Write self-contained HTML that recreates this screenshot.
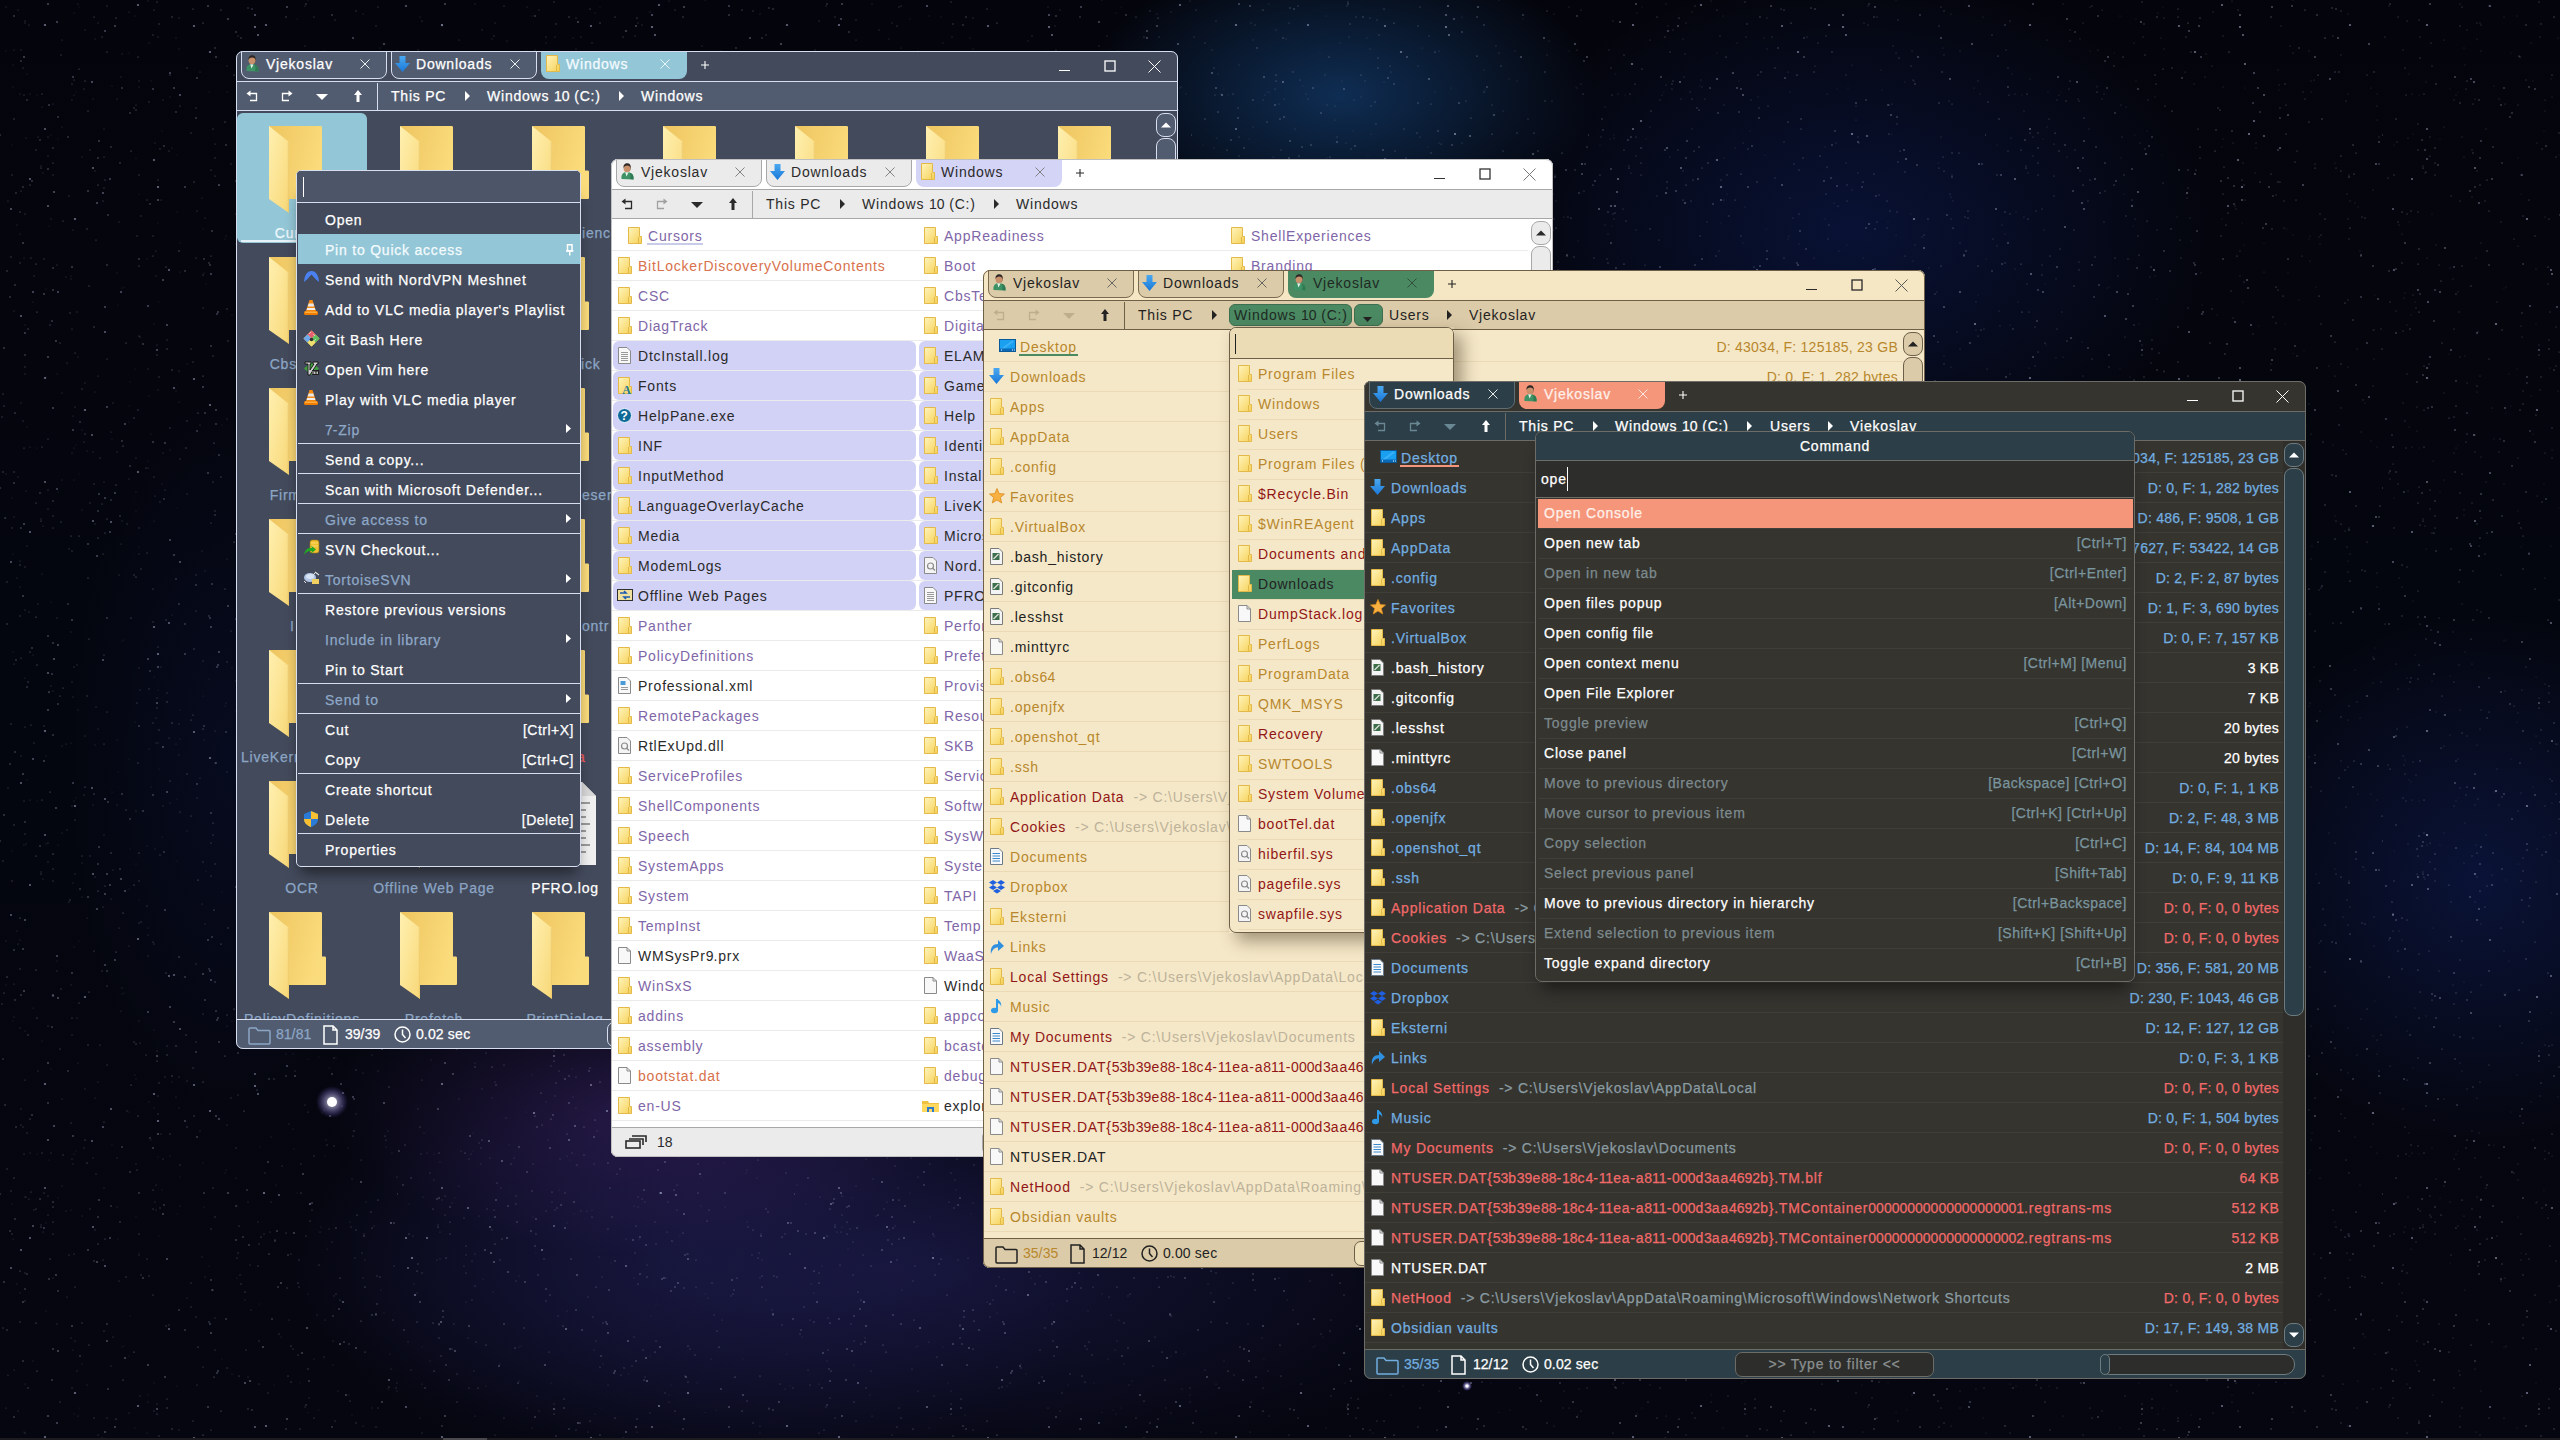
<!DOCTYPE html><html><head><meta charset="utf-8"><style>*{box-sizing:border-box}body{margin:0;width:2560px;height:1440px;overflow:hidden;position:relative;background:#05081a;font-family:"Liberation Sans",sans-serif;font-size:14px;letter-spacing:0.78px}.a{position:absolute}.t{position:absolute;white-space:nowrap;height:30px;line-height:30px}.dk .t{-webkit-text-stroke:0.25px currentColor}svg{position:absolute;overflow:visible}</style></head><body><svg width="0" height="0" style="position:absolute"><defs><linearGradient id="gfold" x1="0" y1="0" x2="1" y2="1"><stop offset="0" stop-color="#fff3b8"/><stop offset="1" stop-color="#f6d25a"/></linearGradient><linearGradient id="gblue" x1="0" y1="0" x2="0" y2="1"><stop offset="0" stop-color="#4aa8f0"/><stop offset="1" stop-color="#1a78d8"/></linearGradient><linearGradient id="gbigback" x1="0" y1="0" x2="1" y2="0.3"><stop offset="0" stop-color="#eec560"/><stop offset="1" stop-color="#fbdc7c"/></linearGradient><linearGradient id="gbigflap" x1="0" y1="0" x2="1" y2="1"><stop offset="0" stop-color="#fff0b0"/><stop offset="1" stop-color="#f8d878"/></linearGradient></defs></svg><div class="a" style="left:0;top:0;width:2560px;height:1440px;background:radial-gradient(ellipse 380px 170px at 650px 1110px, rgba(70,42,120,0.45), rgba(0,0,0,0) 85%),radial-gradient(ellipse 480px 260px at 700px 1260px, rgba(30,28,78,0.55), rgba(0,0,0,0) 85%),radial-gradient(ellipse 760px 260px at 900px 1270px, rgba(32,30,85,0.60), rgba(0,0,0,0) 80%),radial-gradient(ellipse 300px 170px at 1340px 95px, rgba(22,72,130,0.60), rgba(0,0,0,0) 85%),radial-gradient(ellipse 450px 320px at 1850px 230px, rgba(12,28,85,0.55), rgba(0,0,0,0) 80%),radial-gradient(ellipse 200px 450px at 230px 760px, rgba(12,20,60,0.35), rgba(0,0,0,0) 80%),radial-gradient(ellipse 330px 330px at 2480px 880px, rgba(16,32,95,0.50), rgba(0,0,0,0) 80%),linear-gradient(180deg, #04050c 0%, #04060f 50%, #05060f 100%)"></div><svg class="a" style="left:0;top:0" width="2560" height="1440"><defs><pattern id="sp0" width="397" height="353" patternUnits="userSpaceOnUse"><g fill="#c8d0f0"><circle cx="129" cy="53" r="0.5" fill-opacity="0.15"/><circle cx="213" cy="129" r="0.5" fill-opacity="0.51"/><circle cx="85" cy="30" r="0.8" fill-opacity="0.15"/><circle cx="36" cy="150" r="0.5" fill-opacity="0.53"/><circle cx="250" cy="206" r="0.5" fill-opacity="0.37"/><circle cx="157" cy="345" r="0.5" fill-opacity="0.36"/><circle cx="53" cy="148" r="1.1" fill-opacity="0.17"/><circle cx="122" cy="288" r="0.55" fill-opacity="0.16"/><circle cx="227" cy="66" r="0.5" fill-opacity="0.36"/><circle cx="25" cy="21" r="0.6" fill-opacity="0.33"/><circle cx="211" cy="274" r="0.9" fill-opacity="0.37"/><circle cx="180" cy="106" r="0.55" fill-opacity="0.42"/><circle cx="97" cy="203" r="1.1" fill-opacity="0.33"/><circle cx="136" cy="158" r="0.5" fill-opacity="0.17"/><circle cx="166" cy="267" r="0.55" fill-opacity="0.52"/><circle cx="167" cy="340" r="0.5" fill-opacity="0.45"/><circle cx="227" cy="309" r="0.7" fill-opacity="0.27"/><circle cx="139" cy="175" r="0.9" fill-opacity="0.15"/><circle cx="37" cy="95" r="0.5" fill-opacity="0.15"/><circle cx="278" cy="228" r="0.9" fill-opacity="0.24"/><circle cx="153" cy="236" r="0.5" fill-opacity="0.52"/><circle cx="141" cy="216" r="0.9" fill-opacity="0.15"/><circle cx="305" cy="46" r="0.6" fill-opacity="0.29"/><circle cx="364" cy="175" r="0.55" fill-opacity="0.31"/><circle cx="218" cy="312" r="0.8" fill-opacity="0.49"/><circle cx="111" cy="147" r="0.7" fill-opacity="0.41"/><circle cx="151" cy="81" r="0.5" fill-opacity="0.20"/><circle cx="92" cy="82" r="0.9" fill-opacity="0.48"/><circle cx="72" cy="100" r="0.55" fill-opacity="0.30"/><circle cx="147" cy="200" r="0.55" fill-opacity="0.42"/><circle cx="205" cy="218" r="0.5" fill-opacity="0.32"/><circle cx="346" cy="336" r="1.1" fill-opacity="0.29"/><circle cx="158" cy="37" r="0.8" fill-opacity="0.15"/><circle cx="27" cy="74" r="0.55" fill-opacity="0.17"/><circle cx="238" cy="36" r="0.55" fill-opacity="0.35"/><circle cx="377" cy="217" r="0.5" fill-opacity="0.50"/><circle cx="244" cy="52" r="0.6" fill-opacity="0.53"/><circle cx="239" cy="167" r="0.5" fill-opacity="0.49"/><circle cx="394" cy="164" r="0.9" fill-opacity="0.25"/><circle cx="57" cy="265" r="0.6" fill-opacity="0.33"/><circle cx="275" cy="182" r="0.6" fill-opacity="0.53"/><circle cx="210" cy="52" r="1.1" fill-opacity="0.51"/><circle cx="301" cy="105" r="0.5" fill-opacity="0.42"/><circle cx="104" cy="129" r="0.55" fill-opacity="0.27"/><circle cx="88" cy="191" r="1.1" fill-opacity="0.26"/><circle cx="89" cy="286" r="0.6" fill-opacity="0.47"/><circle cx="325" cy="261" r="0.6" fill-opacity="0.21"/><circle cx="196" cy="258" r="0.5" fill-opacity="0.46"/><circle cx="187" cy="68" r="0.7" fill-opacity="0.31"/><circle cx="372" cy="349" r="0.7" fill-opacity="0.15"/><circle cx="41" cy="166" r="0.7" fill-opacity="0.21"/><circle cx="248" cy="318" r="0.5" fill-opacity="0.33"/><circle cx="259" cy="282" r="0.5" fill-opacity="0.48"/><circle cx="48" cy="137" r="0.6" fill-opacity="0.33"/><circle cx="71" cy="279" r="0.7" fill-opacity="0.16"/><circle cx="376" cy="255" r="0.9" fill-opacity="0.29"/><circle cx="376" cy="256" r="0.55" fill-opacity="0.55"/><circle cx="11" cy="209" r="0.9" fill-opacity="0.47"/><circle cx="58" cy="292" r="0.9" fill-opacity="0.40"/><circle cx="139" cy="194" r="0.55" fill-opacity="0.13"/><circle cx="317" cy="256" r="0.5" fill-opacity="0.35"/><circle cx="371" cy="153" r="0.6" fill-opacity="0.48"/><circle cx="84" cy="89" r="0.6" fill-opacity="0.34"/><circle cx="303" cy="115" r="1.1" fill-opacity="0.30"/><circle cx="52" cy="321" r="0.7" fill-opacity="0.51"/><circle cx="263" cy="288" r="1.1" fill-opacity="0.30"/><circle cx="364" cy="177" r="1.1" fill-opacity="0.19"/><circle cx="203" cy="308" r="0.55" fill-opacity="0.38"/><circle cx="308" cy="53" r="0.55" fill-opacity="0.32"/><circle cx="288" cy="196" r="0.7" fill-opacity="0.41"/><circle cx="211" cy="170" r="0.5" fill-opacity="0.50"/><circle cx="23" cy="68" r="0.5" fill-opacity="0.45"/><circle cx="202" cy="198" r="0.5" fill-opacity="0.31"/><circle cx="243" cy="178" r="1.1" fill-opacity="0.21"/><circle cx="110" cy="179" r="0.9" fill-opacity="0.34"/><circle cx="98" cy="185" r="0.6" fill-opacity="0.52"/><circle cx="354" cy="72" r="0.9" fill-opacity="0.18"/><circle cx="48" cy="156" r="0.5" fill-opacity="0.41"/><circle cx="170" cy="75" r="0.6" fill-opacity="0.46"/><circle cx="356" cy="55" r="0.7" fill-opacity="0.18"/><circle cx="350" cy="342" r="0.6" fill-opacity="0.44"/><circle cx="37" cy="312" r="0.55" fill-opacity="0.55"/><circle cx="330" cy="57" r="0.8" fill-opacity="0.55"/><circle cx="160" cy="149" r="0.7" fill-opacity="0.26"/><circle cx="287" cy="7" r="1.1" fill-opacity="0.32"/><circle cx="279" cy="136" r="1.1" fill-opacity="0.39"/><circle cx="203" cy="23" r="0.6" fill-opacity="0.54"/><circle cx="42" cy="94" r="0.5" fill-opacity="0.51"/><circle cx="72" cy="267" r="0.8" fill-opacity="0.49"/><circle cx="268" cy="334" r="0.8" fill-opacity="0.18"/><circle cx="365" cy="201" r="0.7" fill-opacity="0.16"/><circle cx="23" cy="243" r="0.8" fill-opacity="0.50"/><circle cx="107" cy="6" r="0.5" fill-opacity="0.46"/><circle cx="33" cy="302" r="0.5" fill-opacity="0.23"/><circle cx="48" cy="4" r="1.1" fill-opacity="0.30"/><circle cx="363" cy="219" r="0.5" fill-opacity="0.35"/><circle cx="95" cy="39" r="0.55" fill-opacity="0.23"/><circle cx="72" cy="329" r="0.6" fill-opacity="0.35"/><circle cx="82" cy="157" r="0.55" fill-opacity="0.24"/><circle cx="319" cy="351" r="0.5" fill-opacity="0.13"/><circle cx="291" cy="195" r="0.6" fill-opacity="0.34"/><circle cx="98" cy="158" r="0.8" fill-opacity="0.40"/><circle cx="217" cy="314" r="1.1" fill-opacity="0.25"/><circle cx="85" cy="81" r="0.6" fill-opacity="0.48"/><circle cx="281" cy="224" r="0.8" fill-opacity="0.55"/><circle cx="390" cy="295" r="0.5" fill-opacity="0.15"/><circle cx="294" cy="90" r="0.55" fill-opacity="0.14"/><circle cx="264" cy="134" r="1.1" fill-opacity="0.41"/><circle cx="112" cy="86" r="0.6" fill-opacity="0.14"/><circle cx="74" cy="95" r="0.5" fill-opacity="0.23"/><circle cx="382" cy="343" r="1.1" fill-opacity="0.26"/><circle cx="14" cy="311" r="0.6" fill-opacity="0.27"/><circle cx="0" cy="135" r="0.9" fill-opacity="0.24"/><circle cx="260" cy="88" r="0.5" fill-opacity="0.16"/><circle cx="324" cy="51" r="0.5" fill-opacity="0.29"/><circle cx="119" cy="222" r="0.5" fill-opacity="0.37"/><circle cx="210" cy="265" r="0.8" fill-opacity="0.45"/><circle cx="286" cy="174" r="0.6" fill-opacity="0.43"/><circle cx="255" cy="15" r="1.1" fill-opacity="0.39"/><circle cx="291" cy="287" r="0.55" fill-opacity="0.51"/><circle cx="299" cy="201" r="0.5" fill-opacity="0.48"/><circle cx="232" cy="315" r="0.6" fill-opacity="0.16"/><circle cx="17" cy="225" r="0.5" fill-opacity="0.28"/><circle cx="179" cy="18" r="0.5" fill-opacity="0.39"/><circle cx="270" cy="173" r="0.5" fill-opacity="0.32"/><circle cx="28" cy="329" r="1.1" fill-opacity="0.16"/><circle cx="209" cy="263" r="0.9" fill-opacity="0.23"/><circle cx="30" cy="94" r="0.6" fill-opacity="0.22"/><circle cx="258" cy="163" r="0.8" fill-opacity="0.15"/><circle cx="361" cy="101" r="0.5" fill-opacity="0.39"/><circle cx="255" cy="27" r="0.55" fill-opacity="0.26"/><circle cx="259" cy="245" r="0.55" fill-opacity="0.13"/><circle cx="24" cy="95" r="0.5" fill-opacity="0.42"/><circle cx="268" cy="103" r="1.1" fill-opacity="0.24"/><circle cx="185" cy="271" r="1.1" fill-opacity="0.21"/><circle cx="388" cy="330" r="0.5" fill-opacity="0.24"/><circle cx="30" cy="179" r="0.9" fill-opacity="0.55"/><circle cx="154" cy="324" r="0.6" fill-opacity="0.15"/><circle cx="36" cy="264" r="0.6" fill-opacity="0.53"/><circle cx="53" cy="290" r="1.1" fill-opacity="0.24"/><circle cx="45" cy="129" r="0.9" fill-opacity="0.51"/><circle cx="193" cy="9" r="0.5" fill-opacity="0.53"/><circle cx="271" cy="143" r="0.55" fill-opacity="0.30"/><circle cx="149" cy="43" r="0.7" fill-opacity="0.12"/><circle cx="298" cy="296" r="0.5" fill-opacity="0.52"/><circle cx="78" cy="4" r="0.6" fill-opacity="0.23"/><circle cx="26" cy="138" r="0.5" fill-opacity="0.28"/><circle cx="170" cy="97" r="0.5" fill-opacity="0.24"/><circle cx="20" cy="234" r="0.55" fill-opacity="0.23"/><circle cx="105" cy="180" r="0.6" fill-opacity="0.45"/><circle cx="312" cy="151" r="0.5" fill-opacity="0.47"/><circle cx="250" cy="322" r="1.1" fill-opacity="0.36"/><circle cx="286" cy="17" r="0.8" fill-opacity="0.31"/><circle cx="299" cy="228" r="0.6" fill-opacity="0.33"/><circle cx="362" cy="194" r="0.55" fill-opacity="0.32"/><circle cx="136" cy="105" r="0.6" fill-opacity="0.29"/><circle cx="95" cy="171" r="0.8" fill-opacity="0.17"/><circle cx="255" cy="27" r="1.1" fill-opacity="0.51"/><circle cx="197" cy="78" r="0.7" fill-opacity="0.55"/><circle cx="179" cy="49" r="0.6" fill-opacity="0.22"/><circle cx="69" cy="196" r="0.7" fill-opacity="0.22"/><circle cx="103" cy="201" r="0.5" fill-opacity="0.44"/><circle cx="164" cy="146" r="1.1" fill-opacity="0.21"/><circle cx="107" cy="265" r="0.9" fill-opacity="0.24"/><circle cx="384" cy="44" r="1.1" fill-opacity="0.35"/><circle cx="314" cy="300" r="0.5" fill-opacity="0.24"/><circle cx="99" cy="141" r="0.9" fill-opacity="0.31"/><circle cx="124" cy="287" r="0.5" fill-opacity="0.17"/><circle cx="169" cy="270" r="0.9" fill-opacity="0.54"/><circle cx="194" cy="26" r="1.1" fill-opacity="0.49"/><circle cx="386" cy="88" r="0.5" fill-opacity="0.22"/><circle cx="60" cy="343" r="0.5" fill-opacity="0.52"/><circle cx="287" cy="229" r="0.9" fill-opacity="0.16"/><circle cx="308" cy="0" r="0.55" fill-opacity="0.22"/><circle cx="365" cy="228" r="0.6" fill-opacity="0.53"/><circle cx="249" cy="186" r="0.8" fill-opacity="0.42"/><circle cx="45" cy="25" r="1.1" fill-opacity="0.53"/><circle cx="76" cy="92" r="0.5" fill-opacity="0.12"/><circle cx="120" cy="163" r="0.7" fill-opacity="0.40"/><circle cx="351" cy="168" r="0.6" fill-opacity="0.36"/><circle cx="12" cy="145" r="0.6" fill-opacity="0.14"/><circle cx="77" cy="312" r="0.8" fill-opacity="0.15"/><circle cx="90" cy="150" r="0.7" fill-opacity="0.22"/><circle cx="14" cy="119" r="0.8" fill-opacity="0.28"/><circle cx="157" cy="2" r="0.6" fill-opacity="0.44"/><circle cx="200" cy="72" r="0.6" fill-opacity="0.25"/><circle cx="326" cy="81" r="0.6" fill-opacity="0.23"/><circle cx="353" cy="38" r="0.9" fill-opacity="0.38"/><circle cx="356" cy="171" r="0.5" fill-opacity="0.53"/><circle cx="58" cy="139" r="0.6" fill-opacity="0.13"/><circle cx="237" cy="147" r="0.5" fill-opacity="0.20"/><circle cx="179" cy="251" r="0.7" fill-opacity="0.44"/><circle cx="396" cy="329" r="0.7" fill-opacity="0.20"/><circle cx="259" cy="185" r="0.9" fill-opacity="0.13"/><circle cx="264" cy="134" r="0.7" fill-opacity="0.54"/><circle cx="176" cy="38" r="0.5" fill-opacity="0.24"/><circle cx="140" cy="337" r="0.5" fill-opacity="0.36"/><circle cx="301" cy="134" r="0.6" fill-opacity="0.47"/><circle cx="172" cy="17" r="0.9" fill-opacity="0.20"/><circle cx="215" cy="158" r="0.7" fill-opacity="0.28"/><circle cx="356" cy="11" r="0.8" fill-opacity="0.23"/><circle cx="248" cy="143" r="0.8" fill-opacity="0.13"/><circle cx="25" cy="325" r="0.6" fill-opacity="0.20"/><circle cx="25" cy="214" r="0.7" fill-opacity="0.24"/><circle cx="380" cy="218" r="0.6" fill-opacity="0.44"/><circle cx="274" cy="326" r="0.6" fill-opacity="0.12"/><circle cx="300" cy="324" r="0.5" fill-opacity="0.13"/><circle cx="93" cy="168" r="0.9" fill-opacity="0.53"/><circle cx="153" cy="89" r="0.8" fill-opacity="0.47"/><circle cx="53" cy="175" r="0.5" fill-opacity="0.47"/><circle cx="293" cy="290" r="0.55" fill-opacity="0.38"/><circle cx="130" cy="113" r="0.7" fill-opacity="0.46"/><circle cx="236" cy="181" r="0.8" fill-opacity="0.44"/><circle cx="98" cy="23" r="0.5" fill-opacity="0.33"/><circle cx="216" cy="57" r="0.8" fill-opacity="0.50"/><circle cx="392" cy="94" r="0.5" fill-opacity="0.21"/><circle cx="167" cy="349" r="0.9" fill-opacity="0.19"/><circle cx="53" cy="163" r="0.6" fill-opacity="0.44"/><circle cx="336" cy="235" r="0.5" fill-opacity="0.46"/><circle cx="117" cy="99" r="0.6" fill-opacity="0.28"/><circle cx="293" cy="70" r="0.6" fill-opacity="0.20"/><circle cx="93" cy="99" r="0.6" fill-opacity="0.26"/><circle cx="157" cy="350" r="1.1" fill-opacity="0.35"/><circle cx="258" cy="35" r="0.9" fill-opacity="0.55"/><circle cx="41" cy="168" r="0.6" fill-opacity="0.48"/><circle cx="363" cy="14" r="0.6" fill-opacity="0.22"/><circle cx="20" cy="212" r="0.6" fill-opacity="0.52"/><circle cx="148" cy="306" r="0.9" fill-opacity="0.38"/><circle cx="308" cy="235" r="0.5" fill-opacity="0.17"/><circle cx="237" cy="219" r="0.6" fill-opacity="0.14"/><circle cx="135" cy="16" r="0.6" fill-opacity="0.14"/><circle cx="291" cy="323" r="0.5" fill-opacity="0.47"/><circle cx="162" cy="131" r="0.6" fill-opacity="0.15"/><circle cx="12" cy="175" r="0.9" fill-opacity="0.15"/><circle cx="40" cy="140" r="1.1" fill-opacity="0.19"/><circle cx="212" cy="231" r="0.8" fill-opacity="0.42"/><circle cx="163" cy="100" r="0.6" fill-opacity="0.30"/><circle cx="20" cy="263" r="0.7" fill-opacity="0.30"/><circle cx="7" cy="271" r="0.7" fill-opacity="0.40"/><circle cx="155" cy="143" r="0.5" fill-opacity="0.31"/><circle cx="62" cy="40" r="0.5" fill-opacity="0.29"/><circle cx="350" cy="163" r="0.55" fill-opacity="0.18"/><circle cx="21" cy="50" r="0.8" fill-opacity="0.16"/><circle cx="247" cy="131" r="1.1" fill-opacity="0.19"/><circle cx="138" cy="57" r="0.55" fill-opacity="0.52"/><circle cx="43" cy="173" r="0.6" fill-opacity="0.25"/><circle cx="332" cy="15" r="0.9" fill-opacity="0.26"/><circle cx="241" cy="225" r="0.5" fill-opacity="0.51"/><circle cx="246" cy="291" r="0.55" fill-opacity="0.40"/><circle cx="340" cy="219" r="0.6" fill-opacity="0.48"/><circle cx="73" cy="77" r="0.8" fill-opacity="0.52"/><circle cx="62" cy="127" r="0.55" fill-opacity="0.23"/><circle cx="288" cy="317" r="0.5" fill-opacity="0.50"/><circle cx="334" cy="237" r="0.7" fill-opacity="0.17"/><circle cx="238" cy="194" r="0.6" fill-opacity="0.40"/><circle cx="122" cy="88" r="0.8" fill-opacity="0.40"/><circle cx="177" cy="155" r="0.5" fill-opacity="0.12"/><circle cx="391" cy="164" r="0.9" fill-opacity="0.45"/><circle cx="310" cy="162" r="0.55" fill-opacity="0.47"/><circle cx="159" cy="24" r="0.7" fill-opacity="0.31"/></g></pattern><pattern id="sp1" width="521" height="467" patternUnits="userSpaceOnUse"><g fill="#c8d0f0"><circle cx="48" cy="206" r="1.1" fill-opacity="0.40"/><circle cx="21" cy="61" r="0.7" fill-opacity="0.45"/><circle cx="266" cy="25" r="1.1" fill-opacity="0.50"/><circle cx="340" cy="366" r="0.5" fill-opacity="0.49"/><circle cx="519" cy="342" r="0.5" fill-opacity="0.20"/><circle cx="511" cy="230" r="0.55" fill-opacity="0.42"/><circle cx="376" cy="103" r="0.7" fill-opacity="0.38"/><circle cx="131" cy="151" r="0.6" fill-opacity="0.51"/><circle cx="238" cy="119" r="0.9" fill-opacity="0.21"/><circle cx="137" cy="236" r="0.7" fill-opacity="0.28"/><circle cx="104" cy="188" r="0.6" fill-opacity="0.41"/><circle cx="467" cy="79" r="0.6" fill-opacity="0.17"/><circle cx="277" cy="297" r="0.7" fill-opacity="0.54"/><circle cx="236" cy="244" r="0.5" fill-opacity="0.23"/><circle cx="279" cy="400" r="0.7" fill-opacity="0.23"/><circle cx="516" cy="270" r="0.7" fill-opacity="0.26"/><circle cx="42" cy="107" r="0.5" fill-opacity="0.25"/><circle cx="269" cy="145" r="0.7" fill-opacity="0.44"/><circle cx="389" cy="104" r="0.6" fill-opacity="0.38"/><circle cx="225" cy="239" r="0.5" fill-opacity="0.18"/><circle cx="118" cy="305" r="0.5" fill-opacity="0.14"/><circle cx="295" cy="142" r="1.1" fill-opacity="0.27"/><circle cx="117" cy="273" r="0.55" fill-opacity="0.21"/><circle cx="325" cy="222" r="0.55" fill-opacity="0.13"/><circle cx="418" cy="330" r="0.9" fill-opacity="0.16"/><circle cx="333" cy="407" r="0.6" fill-opacity="0.29"/><circle cx="138" cy="5" r="1.1" fill-opacity="0.50"/><circle cx="310" cy="270" r="1.1" fill-opacity="0.44"/><circle cx="129" cy="422" r="0.5" fill-opacity="0.15"/><circle cx="13" cy="87" r="0.55" fill-opacity="0.15"/><circle cx="406" cy="6" r="1.1" fill-opacity="0.40"/><circle cx="103" cy="193" r="1.1" fill-opacity="0.38"/><circle cx="264" cy="300" r="0.55" fill-opacity="0.34"/><circle cx="33" cy="292" r="0.9" fill-opacity="0.43"/><circle cx="3" cy="394" r="0.9" fill-opacity="0.15"/><circle cx="342" cy="82" r="0.5" fill-opacity="0.23"/><circle cx="336" cy="58" r="0.6" fill-opacity="0.43"/><circle cx="139" cy="259" r="0.8" fill-opacity="0.41"/><circle cx="478" cy="454" r="0.6" fill-opacity="0.40"/><circle cx="503" cy="101" r="1.1" fill-opacity="0.13"/><circle cx="136" cy="110" r="0.6" fill-opacity="0.53"/><circle cx="389" cy="153" r="0.8" fill-opacity="0.26"/><circle cx="125" cy="424" r="1.1" fill-opacity="0.32"/><circle cx="437" cy="326" r="0.5" fill-opacity="0.31"/><circle cx="378" cy="266" r="0.6" fill-opacity="0.46"/><circle cx="204" cy="273" r="0.55" fill-opacity="0.18"/><circle cx="14" cy="50" r="0.55" fill-opacity="0.27"/><circle cx="74" cy="13" r="0.5" fill-opacity="0.18"/><circle cx="335" cy="20" r="0.5" fill-opacity="0.44"/><circle cx="34" cy="276" r="0.7" fill-opacity="0.21"/><circle cx="497" cy="249" r="0.5" fill-opacity="0.50"/><circle cx="394" cy="332" r="0.8" fill-opacity="0.17"/><circle cx="107" cy="52" r="0.5" fill-opacity="0.53"/><circle cx="475" cy="352" r="0.5" fill-opacity="0.47"/><circle cx="329" cy="134" r="0.5" fill-opacity="0.18"/><circle cx="413" cy="302" r="0.6" fill-opacity="0.26"/><circle cx="221" cy="10" r="0.6" fill-opacity="0.52"/><circle cx="25" cy="355" r="0.7" fill-opacity="0.45"/><circle cx="314" cy="222" r="0.6" fill-opacity="0.39"/><circle cx="16" cy="193" r="0.8" fill-opacity="0.34"/><circle cx="51" cy="219" r="0.5" fill-opacity="0.35"/><circle cx="113" cy="403" r="0.5" fill-opacity="0.37"/><circle cx="150" cy="204" r="1.1" fill-opacity="0.21"/><circle cx="397" cy="457" r="0.5" fill-opacity="0.27"/><circle cx="50" cy="325" r="0.55" fill-opacity="0.54"/><circle cx="309" cy="447" r="1.1" fill-opacity="0.23"/><circle cx="492" cy="133" r="0.6" fill-opacity="0.52"/><circle cx="121" cy="77" r="0.5" fill-opacity="0.33"/><circle cx="516" cy="262" r="0.5" fill-opacity="0.39"/><circle cx="185" cy="187" r="0.8" fill-opacity="0.50"/><circle cx="388" cy="197" r="0.5" fill-opacity="0.28"/><circle cx="158" cy="200" r="1.1" fill-opacity="0.34"/><circle cx="198" cy="413" r="0.6" fill-opacity="0.53"/><circle cx="66" cy="277" r="0.5" fill-opacity="0.27"/><circle cx="170" cy="73" r="0.9" fill-opacity="0.40"/><circle cx="387" cy="79" r="0.9" fill-opacity="0.42"/><circle cx="134" cy="108" r="0.7" fill-opacity="0.32"/><circle cx="461" cy="111" r="0.6" fill-opacity="0.24"/><circle cx="393" cy="386" r="0.55" fill-opacity="0.43"/><circle cx="508" cy="338" r="1.1" fill-opacity="0.27"/><circle cx="123" cy="446" r="0.6" fill-opacity="0.54"/><circle cx="380" cy="48" r="0.5" fill-opacity="0.20"/><circle cx="79" cy="69" r="0.6" fill-opacity="0.44"/><circle cx="227" cy="92" r="0.5" fill-opacity="0.24"/><circle cx="461" cy="217" r="0.5" fill-opacity="0.29"/><circle cx="412" cy="324" r="1.1" fill-opacity="0.54"/><circle cx="154" cy="10" r="0.6" fill-opacity="0.38"/><circle cx="211" cy="346" r="0.8" fill-opacity="0.42"/><circle cx="306" cy="302" r="0.6" fill-opacity="0.41"/><circle cx="340" cy="410" r="0.6" fill-opacity="0.41"/><circle cx="334" cy="212" r="0.7" fill-opacity="0.23"/><circle cx="365" cy="418" r="0.6" fill-opacity="0.46"/><circle cx="372" cy="294" r="0.6" fill-opacity="0.49"/><circle cx="252" cy="9" r="0.8" fill-opacity="0.34"/><circle cx="344" cy="408" r="0.7" fill-opacity="0.45"/><circle cx="203" cy="229" r="0.5" fill-opacity="0.14"/><circle cx="283" cy="75" r="0.6" fill-opacity="0.34"/><circle cx="53" cy="268" r="1.1" fill-opacity="0.21"/><circle cx="248" cy="8" r="0.7" fill-opacity="0.34"/><circle cx="214" cy="443" r="0.6" fill-opacity="0.55"/><circle cx="96" cy="240" r="0.5" fill-opacity="0.43"/><circle cx="320" cy="298" r="0.6" fill-opacity="0.24"/><circle cx="208" cy="6" r="0.8" fill-opacity="0.51"/><circle cx="327" cy="315" r="0.6" fill-opacity="0.17"/><circle cx="158" cy="187" r="1.1" fill-opacity="0.54"/><circle cx="518" cy="449" r="0.9" fill-opacity="0.21"/><circle cx="67" cy="363" r="0.6" fill-opacity="0.32"/><circle cx="293" cy="106" r="0.55" fill-opacity="0.27"/><circle cx="333" cy="382" r="0.8" fill-opacity="0.32"/><circle cx="153" cy="256" r="0.55" fill-opacity="0.46"/><circle cx="245" cy="366" r="0.6" fill-opacity="0.23"/><circle cx="196" cy="118" r="0.8" fill-opacity="0.41"/><circle cx="251" cy="376" r="0.6" fill-opacity="0.27"/><circle cx="341" cy="150" r="0.9" fill-opacity="0.30"/><circle cx="332" cy="308" r="0.7" fill-opacity="0.19"/><circle cx="158" cy="180" r="0.5" fill-opacity="0.48"/><circle cx="472" cy="366" r="0.55" fill-opacity="0.35"/><circle cx="180" cy="272" r="0.5" fill-opacity="0.21"/><circle cx="38" cy="137" r="0.5" fill-opacity="0.37"/><circle cx="445" cy="87" r="0.9" fill-opacity="0.27"/><circle cx="80" cy="422" r="1.1" fill-opacity="0.19"/><circle cx="464" cy="284" r="0.5" fill-opacity="0.41"/><circle cx="466" cy="368" r="0.6" fill-opacity="0.20"/><circle cx="361" cy="248" r="0.9" fill-opacity="0.41"/><circle cx="61" cy="55" r="0.8" fill-opacity="0.22"/><circle cx="73" cy="230" r="0.5" fill-opacity="0.33"/><circle cx="472" cy="327" r="0.6" fill-opacity="0.33"/><circle cx="281" cy="403" r="0.5" fill-opacity="0.19"/><circle cx="167" cy="325" r="0.9" fill-opacity="0.41"/><circle cx="438" cy="175" r="0.8" fill-opacity="0.55"/><circle cx="352" cy="84" r="0.7" fill-opacity="0.39"/><circle cx="15" cy="285" r="0.7" fill-opacity="0.47"/><circle cx="49" cy="226" r="0.55" fill-opacity="0.13"/><circle cx="374" cy="292" r="0.7" fill-opacity="0.16"/><circle cx="343" cy="159" r="1.1" fill-opacity="0.36"/><circle cx="475" cy="133" r="0.7" fill-opacity="0.30"/><circle cx="289" cy="386" r="0.6" fill-opacity="0.27"/><circle cx="257" cy="156" r="0.6" fill-opacity="0.50"/><circle cx="180" cy="95" r="0.9" fill-opacity="0.46"/><circle cx="172" cy="148" r="0.6" fill-opacity="0.17"/><circle cx="507" cy="41" r="0.5" fill-opacity="0.29"/><circle cx="289" cy="190" r="0.5" fill-opacity="0.29"/><circle cx="57" cy="22" r="0.9" fill-opacity="0.38"/><circle cx="343" cy="368" r="1.1" fill-opacity="0.38"/><circle cx="321" cy="293" r="0.5" fill-opacity="0.21"/><circle cx="348" cy="214" r="0.55" fill-opacity="0.16"/><circle cx="94" cy="17" r="0.5" fill-opacity="0.51"/><circle cx="342" cy="172" r="0.55" fill-opacity="0.46"/><circle cx="293" cy="120" r="0.6" fill-opacity="0.20"/><circle cx="18" cy="10" r="0.5" fill-opacity="0.33"/><circle cx="272" cy="385" r="0.8" fill-opacity="0.37"/><circle cx="479" cy="209" r="0.5" fill-opacity="0.41"/><circle cx="309" cy="464" r="0.55" fill-opacity="0.32"/><circle cx="215" cy="48" r="0.9" fill-opacity="0.21"/><circle cx="79" cy="7" r="0.5" fill-opacity="0.12"/><circle cx="349" cy="461" r="0.5" fill-opacity="0.21"/><circle cx="63" cy="221" r="0.6" fill-opacity="0.43"/><circle cx="126" cy="343" r="0.55" fill-opacity="0.52"/><circle cx="191" cy="349" r="0.55" fill-opacity="0.43"/><circle cx="44" cy="294" r="0.9" fill-opacity="0.32"/><circle cx="486" cy="119" r="0.5" fill-opacity="0.43"/><circle cx="6" cy="7" r="0.5" fill-opacity="0.29"/><circle cx="163" cy="280" r="0.9" fill-opacity="0.38"/><circle cx="165" cy="443" r="0.9" fill-opacity="0.32"/><circle cx="87" cy="451" r="0.5" fill-opacity="0.28"/><circle cx="336" cy="294" r="0.8" fill-opacity="0.33"/><circle cx="405" cy="211" r="0.6" fill-opacity="0.46"/><circle cx="295" cy="137" r="0.5" fill-opacity="0.39"/><circle cx="339" cy="375" r="0.7" fill-opacity="0.49"/><circle cx="378" cy="7" r="0.55" fill-opacity="0.38"/><circle cx="161" cy="200" r="0.6" fill-opacity="0.28"/><circle cx="357" cy="281" r="0.6" fill-opacity="0.47"/><circle cx="148" cy="1" r="0.6" fill-opacity="0.24"/><circle cx="82" cy="430" r="0.5" fill-opacity="0.24"/><circle cx="73" cy="416" r="0.55" fill-opacity="0.24"/><circle cx="443" cy="377" r="0.9" fill-opacity="0.27"/><circle cx="44" cy="259" r="0.8" fill-opacity="0.21"/><circle cx="391" cy="435" r="0.6" fill-opacity="0.25"/><circle cx="30" cy="185" r="0.6" fill-opacity="0.52"/><circle cx="306" cy="4" r="0.8" fill-opacity="0.32"/><circle cx="46" cy="377" r="0.5" fill-opacity="0.22"/><circle cx="302" cy="419" r="1.1" fill-opacity="0.26"/><circle cx="264" cy="94" r="0.6" fill-opacity="0.20"/><circle cx="94" cy="327" r="0.7" fill-opacity="0.37"/><circle cx="187" cy="364" r="0.55" fill-opacity="0.23"/><circle cx="481" cy="230" r="0.5" fill-opacity="0.28"/><circle cx="241" cy="38" r="0.7" fill-opacity="0.38"/><circle cx="180" cy="243" r="0.5" fill-opacity="0.16"/><circle cx="107" cy="407" r="0.9" fill-opacity="0.37"/><circle cx="111" cy="432" r="0.6" fill-opacity="0.30"/><circle cx="493" cy="358" r="0.55" fill-opacity="0.23"/><circle cx="20" cy="94" r="0.55" fill-opacity="0.28"/><circle cx="14" cy="16" r="0.7" fill-opacity="0.49"/><circle cx="239" cy="442" r="0.5" fill-opacity="0.49"/><circle cx="333" cy="431" r="0.5" fill-opacity="0.23"/><circle cx="294" cy="299" r="1.1" fill-opacity="0.29"/><circle cx="234" cy="75" r="0.6" fill-opacity="0.55"/><circle cx="116" cy="18" r="0.6" fill-opacity="0.52"/><circle cx="31" cy="258" r="0.5" fill-opacity="0.48"/><circle cx="25" cy="367" r="0.9" fill-opacity="0.14"/><circle cx="75" cy="353" r="0.6" fill-opacity="0.41"/><circle cx="156" cy="276" r="0.5" fill-opacity="0.32"/><circle cx="194" cy="182" r="0.7" fill-opacity="0.33"/><circle cx="88" cy="111" r="0.55" fill-opacity="0.51"/><circle cx="465" cy="219" r="0.6" fill-opacity="0.46"/><circle cx="82" cy="389" r="0.5" fill-opacity="0.52"/><circle cx="452" cy="415" r="0.55" fill-opacity="0.45"/><circle cx="499" cy="432" r="0.8" fill-opacity="0.48"/><circle cx="327" cy="211" r="0.7" fill-opacity="0.26"/><circle cx="122" cy="54" r="0.7" fill-opacity="0.18"/><circle cx="115" cy="26" r="0.9" fill-opacity="0.36"/><circle cx="75" cy="407" r="0.6" fill-opacity="0.30"/><circle cx="129" cy="12" r="0.6" fill-opacity="0.26"/><circle cx="87" cy="229" r="0.7" fill-opacity="0.32"/><circle cx="251" cy="72" r="1.1" fill-opacity="0.14"/><circle cx="466" cy="312" r="0.6" fill-opacity="0.36"/><circle cx="435" cy="56" r="0.6" fill-opacity="0.54"/><circle cx="225" cy="122" r="0.6" fill-opacity="0.52"/><circle cx="51" cy="135" r="0.55" fill-opacity="0.14"/><circle cx="378" cy="137" r="0.5" fill-opacity="0.31"/><circle cx="265" cy="239" r="0.9" fill-opacity="0.12"/><circle cx="434" cy="246" r="0.55" fill-opacity="0.27"/><circle cx="21" cy="191" r="0.6" fill-opacity="0.37"/><circle cx="72" cy="84" r="0.6" fill-opacity="0.43"/><circle cx="102" cy="37" r="0.5" fill-opacity="0.50"/><circle cx="381" cy="356" r="0.55" fill-opacity="0.21"/><circle cx="319" cy="331" r="0.6" fill-opacity="0.37"/><circle cx="105" cy="31" r="1.1" fill-opacity="0.30"/><circle cx="376" cy="26" r="0.7" fill-opacity="0.26"/><circle cx="439" cy="404" r="0.9" fill-opacity="0.16"/><circle cx="213" cy="356" r="0.55" fill-opacity="0.49"/><circle cx="139" cy="87" r="0.7" fill-opacity="0.14"/><circle cx="366" cy="268" r="0.5" fill-opacity="0.27"/><circle cx="486" cy="452" r="0.5" fill-opacity="0.17"/><circle cx="372" cy="381" r="0.7" fill-opacity="0.46"/><circle cx="452" cy="269" r="0.5" fill-opacity="0.25"/><circle cx="56" cy="341" r="0.9" fill-opacity="0.34"/><circle cx="276" cy="251" r="0.5" fill-opacity="0.22"/><circle cx="46" cy="289" r="0.55" fill-opacity="0.16"/><circle cx="130" cy="382" r="0.5" fill-opacity="0.13"/><circle cx="483" cy="345" r="0.6" fill-opacity="0.13"/><circle cx="312" cy="269" r="1.1" fill-opacity="0.22"/><circle cx="231" cy="164" r="0.5" fill-opacity="0.43"/><circle cx="24" cy="57" r="0.9" fill-opacity="0.37"/><circle cx="397" cy="51" r="0.5" fill-opacity="0.29"/><circle cx="71" cy="276" r="0.6" fill-opacity="0.18"/><circle cx="298" cy="349" r="0.55" fill-opacity="0.53"/><circle cx="10" cy="297" r="0.8" fill-opacity="0.38"/><circle cx="314" cy="17" r="0.5" fill-opacity="0.45"/><circle cx="176" cy="112" r="0.7" fill-opacity="0.43"/><circle cx="439" cy="264" r="0.7" fill-opacity="0.47"/><circle cx="442" cy="25" r="1.1" fill-opacity="0.18"/><circle cx="354" cy="165" r="0.8" fill-opacity="0.41"/><circle cx="6" cy="51" r="0.55" fill-opacity="0.15"/><circle cx="226" cy="236" r="0.5" fill-opacity="0.22"/><circle cx="219" cy="185" r="0.9" fill-opacity="0.39"/><circle cx="422" cy="413" r="0.5" fill-opacity="0.13"/><circle cx="334" cy="124" r="0.6" fill-opacity="0.39"/><circle cx="420" cy="17" r="0.5" fill-opacity="0.23"/><circle cx="271" cy="203" r="0.5" fill-opacity="0.24"/><circle cx="159" cy="302" r="0.5" fill-opacity="0.15"/><circle cx="500" cy="430" r="0.6" fill-opacity="0.16"/><circle cx="308" cy="435" r="0.9" fill-opacity="0.17"/><circle cx="68" cy="137" r="0.8" fill-opacity="0.37"/><circle cx="143" cy="344" r="1.1" fill-opacity="0.24"/><circle cx="237" cy="324" r="0.6" fill-opacity="0.40"/><circle cx="105" cy="332" r="0.9" fill-opacity="0.50"/><circle cx="158" cy="223" r="0.6" fill-opacity="0.13"/><circle cx="174" cy="88" r="1.1" fill-opacity="0.28"/><circle cx="305" cy="6" r="0.7" fill-opacity="0.19"/><circle cx="496" cy="151" r="0.7" fill-opacity="0.33"/><circle cx="148" cy="461" r="0.6" fill-opacity="0.14"/><circle cx="11" cy="257" r="0.7" fill-opacity="0.31"/><circle cx="32" cy="181" r="0.9" fill-opacity="0.27"/><circle cx="397" cy="243" r="0.55" fill-opacity="0.30"/><circle cx="348" cy="66" r="0.6" fill-opacity="0.39"/><circle cx="443" cy="383" r="1.1" fill-opacity="0.16"/><circle cx="446" cy="431" r="0.9" fill-opacity="0.24"/><circle cx="329" cy="295" r="0.55" fill-opacity="0.30"/><circle cx="54" cy="192" r="1.1" fill-opacity="0.37"/><circle cx="259" cy="450" r="0.55" fill-opacity="0.30"/><circle cx="408" cy="408" r="0.5" fill-opacity="0.28"/><circle cx="236" cy="214" r="0.7" fill-opacity="0.25"/><circle cx="204" cy="259" r="0.8" fill-opacity="0.40"/><circle cx="4" cy="348" r="0.9" fill-opacity="0.28"/><circle cx="156" cy="251" r="0.55" fill-opacity="0.31"/><circle cx="196" cy="108" r="0.7" fill-opacity="0.26"/><circle cx="439" cy="391" r="0.7" fill-opacity="0.21"/><circle cx="222" cy="425" r="0.5" fill-opacity="0.13"/><circle cx="134" cy="418" r="0.6" fill-opacity="0.52"/><circle cx="403" cy="251" r="0.8" fill-opacity="0.34"/><circle cx="269" cy="320" r="0.8" fill-opacity="0.32"/><circle cx="21" cy="316" r="0.9" fill-opacity="0.53"/><circle cx="352" cy="245" r="0.5" fill-opacity="0.30"/><circle cx="261" cy="303" r="0.55" fill-opacity="0.50"/><circle cx="502" cy="227" r="0.9" fill-opacity="0.45"/><circle cx="468" cy="274" r="1.1" fill-opacity="0.44"/><circle cx="48" cy="169" r="0.7" fill-opacity="0.54"/><circle cx="430" cy="239" r="0.5" fill-opacity="0.40"/><circle cx="154" cy="160" r="1.1" fill-opacity="0.50"/></g></pattern><pattern id="sp2" width="613" height="587" patternUnits="userSpaceOnUse"><g fill="#c8d0f0"><circle cx="258" cy="92" r="0.6" fill-opacity="0.47"/><circle cx="127" cy="524" r="0.8" fill-opacity="0.20"/><circle cx="386" cy="354" r="0.7" fill-opacity="0.37"/><circle cx="387" cy="424" r="0.8" fill-opacity="0.12"/><circle cx="2" cy="417" r="1.1" fill-opacity="0.12"/><circle cx="187" cy="494" r="0.5" fill-opacity="0.41"/><circle cx="121" cy="292" r="1.1" fill-opacity="0.36"/><circle cx="534" cy="526" r="1.1" fill-opacity="0.55"/><circle cx="352" cy="241" r="0.5" fill-opacity="0.18"/><circle cx="318" cy="299" r="0.5" fill-opacity="0.16"/><circle cx="105" cy="307" r="0.9" fill-opacity="0.38"/><circle cx="494" cy="36" r="0.5" fill-opacity="0.41"/><circle cx="355" cy="84" r="0.6" fill-opacity="0.27"/><circle cx="104" cy="157" r="0.5" fill-opacity="0.49"/><circle cx="581" cy="37" r="0.6" fill-opacity="0.31"/><circle cx="236" cy="32" r="0.8" fill-opacity="0.37"/><circle cx="588" cy="258" r="0.6" fill-opacity="0.23"/><circle cx="27" cy="546" r="0.55" fill-opacity="0.26"/><circle cx="551" cy="479" r="0.6" fill-opacity="0.30"/><circle cx="154" cy="521" r="0.5" fill-opacity="0.22"/><circle cx="239" cy="422" r="0.6" fill-opacity="0.30"/><circle cx="244" cy="418" r="0.5" fill-opacity="0.46"/><circle cx="149" cy="102" r="0.7" fill-opacity="0.28"/><circle cx="5" cy="518" r="0.8" fill-opacity="0.36"/><circle cx="70" cy="313" r="0.8" fill-opacity="0.26"/><circle cx="399" cy="564" r="0.8" fill-opacity="0.48"/><circle cx="215" cy="144" r="0.6" fill-opacity="0.32"/><circle cx="211" cy="256" r="0.6" fill-opacity="0.41"/><circle cx="209" cy="92" r="0.55" fill-opacity="0.16"/><circle cx="165" cy="490" r="0.55" fill-opacity="0.36"/><circle cx="286" cy="467" r="0.6" fill-opacity="0.19"/><circle cx="216" cy="424" r="0.8" fill-opacity="0.39"/><circle cx="356" cy="174" r="0.9" fill-opacity="0.34"/><circle cx="139" cy="266" r="0.55" fill-opacity="0.53"/><circle cx="612" cy="350" r="0.9" fill-opacity="0.37"/><circle cx="226" cy="145" r="1.1" fill-opacity="0.21"/><circle cx="535" cy="72" r="1.1" fill-opacity="0.16"/><circle cx="522" cy="432" r="0.8" fill-opacity="0.13"/><circle cx="440" cy="85" r="0.5" fill-opacity="0.29"/><circle cx="53" cy="104" r="0.6" fill-opacity="0.26"/><circle cx="406" cy="64" r="1.1" fill-opacity="0.51"/><circle cx="494" cy="445" r="0.6" fill-opacity="0.15"/><circle cx="191" cy="133" r="0.55" fill-opacity="0.47"/><circle cx="245" cy="209" r="0.9" fill-opacity="0.45"/><circle cx="541" cy="506" r="0.55" fill-opacity="0.52"/><circle cx="108" cy="215" r="0.7" fill-opacity="0.51"/><circle cx="15" cy="413" r="0.9" fill-opacity="0.23"/><circle cx="519" cy="207" r="0.5" fill-opacity="0.20"/><circle cx="71" cy="536" r="0.6" fill-opacity="0.43"/><circle cx="25" cy="23" r="0.55" fill-opacity="0.31"/><circle cx="464" cy="92" r="0.5" fill-opacity="0.36"/><circle cx="386" cy="553" r="0.6" fill-opacity="0.37"/><circle cx="439" cy="150" r="0.8" fill-opacity="0.41"/><circle cx="353" cy="549" r="0.5" fill-opacity="0.48"/><circle cx="476" cy="168" r="0.5" fill-opacity="0.50"/><circle cx="359" cy="409" r="0.6" fill-opacity="0.41"/><circle cx="23" cy="187" r="0.7" fill-opacity="0.44"/><circle cx="53" cy="408" r="0.8" fill-opacity="0.55"/><circle cx="377" cy="130" r="1.1" fill-opacity="0.16"/><circle cx="580" cy="249" r="0.7" fill-opacity="0.42"/><circle cx="453" cy="487" r="0.9" fill-opacity="0.34"/><circle cx="415" cy="121" r="1.1" fill-opacity="0.48"/><circle cx="477" cy="287" r="0.6" fill-opacity="0.14"/><circle cx="431" cy="473" r="0.6" fill-opacity="0.20"/><circle cx="100" cy="458" r="0.6" fill-opacity="0.35"/><circle cx="153" cy="35" r="0.7" fill-opacity="0.27"/><circle cx="57" cy="374" r="0.55" fill-opacity="0.18"/><circle cx="433" cy="393" r="0.6" fill-opacity="0.42"/><circle cx="4" cy="406" r="0.55" fill-opacity="0.52"/><circle cx="215" cy="176" r="0.55" fill-opacity="0.37"/><circle cx="148" cy="369" r="0.5" fill-opacity="0.36"/><circle cx="466" cy="99" r="0.55" fill-opacity="0.38"/><circle cx="283" cy="450" r="0.6" fill-opacity="0.17"/><circle cx="177" cy="212" r="0.6" fill-opacity="0.14"/><circle cx="549" cy="178" r="0.5" fill-opacity="0.42"/><circle cx="275" cy="66" r="0.7" fill-opacity="0.31"/><circle cx="349" cy="170" r="1.1" fill-opacity="0.15"/><circle cx="7" cy="582" r="0.9" fill-opacity="0.16"/><circle cx="440" cy="575" r="0.6" fill-opacity="0.17"/><circle cx="300" cy="255" r="0.6" fill-opacity="0.46"/><circle cx="197" cy="211" r="0.5" fill-opacity="0.40"/><circle cx="385" cy="549" r="0.6" fill-opacity="0.40"/><circle cx="48" cy="439" r="0.5" fill-opacity="0.45"/><circle cx="515" cy="174" r="0.55" fill-opacity="0.53"/><circle cx="322" cy="526" r="0.55" fill-opacity="0.16"/><circle cx="441" cy="182" r="0.7" fill-opacity="0.28"/><circle cx="397" cy="209" r="0.6" fill-opacity="0.28"/><circle cx="338" cy="217" r="0.6" fill-opacity="0.22"/><circle cx="25" cy="333" r="0.8" fill-opacity="0.51"/><circle cx="579" cy="290" r="0.9" fill-opacity="0.43"/><circle cx="610" cy="354" r="0.5" fill-opacity="0.18"/><circle cx="139" cy="81" r="0.8" fill-opacity="0.16"/><circle cx="24" cy="258" r="0.6" fill-opacity="0.21"/><circle cx="228" cy="19" r="1.1" fill-opacity="0.30"/><circle cx="174" cy="388" r="1.1" fill-opacity="0.43"/><circle cx="546" cy="37" r="0.5" fill-opacity="0.41"/><circle cx="506" cy="531" r="0.55" fill-opacity="0.28"/><circle cx="3" cy="472" r="0.7" fill-opacity="0.36"/><circle cx="287" cy="319" r="1.1" fill-opacity="0.32"/><circle cx="595" cy="533" r="0.55" fill-opacity="0.54"/><circle cx="590" cy="364" r="0.5" fill-opacity="0.43"/><circle cx="203" cy="387" r="0.8" fill-opacity="0.53"/><circle cx="295" cy="380" r="0.6" fill-opacity="0.49"/><circle cx="325" cy="372" r="0.6" fill-opacity="0.22"/><circle cx="453" cy="406" r="0.55" fill-opacity="0.40"/><circle cx="228" cy="341" r="0.8" fill-opacity="0.27"/><circle cx="147" cy="259" r="0.6" fill-opacity="0.17"/><circle cx="111" cy="522" r="1.1" fill-opacity="0.44"/><circle cx="136" cy="492" r="0.5" fill-opacity="0.20"/><circle cx="411" cy="416" r="0.6" fill-opacity="0.36"/><circle cx="139" cy="336" r="0.5" fill-opacity="0.44"/><circle cx="557" cy="333" r="0.8" fill-opacity="0.41"/><circle cx="491" cy="79" r="1.1" fill-opacity="0.36"/><circle cx="438" cy="444" r="0.5" fill-opacity="0.39"/><circle cx="589" cy="302" r="0.9" fill-opacity="0.48"/><circle cx="240" cy="101" r="0.6" fill-opacity="0.36"/><circle cx="475" cy="80" r="0.5" fill-opacity="0.29"/><circle cx="29" cy="25" r="0.6" fill-opacity="0.32"/><circle cx="74" cy="80" r="0.5" fill-opacity="0.39"/><circle cx="535" cy="330" r="0.7" fill-opacity="0.19"/><circle cx="457" cy="200" r="0.5" fill-opacity="0.48"/><circle cx="75" cy="219" r="1.1" fill-opacity="0.53"/><circle cx="442" cy="26" r="0.7" fill-opacity="0.16"/><circle cx="336" cy="471" r="0.5" fill-opacity="0.13"/><circle cx="558" cy="142" r="0.7" fill-opacity="0.20"/><circle cx="274" cy="492" r="0.9" fill-opacity="0.17"/><circle cx="13" cy="65" r="0.6" fill-opacity="0.20"/><circle cx="340" cy="170" r="0.8" fill-opacity="0.48"/><circle cx="361" cy="147" r="0.6" fill-opacity="0.53"/><circle cx="8" cy="201" r="0.55" fill-opacity="0.33"/><circle cx="297" cy="19" r="0.5" fill-opacity="0.15"/><circle cx="380" cy="378" r="0.8" fill-opacity="0.48"/><circle cx="593" cy="407" r="0.9" fill-opacity="0.29"/><circle cx="535" cy="359" r="0.5" fill-opacity="0.28"/><circle cx="324" cy="183" r="0.55" fill-opacity="0.37"/><circle cx="27" cy="100" r="0.7" fill-opacity="0.43"/><circle cx="203" cy="275" r="0.7" fill-opacity="0.26"/><circle cx="206" cy="284" r="0.6" fill-opacity="0.13"/><circle cx="282" cy="579" r="0.5" fill-opacity="0.39"/><circle cx="446" cy="84" r="0.8" fill-opacity="0.24"/><circle cx="307" cy="154" r="1.1" fill-opacity="0.37"/><circle cx="85" cy="410" r="1.1" fill-opacity="0.51"/><circle cx="58" cy="117" r="0.8" fill-opacity="0.39"/><circle cx="389" cy="213" r="0.6" fill-opacity="0.46"/><circle cx="146" cy="468" r="0.55" fill-opacity="0.41"/><circle cx="186" cy="448" r="0.7" fill-opacity="0.34"/><circle cx="389" cy="206" r="1.1" fill-opacity="0.43"/><circle cx="205" cy="413" r="0.7" fill-opacity="0.50"/><circle cx="480" cy="296" r="0.6" fill-opacity="0.47"/><circle cx="611" cy="89" r="0.6" fill-opacity="0.12"/><circle cx="534" cy="266" r="0.9" fill-opacity="0.29"/><circle cx="473" cy="546" r="0.5" fill-opacity="0.18"/><circle cx="441" cy="148" r="1.1" fill-opacity="0.40"/><circle cx="592" cy="43" r="0.6" fill-opacity="0.37"/><circle cx="49" cy="105" r="0.7" fill-opacity="0.54"/><circle cx="219" cy="455" r="0.8" fill-opacity="0.43"/><circle cx="565" cy="492" r="0.7" fill-opacity="0.51"/><circle cx="169" cy="151" r="0.5" fill-opacity="0.45"/><circle cx="384" cy="139" r="0.5" fill-opacity="0.21"/><circle cx="245" cy="118" r="0.6" fill-opacity="0.49"/></g></pattern></defs><rect width="2560" height="1440" fill="url(#sp0)"/><rect width="2560" height="1440" fill="url(#sp1)"/><rect width="2560" height="1440" fill="url(#sp2)"/><defs><radialGradient id="gstar"><stop offset="0" stop-color="#ffffff"/><stop offset="0.3" stop-color="#d8d8ff" stop-opacity="0.8"/><stop offset="1" stop-color="#8060ff" stop-opacity="0"/></radialGradient></defs><circle cx="332" cy="1102" r="16" fill="url(#gstar)" opacity="0.7"/><circle cx="332" cy="1102" r="5" fill="#ffffff"/><circle cx="1467" cy="1386" r="5" fill="url(#gstar)"/><circle cx="1467" cy="1386" r="1.5" fill="#fff"/></svg><div class="a" style="left:0;top:1438px;width:2560px;height:2px;background:#1c1c20"></div><div class="a" style="left:443px;top:1438px;width:44px;height:2px;background:#4a4a4e"></div><div class="a dk" style="left:236px;top:51px;width:942px;height:998px;border-radius:7px;overflow:hidden;background:#434a5b"><div class="a" style="left:0px;top:0px;width:942px;height:30px;background:#434a5b;"></div><div class="a" style="left:5px;top:-2px;width:146px;height:30px;background:#525c70;border:1px solid #d6def0;border-radius:0 0 8px 8px"></div><svg style="position:absolute;left:9px;top:4px;" width="16" height="16" viewBox="0 0 16 16"><path d="M1.5,16 C1,12.5 2,10 5,9.2 L9.5,9.4 C12.5,10.2 14,12.5 13.5,16.5 Z" fill="#3d9266"/><path d="M9.5,9.4 C12.5,10.2 14,12.5 13.5,16.5 L10,16 C11,13 10.5,11 9.5,9.4 Z" fill="#2f7a52"/><path d="M5.2,9.3 L6.5,13.5 L8.5,9.4 Z" fill="#e6f4ea"/><ellipse cx="7" cy="5.2" rx="3.4" ry="3.9" fill="#c8916c"/><path d="M9.5,3 C10.5,4.5 10.3,7 9.2,8.5 C10.8,7.5 11.2,4 10,2.2 Z" fill="#8a5a40"/><path d="M3.6,5 C3.2,1.8 5,0.3 7.2,0.3 C9.8,0.3 11,2.2 10.6,5.2 C10,3.2 8.8,2.6 7.2,2.6 C5.6,2.6 4.4,3.3 3.6,5 Z" fill="#2e2826"/></svg><div class="t" style="left:30px;top:-1px;height:28px;line-height:28px;color:#ffffff;">Vjekoslav</div><svg style="position:absolute;left:124px;top:8px;" width="10" height="10" viewBox="0 0 10 10"><path d="M0.5,0.5 L9.5,9.5 M9.5,0.5 L0.5,9.5" stroke="#ffffff" stroke-width="0.9"/></svg><div class="a" style="left:155px;top:-2px;width:146px;height:30px;background:#525c70;border:1px solid #d6def0;border-radius:0 0 8px 8px"></div><svg style="position:absolute;left:159px;top:5px;" width="15" height="16" viewBox="0 0 15 16"><path d="M4.5,0 H10.5 V7 H15 L7.5,16 L0,7 H4.5 Z" fill="url(#gblue)"/></svg><div class="t" style="left:180px;top:-1px;height:28px;line-height:28px;color:#ffffff;">Downloads</div><svg style="position:absolute;left:274px;top:8px;" width="10" height="10" viewBox="0 0 10 10"><path d="M0.5,0.5 L9.5,9.5 M9.5,0.5 L0.5,9.5" stroke="#ffffff" stroke-width="0.9"/></svg><div class="a" style="left:305px;top:-2px;width:146px;height:30px;background:#93c6d6;border-radius:0 0 8px 8px"></div><svg style="position:absolute;left:310px;top:4px;" width="14" height="17" viewBox="0 0 14 17"><path d="M0.5,0.5 H11.5 V9.5 H13.5 V16.5 H0.5 Z" fill="#fbe38e" stroke="#e3b94a" stroke-width="1"/><path d="M1,1 H11 V10 H13 V16 H1 Z" fill="url(#gfold)"/><path d="M10.5,10 V16" stroke="#e3b94a" stroke-width="1"/></svg><div class="t" style="left:330px;top:-1px;height:28px;line-height:28px;color:#f4fbff;">Windows</div><svg style="position:absolute;left:424px;top:8px;" width="10" height="10" viewBox="0 0 10 10"><path d="M0.5,0.5 L9.5,9.5 M9.5,0.5 L0.5,9.5" stroke="#f4fbff" stroke-width="0.9"/></svg><svg class="a" style="left:464px;top:9px" width="10" height="10"><path d="M5,1 V9 M1,5 H9" stroke="#ffffff" stroke-width="1.1"/></svg><div class="a" style="left:823px;top:19px;width:11px;height:1.2px;background:#ffffff;"></div><svg class="a" style="left:868px;top:9px" width="12" height="12"><rect x="1" y="1" width="10" height="10" fill="none" stroke="#ffffff" stroke-width="1.3"/></svg><svg style="position:absolute;left:912px;top:9px;" width="13" height="13" viewBox="0 0 13 13"><path d="M0.5,0.5 L12.5,12.5 M12.5,0.5 L0.5,12.5" stroke="#ffffff" stroke-width="1.0"/></svg><div class="a" style="left:0px;top:30px;width:942px;height:1px;background:#d6def0;"></div><div class="a" style="left:0px;top:31px;width:942px;height:28px;background:#525c70;"></div><svg style="position:absolute;left:10px;top:39px;" width="12" height="12" viewBox="0 0 12 12"><path d="M0.5,3.5 L4.5,0.5 V6.5 Z" fill="#ffffff"/><path d="M4,3.5 H10.5 V10.5 H4" fill="none" stroke="#ffffff" stroke-width="1.3"/></svg><svg style="position:absolute;left:45px;top:39px;" width="12" height="12" viewBox="0 0 12 12"><path d="M11.5,3.5 L7.5,0.5 V6.5 Z" fill="#ffffff"/><path d="M8,3.5 H1.5 V10.5 H8" fill="none" stroke="#ffffff" stroke-width="1.3"/></svg><svg style="position:absolute;left:80px;top:43px;" width="12" height="6" viewBox="0 0 12 6"><path d="M0,0 H12 L6.0,6 Z" fill="#ffffff"/></svg><svg style="position:absolute;left:118px;top:39px;" width="8" height="12" viewBox="0 0 8 12"><path d="M4,0 L8,5 H5.5 V12 H2.5 V5 H0 Z" fill="#ffffff"/></svg><div class="a" style="left:141px;top:32px;width:1px;height:27px;background:#d6def0;"></div><div class="t" style="left:155px;top:31px;height:28px;line-height:28px;color:#ffffff;">This PC</div><svg style="position:absolute;left:229px;top:40px;" width="5" height="10" viewBox="0 0 5 10"><path d="M0,0 L5,5 L0,10 Z" fill="#ffffff"/></svg><div class="t" style="left:251px;top:31px;height:28px;line-height:28px;color:#ffffff;">Windows <span style="letter-spacing:0">10</span> (C:)</div><svg style="position:absolute;left:383px;top:40px;" width="5" height="10" viewBox="0 0 5 10"><path d="M0,0 L5,5 L0,10 Z" fill="#ffffff"/></svg><div class="t" style="left:405px;top:31px;height:28px;line-height:28px;color:#ffffff;">Windows</div><div class="a" style="left:0px;top:59px;width:942px;height:1px;background:#d6def0;"></div><div class="a" style="left:1px;top:62px;width:130px;height:130px;background:#93c6d6;border-radius:6px"></div><div class="a" style="left:5px;top:189px;width:122px;height:1.5px;background:#e6f2f8;"></div><svg style="position:absolute;left:33px;top:75px;" width="57" height="86" viewBox="0 0 57 86"><path d="M0,0 H51.5 C52.5,0 53,0.5 53,1.5 V44.5 H55.5 C56.5,44.5 57,45 57,46 V71.5 C57,72.5 56.5,73 55.5,73 H20 Z" fill="url(#gbigback)"/><path d="M0,0 L20,16 V87 L0,73 Z" fill="url(#gbigflap)"/><path d="M19.3,16 V86.5" stroke="#e8c060" stroke-width="1" opacity="0.6"/></svg><svg style="position:absolute;left:164px;top:75px;" width="57" height="86" viewBox="0 0 57 86"><path d="M0,0 H51.5 C52.5,0 53,0.5 53,1.5 V44.5 H55.5 C56.5,44.5 57,45 57,46 V71.5 C57,72.5 56.5,73 55.5,73 H20 Z" fill="url(#gbigback)"/><path d="M0,0 L20,16 V87 L0,73 Z" fill="url(#gbigflap)"/><path d="M19.3,16 V86.5" stroke="#e8c060" stroke-width="1" opacity="0.6"/></svg><svg style="position:absolute;left:296px;top:75px;" width="57" height="86" viewBox="0 0 57 86"><path d="M0,0 H51.5 C52.5,0 53,0.5 53,1.5 V44.5 H55.5 C56.5,44.5 57,45 57,46 V71.5 C57,72.5 56.5,73 55.5,73 H20 Z" fill="url(#gbigback)"/><path d="M0,0 L20,16 V87 L0,73 Z" fill="url(#gbigflap)"/><path d="M19.3,16 V86.5" stroke="#e8c060" stroke-width="1" opacity="0.6"/></svg><svg style="position:absolute;left:427px;top:75px;" width="57" height="86" viewBox="0 0 57 86"><path d="M0,0 H51.5 C52.5,0 53,0.5 53,1.5 V44.5 H55.5 C56.5,44.5 57,45 57,46 V71.5 C57,72.5 56.5,73 55.5,73 H20 Z" fill="url(#gbigback)"/><path d="M0,0 L20,16 V87 L0,73 Z" fill="url(#gbigflap)"/><path d="M19.3,16 V86.5" stroke="#e8c060" stroke-width="1" opacity="0.6"/></svg><svg style="position:absolute;left:559px;top:75px;" width="57" height="86" viewBox="0 0 57 86"><path d="M0,0 H51.5 C52.5,0 53,0.5 53,1.5 V44.5 H55.5 C56.5,44.5 57,45 57,46 V71.5 C57,72.5 56.5,73 55.5,73 H20 Z" fill="url(#gbigback)"/><path d="M0,0 L20,16 V87 L0,73 Z" fill="url(#gbigflap)"/><path d="M19.3,16 V86.5" stroke="#e8c060" stroke-width="1" opacity="0.6"/></svg><svg style="position:absolute;left:690px;top:75px;" width="57" height="86" viewBox="0 0 57 86"><path d="M0,0 H51.5 C52.5,0 53,0.5 53,1.5 V44.5 H55.5 C56.5,44.5 57,45 57,46 V71.5 C57,72.5 56.5,73 55.5,73 H20 Z" fill="url(#gbigback)"/><path d="M0,0 L20,16 V87 L0,73 Z" fill="url(#gbigflap)"/><path d="M19.3,16 V86.5" stroke="#e8c060" stroke-width="1" opacity="0.6"/></svg><svg style="position:absolute;left:822px;top:75px;" width="57" height="86" viewBox="0 0 57 86"><path d="M0,0 H51.5 C52.5,0 53,0.5 53,1.5 V44.5 H55.5 C56.5,44.5 57,45 57,46 V71.5 C57,72.5 56.5,73 55.5,73 H20 Z" fill="url(#gbigback)"/><path d="M0,0 L20,16 V87 L0,73 Z" fill="url(#gbigflap)"/><path d="M19.3,16 V86.5" stroke="#e8c060" stroke-width="1" opacity="0.6"/></svg><svg style="position:absolute;left:33px;top:206px;" width="57" height="86" viewBox="0 0 57 86"><path d="M0,0 H51.5 C52.5,0 53,0.5 53,1.5 V44.5 H55.5 C56.5,44.5 57,45 57,46 V71.5 C57,72.5 56.5,73 55.5,73 H20 Z" fill="url(#gbigback)"/><path d="M0,0 L20,16 V87 L0,73 Z" fill="url(#gbigflap)"/><path d="M19.3,16 V86.5" stroke="#e8c060" stroke-width="1" opacity="0.6"/></svg><svg style="position:absolute;left:164px;top:206px;" width="57" height="86" viewBox="0 0 57 86"><path d="M0,0 H51.5 C52.5,0 53,0.5 53,1.5 V44.5 H55.5 C56.5,44.5 57,45 57,46 V71.5 C57,72.5 56.5,73 55.5,73 H20 Z" fill="url(#gbigback)"/><path d="M0,0 L20,16 V87 L0,73 Z" fill="url(#gbigflap)"/><path d="M19.3,16 V86.5" stroke="#e8c060" stroke-width="1" opacity="0.6"/></svg><svg style="position:absolute;left:296px;top:206px;" width="57" height="86" viewBox="0 0 57 86"><path d="M0,0 H51.5 C52.5,0 53,0.5 53,1.5 V44.5 H55.5 C56.5,44.5 57,45 57,46 V71.5 C57,72.5 56.5,73 55.5,73 H20 Z" fill="url(#gbigback)"/><path d="M0,0 L20,16 V87 L0,73 Z" fill="url(#gbigflap)"/><path d="M19.3,16 V86.5" stroke="#e8c060" stroke-width="1" opacity="0.6"/></svg><svg style="position:absolute;left:33px;top:337px;" width="57" height="86" viewBox="0 0 57 86"><path d="M0,0 H51.5 C52.5,0 53,0.5 53,1.5 V44.5 H55.5 C56.5,44.5 57,45 57,46 V71.5 C57,72.5 56.5,73 55.5,73 H20 Z" fill="url(#gbigback)"/><path d="M0,0 L20,16 V87 L0,73 Z" fill="url(#gbigflap)"/><path d="M19.3,16 V86.5" stroke="#e8c060" stroke-width="1" opacity="0.6"/></svg><svg style="position:absolute;left:164px;top:337px;" width="57" height="86" viewBox="0 0 57 86"><path d="M0,0 H51.5 C52.5,0 53,0.5 53,1.5 V44.5 H55.5 C56.5,44.5 57,45 57,46 V71.5 C57,72.5 56.5,73 55.5,73 H20 Z" fill="url(#gbigback)"/><path d="M0,0 L20,16 V87 L0,73 Z" fill="url(#gbigflap)"/><path d="M19.3,16 V86.5" stroke="#e8c060" stroke-width="1" opacity="0.6"/></svg><svg style="position:absolute;left:296px;top:337px;" width="57" height="86" viewBox="0 0 57 86"><path d="M0,0 H51.5 C52.5,0 53,0.5 53,1.5 V44.5 H55.5 C56.5,44.5 57,45 57,46 V71.5 C57,72.5 56.5,73 55.5,73 H20 Z" fill="url(#gbigback)"/><path d="M0,0 L20,16 V87 L0,73 Z" fill="url(#gbigflap)"/><path d="M19.3,16 V86.5" stroke="#e8c060" stroke-width="1" opacity="0.6"/></svg><svg style="position:absolute;left:33px;top:468px;" width="57" height="86" viewBox="0 0 57 86"><path d="M0,0 H51.5 C52.5,0 53,0.5 53,1.5 V44.5 H55.5 C56.5,44.5 57,45 57,46 V71.5 C57,72.5 56.5,73 55.5,73 H20 Z" fill="url(#gbigback)"/><path d="M0,0 L20,16 V87 L0,73 Z" fill="url(#gbigflap)"/><path d="M19.3,16 V86.5" stroke="#e8c060" stroke-width="1" opacity="0.6"/></svg><svg style="position:absolute;left:164px;top:468px;" width="57" height="86" viewBox="0 0 57 86"><path d="M0,0 H51.5 C52.5,0 53,0.5 53,1.5 V44.5 H55.5 C56.5,44.5 57,45 57,46 V71.5 C57,72.5 56.5,73 55.5,73 H20 Z" fill="url(#gbigback)"/><path d="M0,0 L20,16 V87 L0,73 Z" fill="url(#gbigflap)"/><path d="M19.3,16 V86.5" stroke="#e8c060" stroke-width="1" opacity="0.6"/></svg><svg style="position:absolute;left:296px;top:468px;" width="57" height="86" viewBox="0 0 57 86"><path d="M0,0 H51.5 C52.5,0 53,0.5 53,1.5 V44.5 H55.5 C56.5,44.5 57,45 57,46 V71.5 C57,72.5 56.5,73 55.5,73 H20 Z" fill="url(#gbigback)"/><path d="M0,0 L20,16 V87 L0,73 Z" fill="url(#gbigflap)"/><path d="M19.3,16 V86.5" stroke="#e8c060" stroke-width="1" opacity="0.6"/></svg><svg style="position:absolute;left:33px;top:599px;" width="57" height="86" viewBox="0 0 57 86"><path d="M0,0 H51.5 C52.5,0 53,0.5 53,1.5 V44.5 H55.5 C56.5,44.5 57,45 57,46 V71.5 C57,72.5 56.5,73 55.5,73 H20 Z" fill="url(#gbigback)"/><path d="M0,0 L20,16 V87 L0,73 Z" fill="url(#gbigflap)"/><path d="M19.3,16 V86.5" stroke="#e8c060" stroke-width="1" opacity="0.6"/></svg><svg style="position:absolute;left:164px;top:599px;" width="57" height="86" viewBox="0 0 57 86"><path d="M0,0 H51.5 C52.5,0 53,0.5 53,1.5 V44.5 H55.5 C56.5,44.5 57,45 57,46 V71.5 C57,72.5 56.5,73 55.5,73 H20 Z" fill="url(#gbigback)"/><path d="M0,0 L20,16 V87 L0,73 Z" fill="url(#gbigflap)"/><path d="M19.3,16 V86.5" stroke="#e8c060" stroke-width="1" opacity="0.6"/></svg><svg style="position:absolute;left:296px;top:599px;" width="57" height="86" viewBox="0 0 57 86"><path d="M0,0 H51.5 C52.5,0 53,0.5 53,1.5 V44.5 H55.5 C56.5,44.5 57,45 57,46 V71.5 C57,72.5 56.5,73 55.5,73 H20 Z" fill="url(#gbigback)"/><path d="M0,0 L20,16 V87 L0,73 Z" fill="url(#gbigflap)"/><path d="M19.3,16 V86.5" stroke="#e8c060" stroke-width="1" opacity="0.6"/></svg><svg style="position:absolute;left:33px;top:730px;" width="57" height="86" viewBox="0 0 57 86"><path d="M0,0 H51.5 C52.5,0 53,0.5 53,1.5 V44.5 H55.5 C56.5,44.5 57,45 57,46 V71.5 C57,72.5 56.5,73 55.5,73 H20 Z" fill="url(#gbigback)"/><path d="M0,0 L20,16 V87 L0,73 Z" fill="url(#gbigflap)"/><path d="M19.3,16 V86.5" stroke="#e8c060" stroke-width="1" opacity="0.6"/></svg><svg style="position:absolute;left:164px;top:730px;" width="57" height="86" viewBox="0 0 57 86"><path d="M0,0 H51.5 C52.5,0 53,0.5 53,1.5 V44.5 H55.5 C56.5,44.5 57,45 57,46 V71.5 C57,72.5 56.5,73 55.5,73 H20 Z" fill="url(#gbigback)"/><path d="M0,0 L20,16 V87 L0,73 Z" fill="url(#gbigflap)"/><path d="M19.3,16 V86.5" stroke="#e8c060" stroke-width="1" opacity="0.6"/></svg><svg style="position:absolute;left:302px;top:731px;" width="58" height="83" viewBox="0 0 58 83"><path d="M0,0 H44 L58,14 V83 H0 Z" fill="#f0f0f0"/><path d="M44,0 V14 H58 Z" fill="#d8d8d8"/><rect x="8" y="20" width="44" height="2" fill="#9a9a9a"/><rect x="8" y="27" width="40" height="2" fill="#9a9a9a"/><rect x="8" y="34" width="40" height="2" fill="#9a9a9a"/><rect x="8" y="41" width="44" height="2" fill="#9a9a9a"/><rect x="8" y="48" width="40" height="2" fill="#9a9a9a"/><rect x="8" y="55" width="40" height="2" fill="#9a9a9a"/><rect x="8" y="62" width="44" height="2" fill="#9a9a9a"/><rect x="8" y="69" width="40" height="2" fill="#9a9a9a"/></svg><svg style="position:absolute;left:33px;top:861px;" width="57" height="86" viewBox="0 0 57 86"><path d="M0,0 H51.5 C52.5,0 53,0.5 53,1.5 V44.5 H55.5 C56.5,44.5 57,45 57,46 V71.5 C57,72.5 56.5,73 55.5,73 H20 Z" fill="url(#gbigback)"/><path d="M0,0 L20,16 V87 L0,73 Z" fill="url(#gbigflap)"/><path d="M19.3,16 V86.5" stroke="#e8c060" stroke-width="1" opacity="0.6"/></svg><svg style="position:absolute;left:164px;top:861px;" width="57" height="86" viewBox="0 0 57 86"><path d="M0,0 H51.5 C52.5,0 53,0.5 53,1.5 V44.5 H55.5 C56.5,44.5 57,45 57,46 V71.5 C57,72.5 56.5,73 55.5,73 H20 Z" fill="url(#gbigback)"/><path d="M0,0 L20,16 V87 L0,73 Z" fill="url(#gbigflap)"/><path d="M19.3,16 V86.5" stroke="#e8c060" stroke-width="1" opacity="0.6"/></svg><svg style="position:absolute;left:296px;top:861px;" width="57" height="86" viewBox="0 0 57 86"><path d="M0,0 H51.5 C52.5,0 53,0.5 53,1.5 V44.5 H55.5 C56.5,44.5 57,45 57,46 V71.5 C57,72.5 56.5,73 55.5,73 H20 Z" fill="url(#gbigback)"/><path d="M0,0 L20,16 V87 L0,73 Z" fill="url(#gbigflap)"/><path d="M19.3,16 V86.5" stroke="#e8c060" stroke-width="1" opacity="0.6"/></svg><div class="t" style="left:-34px;width:200px;text-align:center;top:167px;color:#eef8fc">Cursors</div><div class="t" style="left:-34px;width:200px;text-align:center;top:298px;color:#8ca6c6">CbsTemp</div><div class="t" style="left:-34px;width:200px;text-align:center;top:429px;color:#8ca6c6">Firmware</div><div class="t" style="left:54px;top:560px;color:#8ca6c6">I</div><div class="t" style="left:5px;top:691px;color:#8ca6c6">LiveKernelReports</div><div class="t" style="left:-34px;width:200px;text-align:center;top:822px;color:#8ca6c6">OCR</div><div class="t" style="left:98px;width:200px;text-align:center;top:822px;color:#8ca6c6">Offline Web Page</div><div class="t" style="left:229px;width:200px;text-align:center;top:822px;color:#ffffff">PFRO.log</div><div class="t" style="left:-34px;width:200px;text-align:center;top:953px;color:#8ca6c6">PolicyDefinitions</div><div class="t" style="left:98px;width:200px;text-align:center;top:953px;color:#8ca6c6">Prefetch</div><div class="t" style="left:229px;width:200px;text-align:center;top:953px;color:#8ca6c6">PrintDialog</div><div class="t" style="left:346px;top:167px;color:#8ca6c6">iences</div><div class="t" style="left:345px;top:298px;color:#8ca6c6">ick</div><div class="t" style="left:346px;top:429px;color:#8ca6c6">eser</div><div class="t" style="left:335px;top:560px;color:#8ca6c6">Contr</div><div class="t" style="left:341px;top:691px;color:#f06060">a</div><div class="a" style="left:920px;top:62px;width:20px;height:24px;border:1px solid #d6def0;border-radius:8px;background:#525c70"></div><svg class="a" style="left:925px;top:71px" width="10" height="6"><path d="M0,5.5 H10 L5,0.5 Z" fill="#ffffff"/></svg><div class="a" style="left:920px;top:87px;width:20px;height:913px;border:1px solid #d6def0;border-radius:8px;background:#525c70"></div><div class="a" style="left:0px;top:968px;width:942px;height:1px;background:#d6def0;"></div><div class="a" style="left:0px;top:969px;width:942px;height:29px;background:#525c70;"></div><svg style="position:absolute;left:12px;top:976px;" width="23" height="18" viewBox="0 0 23 18"><path d="M1,2 C1,1.3 1.3,1 2,1 H8 L10,3.5 H21 C21.7,3.5 22,3.8 22,4.5 V16 C22,16.7 21.7,17 21,17 H2 C1.3,17 1,16.7 1,16 Z" fill="none" stroke="#8ca6c6" stroke-width="1.5"/></svg><div class="t" style="left:40px;top:969px;height:28px;line-height:28px;color:#8ca6c6;letter-spacing:0.3px"><span style="letter-spacing:0">81</span>/<span style="letter-spacing:0">81</span></div><svg style="position:absolute;left:87px;top:974px;" width="15" height="20" viewBox="0 0 15 20"><path d="M1,1 H10 L14,5 V19 H1 Z M10,1 V5 H14" fill="none" stroke="#ffffff" stroke-width="1.5"/></svg><div class="t" style="left:109px;top:969px;height:28px;line-height:28px;color:#ffffff;letter-spacing:0.3px"><span style="letter-spacing:0">39</span>/<span style="letter-spacing:0">39</span></div><svg style="position:absolute;left:158px;top:975px;" width="17" height="17" viewBox="0 0 17 17"><circle cx="8.5" cy="8.5" r="7.5" fill="none" stroke="#ffffff" stroke-width="1.5"/><path d="M8.5,3.5 V8.5 L11.5,12" fill="none" stroke="#ffffff" stroke-width="1.5"/></svg><div class="t" style="left:180px;top:969px;height:28px;line-height:28px;color:#ffffff;letter-spacing:0.3px"><span style="letter-spacing:0">0</span>.<span style="letter-spacing:0">02</span> sec</div><div class="a" style="left:371px;top:971px;width:199px;height:25px;border:1px solid #d6def0;border-radius:7px;background:#4a5264"></div></div><div class="a" style="left:236px;top:51px;width:942px;height:998px;border-radius:7px;border:1px solid #d6def0"></div><div class="a" style="left:300px;top:190px;width:277px;height:677px;border-radius:6px;box-shadow:0 6px 14px rgba(0,0,0,0.5)"></div><div class="a dk" style="left:296px;top:170px;width:285px;height:697px;background:#434a5b;border:1px solid #d6def0;border-radius:5px;overflow:hidden"><div class="a" style="left:0px;top:0px;width:285px;height:31px;background:#4d5669;"></div><div class="a" style="left:6px;top:6px;width:1px;height:20px;background:#ffffff;"></div><div class="a" style="left:0px;top:31px;width:285px;height:1px;background:#d6def0;"></div><div class="t" style="left:28px;top:34px;height:30px;line-height:30px;color:#ffffff;">Open</div><div class="a" style="left:1px;top:63px;width:283px;height:30px;background:#93c6d6;"></div><div class="t" style="left:28px;top:64px;height:30px;line-height:30px;color:#f4fbff;">Pin to Quick access</div><svg style="position:absolute;left:269px;top:73px;" width="8" height="12" viewBox="0 0 8 12"><rect x="1.5" y="0.75" width="4.5" height="6" fill="none" stroke="#ffffff" stroke-width="1.5"/><path d="M0,7 H7.5 M3.75,7 V11.5" stroke="#ffffff" stroke-width="1.5"/></svg><div class="t" style="left:28px;top:94px;height:30px;line-height:30px;color:#ffffff;">Send with NordVPN Meshnet</div><svg style="position:absolute;left:6px;top:99px;" width="17" height="13" viewBox="0 0 17 13"><path d="M1,12 C1.5,5 4,1 8.5,1 C13,1 15.5,5 16,12 L13,9.5 L8.5,4.5 L4,9.5 Z" fill="#4a80f0"/></svg><div class="t" style="left:28px;top:124px;height:30px;line-height:30px;color:#ffffff;">Add to VLC media player's Playlist</div><svg style="position:absolute;left:7px;top:129px;" width="14" height="16" viewBox="0 0 14 16"><path d="M5.5,0 H8.5 L12,11 H2 Z" fill="#f58a12"/><path d="M4.6,3.5 H9.4 L10.3,6.5 H3.7 Z" fill="#e8e8e8"/><path d="M3.2,8 H10.8 L11.4,10 H2.6 Z" fill="#f0f0f0"/><rect x="0" y="11" width="14" height="4" rx="1.5" fill="#f07c00"/><rect x="1" y="11.5" width="12" height="1.5" fill="#ffb040"/></svg><div class="t" style="left:28px;top:154px;height:30px;line-height:30px;color:#ffffff;">Git Bash Here</div><svg style="position:absolute;left:6px;top:159px;" width="17" height="17" viewBox="0 0 17 17"><path d="M8.5,0.5 L16.5,8.5 L8.5,16.5 L0.5,8.5 Z" fill="#f0d860"/><path d="M8.5,0.5 L12.5,4.5 L8.5,8.5 L4.5,4.5 Z" fill="#e86070"/><path d="M4.5,4.5 L8.5,8.5 L4.5,12.5 L0.5,8.5 Z" fill="#70a8f0"/><path d="M12.5,4.5 L16.5,8.5 L12.5,12.5 L8.5,8.5 Z" fill="#60c060"/><path d="M8.5,8.5 L12.5,12.5 L8.5,16.5 L4.5,12.5 Z" fill="#f0e070"/><circle cx="8.5" cy="9.5" r="1.8" fill="#303030"/><path d="M6,4 L8,2 M10,4 L12,6 M11,11 L13,9" stroke="#ffffff" stroke-width="0.8" opacity="0.7"/></svg><div class="t" style="left:28px;top:184px;height:30px;line-height:30px;color:#ffffff;">Open Vim here</div><svg style="position:absolute;left:6px;top:190px;" width="17" height="15" viewBox="0 0 17 15"><path d="M8.5,1 L16,7.5 L8.5,14 L1,7.5 Z" fill="#40a040"/><path d="M2,1 H8 V3 H7 V9 L11,3 H10 V1 H15 V3 H14 L7,14 H5 V3 H2 Z" fill="#d0d0d0" stroke="#101010" stroke-width="0.9"/><path d="M9,9 H16 V14 H9 Z" fill="#202020"/><path d="M10,10 V13 M11.5,10.5 V13 M13,10.5 V13 M14.5,10.5 V13" stroke="#d0d0d0" stroke-width="0.9"/></svg><div class="t" style="left:28px;top:214px;height:30px;line-height:30px;color:#ffffff;">Play with VLC media player</div><svg style="position:absolute;left:7px;top:219px;" width="14" height="16" viewBox="0 0 14 16"><path d="M5.5,0 H8.5 L12,11 H2 Z" fill="#f58a12"/><path d="M4.6,3.5 H9.4 L10.3,6.5 H3.7 Z" fill="#e8e8e8"/><path d="M3.2,8 H10.8 L11.4,10 H2.6 Z" fill="#f0f0f0"/><rect x="0" y="11" width="14" height="4" rx="1.5" fill="#f07c00"/><rect x="1" y="11.5" width="12" height="1.5" fill="#ffb040"/></svg><div class="t" style="left:28px;top:244px;height:30px;line-height:30px;color:#8ea8c8;"><span style="letter-spacing:0">7</span>-Zip</div><svg style="position:absolute;left:269px;top:253px;" width="6" height="10" viewBox="0 0 6 10"><path d="M0,0 L5,4.5 L0,9 Z" fill="#ffffff"/></svg><div class="a" style="left:1px;top:272px;width:283px;height:1px;background:#d6def0;"></div><div class="t" style="left:28px;top:274px;height:30px;line-height:30px;color:#ffffff;">Send a copy...</div><div class="a" style="left:1px;top:302px;width:283px;height:1px;background:#d6def0;"></div><div class="t" style="left:28px;top:304px;height:30px;line-height:30px;color:#ffffff;">Scan with Microsoft Defender...</div><div class="a" style="left:1px;top:332px;width:283px;height:1px;background:#d6def0;"></div><div class="t" style="left:28px;top:334px;height:30px;line-height:30px;color:#8ea8c8;">Give access to</div><svg style="position:absolute;left:269px;top:343px;" width="6" height="10" viewBox="0 0 6 10"><path d="M0,0 L5,4.5 L0,9 Z" fill="#ffffff"/></svg><div class="a" style="left:1px;top:362px;width:283px;height:1px;background:#d6def0;"></div><div class="t" style="left:28px;top:364px;height:30px;line-height:30px;color:#ffffff;">SVN Checkout...</div><svg style="position:absolute;left:6px;top:368px;" width="17" height="18" viewBox="0 0 17 18"><rect x="7" y="1" width="9" height="13" rx="2.5" fill="#f0c030" stroke="#a07a10" stroke-width="0.6"/><path d="M8,4 H15 M8,7 H15" stroke="#ffe080" stroke-width="0.8"/><path d="M1,16 C2,10 5,8.5 9,9 L8,6.5 L13,10.5 L8,14.5 L9,12 C5.5,11.5 3,13 1,16 Z" fill="#22a822"/></svg><div class="t" style="left:28px;top:394px;height:30px;line-height:30px;color:#8ea8c8;">TortoiseSVN</div><svg style="position:absolute;left:6px;top:400px;" width="17" height="14" viewBox="0 0 17 14"><ellipse cx="7" cy="6.5" rx="6" ry="4.5" fill="#b0c4e4"/><ellipse cx="7" cy="5.5" rx="4" ry="2.5" fill="#d8e4f4"/><rect x="9" y="8" width="7" height="5" fill="#f0d060"/><path d="M12,1 L16,4" stroke="#e0e0e0" stroke-width="1.2"/><path d="M1,10 L3,12 M10,4 L12,2" stroke="#e0e0e0" stroke-width="1"/></svg><svg style="position:absolute;left:269px;top:403px;" width="6" height="10" viewBox="0 0 6 10"><path d="M0,0 L5,4.5 L0,9 Z" fill="#ffffff"/></svg><div class="a" style="left:1px;top:422px;width:283px;height:1px;background:#d6def0;"></div><div class="t" style="left:28px;top:424px;height:30px;line-height:30px;color:#ffffff;">Restore previous versions</div><div class="t" style="left:28px;top:454px;height:30px;line-height:30px;color:#8ea8c8;">Include in library</div><svg style="position:absolute;left:269px;top:463px;" width="6" height="10" viewBox="0 0 6 10"><path d="M0,0 L5,4.5 L0,9 Z" fill="#ffffff"/></svg><div class="t" style="left:28px;top:484px;height:30px;line-height:30px;color:#ffffff;">Pin to Start</div><div class="a" style="left:1px;top:512px;width:283px;height:1px;background:#d6def0;"></div><div class="t" style="left:28px;top:514px;height:30px;line-height:30px;color:#8ea8c8;">Send to</div><svg style="position:absolute;left:269px;top:523px;" width="6" height="10" viewBox="0 0 6 10"><path d="M0,0 L5,4.5 L0,9 Z" fill="#ffffff"/></svg><div class="a" style="left:1px;top:542px;width:283px;height:1px;background:#d6def0;"></div><div class="t" style="left:28px;top:544px;height:30px;line-height:30px;color:#ffffff;">Cut</div><div class="t" style="right:2560px;top:544px;height:30px;line-height:30px;color:#ffffff;text-align:right;right:6px;letter-spacing:0.5px">[Ctrl+X]</div><div class="t" style="left:28px;top:574px;height:30px;line-height:30px;color:#ffffff;">Copy</div><div class="t" style="right:2560px;top:574px;height:30px;line-height:30px;color:#ffffff;text-align:right;right:6px;letter-spacing:0.5px">[Ctrl+C]</div><div class="a" style="left:1px;top:602px;width:283px;height:1px;background:#d6def0;"></div><div class="t" style="left:28px;top:604px;height:30px;line-height:30px;color:#ffffff;">Create shortcut</div><div class="t" style="left:28px;top:634px;height:30px;line-height:30px;color:#ffffff;">Delete</div><svg style="position:absolute;left:7px;top:640px;" width="14" height="16" viewBox="0 0 14 16"><path d="M7,0 L14,3 V8 C14,12 11,14.5 7,16 C3,14.5 0,12 0,8 V3 Z" fill="#2a7ad8"/><path d="M7,0 L14,3 V8 H7 Z" fill="#f8c030"/><path d="M7,8 V16 C3,14.5 0,12 0,8 Z" fill="#f8c030"/></svg><div class="t" style="right:2560px;top:634px;height:30px;line-height:30px;color:#ffffff;text-align:right;right:6px;letter-spacing:0.5px">[Delete]</div><div class="a" style="left:1px;top:662px;width:283px;height:1px;background:#d6def0;"></div><div class="t" style="left:28px;top:664px;height:30px;line-height:30px;color:#ffffff;">Properties</div></div><div class="a" style="left:611px;top:159px;width:942px;height:998px;border-radius:7px;overflow:hidden;background:#ffffff"><div class="a" style="left:0px;top:0px;width:942px;height:30px;background:#ffffff;"></div><div class="a" style="left:5px;top:-2px;width:146px;height:30px;background:#ebebeb;border:1px solid #a8a8a8;border-radius:0 0 8px 8px"></div><svg style="position:absolute;left:9px;top:4px;" width="16" height="16" viewBox="0 0 16 16"><path d="M1.5,16 C1,12.5 2,10 5,9.2 L9.5,9.4 C12.5,10.2 14,12.5 13.5,16.5 Z" fill="#3d9266"/><path d="M9.5,9.4 C12.5,10.2 14,12.5 13.5,16.5 L10,16 C11,13 10.5,11 9.5,9.4 Z" fill="#2f7a52"/><path d="M5.2,9.3 L6.5,13.5 L8.5,9.4 Z" fill="#e6f4ea"/><ellipse cx="7" cy="5.2" rx="3.4" ry="3.9" fill="#c8916c"/><path d="M9.5,3 C10.5,4.5 10.3,7 9.2,8.5 C10.8,7.5 11.2,4 10,2.2 Z" fill="#8a5a40"/><path d="M3.6,5 C3.2,1.8 5,0.3 7.2,0.3 C9.8,0.3 11,2.2 10.6,5.2 C10,3.2 8.8,2.6 7.2,2.6 C5.6,2.6 4.4,3.3 3.6,5 Z" fill="#2e2826"/></svg><div class="t" style="left:30px;top:-1px;height:28px;line-height:28px;color:#2a2a2a;">Vjekoslav</div><svg style="position:absolute;left:124px;top:8px;" width="10" height="10" viewBox="0 0 10 10"><path d="M0.5,0.5 L9.5,9.5 M9.5,0.5 L0.5,9.5" stroke="#777777" stroke-width="0.9"/></svg><div class="a" style="left:155px;top:-2px;width:146px;height:30px;background:#ebebeb;border:1px solid #a8a8a8;border-radius:0 0 8px 8px"></div><svg style="position:absolute;left:159px;top:5px;" width="15" height="16" viewBox="0 0 15 16"><path d="M4.5,0 H10.5 V7 H15 L7.5,16 L0,7 H4.5 Z" fill="url(#gblue)"/></svg><div class="t" style="left:180px;top:-1px;height:28px;line-height:28px;color:#2a2a2a;">Downloads</div><svg style="position:absolute;left:274px;top:8px;" width="10" height="10" viewBox="0 0 10 10"><path d="M0.5,0.5 L9.5,9.5 M9.5,0.5 L0.5,9.5" stroke="#777777" stroke-width="0.9"/></svg><div class="a" style="left:305px;top:-2px;width:146px;height:30px;background:#d4d4f7;border-radius:0 0 8px 8px"></div><svg style="position:absolute;left:310px;top:4px;" width="14" height="17" viewBox="0 0 14 17"><path d="M0.5,0.5 H11.5 V9.5 H13.5 V16.5 H0.5 Z" fill="#fbe38e" stroke="#e3b94a" stroke-width="1"/><path d="M1,1 H11 V10 H13 V16 H1 Z" fill="url(#gfold)"/><path d="M10.5,10 V16" stroke="#e3b94a" stroke-width="1"/></svg><div class="t" style="left:330px;top:-1px;height:28px;line-height:28px;color:#2a2a2a;">Windows</div><svg style="position:absolute;left:424px;top:8px;" width="10" height="10" viewBox="0 0 10 10"><path d="M0.5,0.5 L9.5,9.5 M9.5,0.5 L0.5,9.5" stroke="#777777" stroke-width="0.9"/></svg><svg class="a" style="left:464px;top:9px" width="10" height="10"><path d="M5,1 V9 M1,5 H9" stroke="#2a2a2a" stroke-width="1.1"/></svg><div class="a" style="left:823px;top:19px;width:11px;height:1.2px;background:#333333;"></div><svg class="a" style="left:868px;top:9px" width="12" height="12"><rect x="1" y="1" width="10" height="10" fill="none" stroke="#333333" stroke-width="1.3"/></svg><svg style="position:absolute;left:912px;top:9px;" width="13" height="13" viewBox="0 0 13 13"><path d="M0.5,0.5 L12.5,12.5 M12.5,0.5 L0.5,12.5" stroke="#777777" stroke-width="1.0"/></svg><div class="a" style="left:0px;top:30px;width:942px;height:1px;background:#a8a8a8;"></div><div class="a" style="left:0px;top:31px;width:942px;height:28px;background:#ebebeb;"></div><svg style="position:absolute;left:10px;top:39px;" width="12" height="12" viewBox="0 0 12 12"><path d="M0.5,3.5 L4.5,0.5 V6.5 Z" fill="#2a2a2a"/><path d="M4,3.5 H10.5 V10.5 H4" fill="none" stroke="#2a2a2a" stroke-width="1.3"/></svg><svg style="position:absolute;left:45px;top:39px;" width="12" height="12" viewBox="0 0 12 12"><path d="M11.5,3.5 L7.5,0.5 V6.5 Z" fill="#a0a0a0"/><path d="M8,3.5 H1.5 V10.5 H8" fill="none" stroke="#a0a0a0" stroke-width="1.3"/></svg><svg style="position:absolute;left:80px;top:43px;" width="12" height="6" viewBox="0 0 12 6"><path d="M0,0 H12 L6.0,6 Z" fill="#2a2a2a"/></svg><svg style="position:absolute;left:118px;top:39px;" width="8" height="12" viewBox="0 0 8 12"><path d="M4,0 L8,5 H5.5 V12 H2.5 V5 H0 Z" fill="#2a2a2a"/></svg><div class="a" style="left:141px;top:32px;width:1px;height:27px;background:#a8a8a8;"></div><div class="t" style="left:155px;top:31px;height:28px;line-height:28px;color:#2a2a2a;">This PC</div><svg style="position:absolute;left:229px;top:40px;" width="5" height="10" viewBox="0 0 5 10"><path d="M0,0 L5,5 L0,10 Z" fill="#2a2a2a"/></svg><div class="t" style="left:251px;top:31px;height:28px;line-height:28px;color:#2a2a2a;">Windows <span style="letter-spacing:0">10</span> (C:)</div><svg style="position:absolute;left:383px;top:40px;" width="5" height="10" viewBox="0 0 5 10"><path d="M0,0 L5,5 L0,10 Z" fill="#2a2a2a"/></svg><div class="t" style="left:405px;top:31px;height:28px;line-height:28px;color:#2a2a2a;">Windows</div><div class="a" style="left:0px;top:59px;width:942px;height:1px;background:#a8a8a8;"></div><div class="a" style="left:0px;top:91px;width:917px;height:1px;background:#ebebeb;"></div><div class="a" style="left:0px;top:121px;width:917px;height:1px;background:#ebebeb;"></div><div class="a" style="left:0px;top:151px;width:917px;height:1px;background:#ebebeb;"></div><div class="a" style="left:0px;top:181px;width:917px;height:1px;background:#ebebeb;"></div><div class="a" style="left:0px;top:211px;width:917px;height:1px;background:#ebebeb;"></div><div class="a" style="left:0px;top:241px;width:917px;height:1px;background:#ebebeb;"></div><div class="a" style="left:0px;top:271px;width:917px;height:1px;background:#ebebeb;"></div><div class="a" style="left:0px;top:301px;width:917px;height:1px;background:#ebebeb;"></div><div class="a" style="left:0px;top:331px;width:917px;height:1px;background:#ebebeb;"></div><div class="a" style="left:0px;top:361px;width:917px;height:1px;background:#ebebeb;"></div><div class="a" style="left:0px;top:391px;width:917px;height:1px;background:#ebebeb;"></div><div class="a" style="left:0px;top:421px;width:917px;height:1px;background:#ebebeb;"></div><div class="a" style="left:0px;top:451px;width:917px;height:1px;background:#ebebeb;"></div><div class="a" style="left:0px;top:481px;width:917px;height:1px;background:#ebebeb;"></div><div class="a" style="left:0px;top:511px;width:917px;height:1px;background:#ebebeb;"></div><div class="a" style="left:0px;top:541px;width:917px;height:1px;background:#ebebeb;"></div><div class="a" style="left:0px;top:571px;width:917px;height:1px;background:#ebebeb;"></div><div class="a" style="left:0px;top:601px;width:917px;height:1px;background:#ebebeb;"></div><div class="a" style="left:0px;top:631px;width:917px;height:1px;background:#ebebeb;"></div><div class="a" style="left:0px;top:661px;width:917px;height:1px;background:#ebebeb;"></div><div class="a" style="left:0px;top:691px;width:917px;height:1px;background:#ebebeb;"></div><div class="a" style="left:0px;top:721px;width:917px;height:1px;background:#ebebeb;"></div><div class="a" style="left:0px;top:751px;width:917px;height:1px;background:#ebebeb;"></div><div class="a" style="left:0px;top:781px;width:917px;height:1px;background:#ebebeb;"></div><div class="a" style="left:0px;top:811px;width:917px;height:1px;background:#ebebeb;"></div><div class="a" style="left:0px;top:841px;width:917px;height:1px;background:#ebebeb;"></div><div class="a" style="left:0px;top:871px;width:917px;height:1px;background:#ebebeb;"></div><div class="a" style="left:0px;top:901px;width:917px;height:1px;background:#ebebeb;"></div><div class="a" style="left:0px;top:931px;width:917px;height:1px;background:#ebebeb;"></div><div class="a" style="left:0px;top:961px;width:917px;height:1px;background:#ebebeb;"></div><svg style="position:absolute;left:17px;top:68px;" width="14" height="17" viewBox="0 0 14 17"><path d="M0.5,0.5 H11.5 V9.5 H13.5 V16.5 H0.5 Z" fill="#fbe38e" stroke="#e3b94a" stroke-width="1"/><path d="M1,1 H11 V10 H13 V16 H1 Z" fill="url(#gfold)"/><path d="M10.5,10 V16" stroke="#e3b94a" stroke-width="1"/></svg><div class="t" style="left:37px;top:62px;height:30px;line-height:30px;color:#7f66a8"><span style="position:relative">Cursors<span style="position:absolute;left:-1px;right:-1px;top:15px;height:2px;background:#c8cce8"></span></span></div><svg style="position:absolute;left:7px;top:98px;" width="14" height="17" viewBox="0 0 14 17"><path d="M0.5,0.5 H11.5 V9.5 H13.5 V16.5 H0.5 Z" fill="#fbe38e" stroke="#e3b94a" stroke-width="1"/><path d="M1,1 H11 V10 H13 V16 H1 Z" fill="url(#gfold)"/><path d="M10.5,10 V16" stroke="#e3b94a" stroke-width="1"/></svg><div class="t" style="left:27px;top:92px;color:#d8714c">BitLockerDiscoveryVolumeContents</div><svg style="position:absolute;left:7px;top:128px;" width="14" height="17" viewBox="0 0 14 17"><path d="M0.5,0.5 H11.5 V9.5 H13.5 V16.5 H0.5 Z" fill="#fbe38e" stroke="#e3b94a" stroke-width="1"/><path d="M1,1 H11 V10 H13 V16 H1 Z" fill="url(#gfold)"/><path d="M10.5,10 V16" stroke="#e3b94a" stroke-width="1"/></svg><div class="t" style="left:27px;top:122px;color:#7f66a8">CSC</div><svg style="position:absolute;left:7px;top:158px;" width="14" height="17" viewBox="0 0 14 17"><path d="M0.5,0.5 H11.5 V9.5 H13.5 V16.5 H0.5 Z" fill="#fbe38e" stroke="#e3b94a" stroke-width="1"/><path d="M1,1 H11 V10 H13 V16 H1 Z" fill="url(#gfold)"/><path d="M10.5,10 V16" stroke="#e3b94a" stroke-width="1"/></svg><div class="t" style="left:27px;top:152px;color:#7f66a8">DiagTrack</div><div class="a" style="left:2px;top:182px;width:303px;height:29px;background:#d2d2f7;border-radius:6px"></div><svg style="position:absolute;left:7px;top:188px;" width="13" height="17" viewBox="0 0 13 17"><path d="M0.5,0.5 H9 L12.5,4 V16.5 H0.5 Z" fill="#f8f8f8" stroke="#8a8a8a" stroke-width="1"/><path d="M3,5.5 H10 M3,7.5 H10 M3,9.5 H10 M3,11.5 H10 M3,13.5 H10" stroke="#9a9a9a" stroke-width="1"/></svg><div class="t" style="left:27px;top:182px;color:#2a2a2a">DtcInstall.log</div><div class="a" style="left:2px;top:212px;width:303px;height:29px;background:#d2d2f7;border-radius:6px"></div><svg style="position:absolute;left:7px;top:218px;" width="14" height="17" viewBox="0 0 14 17"><path d="M0.5,0.5 H11.5 V9.5 H13.5 V16.5 H0.5 Z" fill="#fbe38e" stroke="#e3b94a" stroke-width="1"/><path d="M1,1 H11 V10 H13 V16 H1 Z" fill="url(#gfold)"/><path d="M10.5,10 V16" stroke="#e3b94a" stroke-width="1"/><text x="9" y="17" font-family="Liberation Serif" font-weight="bold" font-size="12" fill="#1a7a9a" text-anchor="middle">A</text></svg><div class="t" style="left:27px;top:212px;color:#2a2a2a">Fonts</div><div class="a" style="left:2px;top:242px;width:303px;height:29px;background:#d2d2f7;border-radius:6px"></div><svg style="position:absolute;left:6px;top:249px;" width="15" height="15" viewBox="0 0 15 15"><circle cx="7.5" cy="7.5" r="7" fill="#106a98" stroke="#e8f4ff" stroke-width="1"/><text x="7.5" y="12" font-family="Liberation Sans" font-weight="bold" font-size="12" fill="#fff" text-anchor="middle">?</text></svg><div class="t" style="left:27px;top:242px;color:#2a2a2a">HelpPane.exe</div><div class="a" style="left:2px;top:272px;width:303px;height:29px;background:#d2d2f7;border-radius:6px"></div><svg style="position:absolute;left:7px;top:278px;" width="14" height="17" viewBox="0 0 14 17"><path d="M0.5,0.5 H11.5 V9.5 H13.5 V16.5 H0.5 Z" fill="#fbe38e" stroke="#e3b94a" stroke-width="1"/><path d="M1,1 H11 V10 H13 V16 H1 Z" fill="url(#gfold)"/><path d="M10.5,10 V16" stroke="#e3b94a" stroke-width="1"/></svg><div class="t" style="left:27px;top:272px;color:#2a2a2a">INF</div><div class="a" style="left:2px;top:302px;width:303px;height:29px;background:#d2d2f7;border-radius:6px"></div><svg style="position:absolute;left:7px;top:308px;" width="14" height="17" viewBox="0 0 14 17"><path d="M0.5,0.5 H11.5 V9.5 H13.5 V16.5 H0.5 Z" fill="#fbe38e" stroke="#e3b94a" stroke-width="1"/><path d="M1,1 H11 V10 H13 V16 H1 Z" fill="url(#gfold)"/><path d="M10.5,10 V16" stroke="#e3b94a" stroke-width="1"/></svg><div class="t" style="left:27px;top:302px;color:#2a2a2a">InputMethod</div><div class="a" style="left:2px;top:332px;width:303px;height:29px;background:#d2d2f7;border-radius:6px"></div><svg style="position:absolute;left:7px;top:338px;" width="14" height="17" viewBox="0 0 14 17"><path d="M0.5,0.5 H11.5 V9.5 H13.5 V16.5 H0.5 Z" fill="#fbe38e" stroke="#e3b94a" stroke-width="1"/><path d="M1,1 H11 V10 H13 V16 H1 Z" fill="url(#gfold)"/><path d="M10.5,10 V16" stroke="#e3b94a" stroke-width="1"/></svg><div class="t" style="left:27px;top:332px;color:#2a2a2a">LanguageOverlayCache</div><div class="a" style="left:2px;top:362px;width:303px;height:29px;background:#d2d2f7;border-radius:6px"></div><svg style="position:absolute;left:7px;top:368px;" width="14" height="17" viewBox="0 0 14 17"><path d="M0.5,0.5 H11.5 V9.5 H13.5 V16.5 H0.5 Z" fill="#fbe38e" stroke="#e3b94a" stroke-width="1"/><path d="M1,1 H11 V10 H13 V16 H1 Z" fill="url(#gfold)"/><path d="M10.5,10 V16" stroke="#e3b94a" stroke-width="1"/></svg><div class="t" style="left:27px;top:362px;color:#2a2a2a">Media</div><div class="a" style="left:2px;top:392px;width:303px;height:29px;background:#d2d2f7;border-radius:6px"></div><svg style="position:absolute;left:7px;top:398px;" width="14" height="17" viewBox="0 0 14 17"><path d="M0.5,0.5 H11.5 V9.5 H13.5 V16.5 H0.5 Z" fill="#fbe38e" stroke="#e3b94a" stroke-width="1"/><path d="M1,1 H11 V10 H13 V16 H1 Z" fill="url(#gfold)"/><path d="M10.5,10 V16" stroke="#e3b94a" stroke-width="1"/></svg><div class="t" style="left:27px;top:392px;color:#2a2a2a">ModemLogs</div><div class="a" style="left:2px;top:422px;width:303px;height:29px;background:#d2d2f7;border-radius:6px"></div><svg style="position:absolute;left:6px;top:428px;" width="16" height="16" viewBox="0 0 16 16"><rect x="0.5" y="2.5" width="15" height="11" fill="#f0e0a0" stroke="#303030" stroke-width="1"/><path d="M3,6 H9 L7,4 M13,10 H7 L9,12" stroke="#1a5ab0" stroke-width="1.6" fill="none"/></svg><div class="t" style="left:27px;top:422px;color:#2a2a2a">Offline Web Pages</div><svg style="position:absolute;left:7px;top:458px;" width="14" height="17" viewBox="0 0 14 17"><path d="M0.5,0.5 H11.5 V9.5 H13.5 V16.5 H0.5 Z" fill="#fbe38e" stroke="#e3b94a" stroke-width="1"/><path d="M1,1 H11 V10 H13 V16 H1 Z" fill="url(#gfold)"/><path d="M10.5,10 V16" stroke="#e3b94a" stroke-width="1"/></svg><div class="t" style="left:27px;top:452px;color:#7f66a8">Panther</div><svg style="position:absolute;left:7px;top:488px;" width="14" height="17" viewBox="0 0 14 17"><path d="M0.5,0.5 H11.5 V9.5 H13.5 V16.5 H0.5 Z" fill="#fbe38e" stroke="#e3b94a" stroke-width="1"/><path d="M1,1 H11 V10 H13 V16 H1 Z" fill="url(#gfold)"/><path d="M10.5,10 V16" stroke="#e3b94a" stroke-width="1"/></svg><div class="t" style="left:27px;top:482px;color:#7f66a8">PolicyDefinitions</div><svg style="position:absolute;left:7px;top:518px;" width="13" height="17" viewBox="0 0 13 17"><path d="M0.5,0.5 H9 L12.5,4 V16.5 H0.5 Z" fill="#f8f8f8" stroke="#8a8a8a" stroke-width="1"/><rect x="2.5" y="4" width="5" height="4" fill="#4a9ad8"/><path d="M3,10.5 H10 M3,12.5 H10" stroke="#9a9a9a" stroke-width="1"/></svg><div class="t" style="left:27px;top:512px;color:#2a2a2a">Professional.xml</div><svg style="position:absolute;left:7px;top:548px;" width="14" height="17" viewBox="0 0 14 17"><path d="M0.5,0.5 H11.5 V9.5 H13.5 V16.5 H0.5 Z" fill="#fbe38e" stroke="#e3b94a" stroke-width="1"/><path d="M1,1 H11 V10 H13 V16 H1 Z" fill="url(#gfold)"/><path d="M10.5,10 V16" stroke="#e3b94a" stroke-width="1"/></svg><div class="t" style="left:27px;top:542px;color:#7f66a8">RemotePackages</div><svg style="position:absolute;left:7px;top:578px;" width="13" height="17" viewBox="0 0 13 17"><path d="M0.5,0.5 H9 L12.5,4 V16.5 H0.5 Z" fill="#f4f4f4" stroke="#8a8a8a" stroke-width="1"/><circle cx="6.5" cy="9" r="3" fill="none" stroke="#8a8a8a" stroke-width="1.2"/><path d="M8.5,11 L11,13.5" stroke="#8a8a8a" stroke-width="1.2"/></svg><div class="t" style="left:27px;top:572px;color:#2a2a2a">RtlExUpd.dll</div><svg style="position:absolute;left:7px;top:608px;" width="14" height="17" viewBox="0 0 14 17"><path d="M0.5,0.5 H11.5 V9.5 H13.5 V16.5 H0.5 Z" fill="#fbe38e" stroke="#e3b94a" stroke-width="1"/><path d="M1,1 H11 V10 H13 V16 H1 Z" fill="url(#gfold)"/><path d="M10.5,10 V16" stroke="#e3b94a" stroke-width="1"/></svg><div class="t" style="left:27px;top:602px;color:#7f66a8">ServiceProfiles</div><svg style="position:absolute;left:7px;top:638px;" width="14" height="17" viewBox="0 0 14 17"><path d="M0.5,0.5 H11.5 V9.5 H13.5 V16.5 H0.5 Z" fill="#fbe38e" stroke="#e3b94a" stroke-width="1"/><path d="M1,1 H11 V10 H13 V16 H1 Z" fill="url(#gfold)"/><path d="M10.5,10 V16" stroke="#e3b94a" stroke-width="1"/></svg><div class="t" style="left:27px;top:632px;color:#7f66a8">ShellComponents</div><svg style="position:absolute;left:7px;top:668px;" width="14" height="17" viewBox="0 0 14 17"><path d="M0.5,0.5 H11.5 V9.5 H13.5 V16.5 H0.5 Z" fill="#fbe38e" stroke="#e3b94a" stroke-width="1"/><path d="M1,1 H11 V10 H13 V16 H1 Z" fill="url(#gfold)"/><path d="M10.5,10 V16" stroke="#e3b94a" stroke-width="1"/></svg><div class="t" style="left:27px;top:662px;color:#7f66a8">Speech</div><svg style="position:absolute;left:7px;top:698px;" width="14" height="17" viewBox="0 0 14 17"><path d="M0.5,0.5 H11.5 V9.5 H13.5 V16.5 H0.5 Z" fill="#fbe38e" stroke="#e3b94a" stroke-width="1"/><path d="M1,1 H11 V10 H13 V16 H1 Z" fill="url(#gfold)"/><path d="M10.5,10 V16" stroke="#e3b94a" stroke-width="1"/></svg><div class="t" style="left:27px;top:692px;color:#7f66a8">SystemApps</div><svg style="position:absolute;left:7px;top:728px;" width="14" height="17" viewBox="0 0 14 17"><path d="M0.5,0.5 H11.5 V9.5 H13.5 V16.5 H0.5 Z" fill="#fbe38e" stroke="#e3b94a" stroke-width="1"/><path d="M1,1 H11 V10 H13 V16 H1 Z" fill="url(#gfold)"/><path d="M10.5,10 V16" stroke="#e3b94a" stroke-width="1"/></svg><div class="t" style="left:27px;top:722px;color:#7f66a8">System</div><svg style="position:absolute;left:7px;top:758px;" width="14" height="17" viewBox="0 0 14 17"><path d="M0.5,0.5 H11.5 V9.5 H13.5 V16.5 H0.5 Z" fill="#fbe38e" stroke="#e3b94a" stroke-width="1"/><path d="M1,1 H11 V10 H13 V16 H1 Z" fill="url(#gfold)"/><path d="M10.5,10 V16" stroke="#e3b94a" stroke-width="1"/></svg><div class="t" style="left:27px;top:752px;color:#7f66a8">TempInst</div><svg style="position:absolute;left:7px;top:788px;" width="13" height="17" viewBox="0 0 13 17"><path d="M0.5,0.5 H9 L12.5,4 V16.5 H0.5 Z" fill="#f8f8f8" stroke="#8a8a8a" stroke-width="1"/><path d="M9,0.5 V4 H12.5" fill="none" stroke="#8a8a8a" stroke-width="1"/></svg><div class="t" style="left:27px;top:782px;color:#2a2a2a">WMSysPr<span style="letter-spacing:0">9</span>.prx</div><svg style="position:absolute;left:7px;top:818px;" width="14" height="17" viewBox="0 0 14 17"><path d="M0.5,0.5 H11.5 V9.5 H13.5 V16.5 H0.5 Z" fill="#fbe38e" stroke="#e3b94a" stroke-width="1"/><path d="M1,1 H11 V10 H13 V16 H1 Z" fill="url(#gfold)"/><path d="M10.5,10 V16" stroke="#e3b94a" stroke-width="1"/></svg><div class="t" style="left:27px;top:812px;color:#7f66a8">WinSxS</div><svg style="position:absolute;left:7px;top:848px;" width="14" height="17" viewBox="0 0 14 17"><path d="M0.5,0.5 H11.5 V9.5 H13.5 V16.5 H0.5 Z" fill="#fbe38e" stroke="#e3b94a" stroke-width="1"/><path d="M1,1 H11 V10 H13 V16 H1 Z" fill="url(#gfold)"/><path d="M10.5,10 V16" stroke="#e3b94a" stroke-width="1"/></svg><div class="t" style="left:27px;top:842px;color:#7f66a8">addins</div><svg style="position:absolute;left:7px;top:878px;" width="14" height="17" viewBox="0 0 14 17"><path d="M0.5,0.5 H11.5 V9.5 H13.5 V16.5 H0.5 Z" fill="#fbe38e" stroke="#e3b94a" stroke-width="1"/><path d="M1,1 H11 V10 H13 V16 H1 Z" fill="url(#gfold)"/><path d="M10.5,10 V16" stroke="#e3b94a" stroke-width="1"/></svg><div class="t" style="left:27px;top:872px;color:#7f66a8">assembly</div><svg style="position:absolute;left:7px;top:908px;" width="13" height="17" viewBox="0 0 13 17"><path d="M0.5,0.5 H9 L12.5,4 V16.5 H0.5 Z" fill="#f8f8f8" stroke="#8a8a8a" stroke-width="1"/><path d="M9,0.5 V4 H12.5" fill="none" stroke="#8a8a8a" stroke-width="1"/></svg><div class="t" style="left:27px;top:902px;color:#d8714c">bootstat.dat</div><svg style="position:absolute;left:7px;top:938px;" width="14" height="17" viewBox="0 0 14 17"><path d="M0.5,0.5 H11.5 V9.5 H13.5 V16.5 H0.5 Z" fill="#fbe38e" stroke="#e3b94a" stroke-width="1"/><path d="M1,1 H11 V10 H13 V16 H1 Z" fill="url(#gfold)"/><path d="M10.5,10 V16" stroke="#e3b94a" stroke-width="1"/></svg><div class="t" style="left:27px;top:932px;color:#7f66a8">en-US</div><svg style="position:absolute;left:313px;top:68px;" width="14" height="17" viewBox="0 0 14 17"><path d="M0.5,0.5 H11.5 V9.5 H13.5 V16.5 H0.5 Z" fill="#fbe38e" stroke="#e3b94a" stroke-width="1"/><path d="M1,1 H11 V10 H13 V16 H1 Z" fill="url(#gfold)"/><path d="M10.5,10 V16" stroke="#e3b94a" stroke-width="1"/></svg><div class="t" style="left:333px;top:62px;color:#7f66a8">AppReadiness</div><svg style="position:absolute;left:313px;top:98px;" width="14" height="17" viewBox="0 0 14 17"><path d="M0.5,0.5 H11.5 V9.5 H13.5 V16.5 H0.5 Z" fill="#fbe38e" stroke="#e3b94a" stroke-width="1"/><path d="M1,1 H11 V10 H13 V16 H1 Z" fill="url(#gfold)"/><path d="M10.5,10 V16" stroke="#e3b94a" stroke-width="1"/></svg><div class="t" style="left:333px;top:92px;color:#7f66a8">Boot</div><svg style="position:absolute;left:313px;top:128px;" width="14" height="17" viewBox="0 0 14 17"><path d="M0.5,0.5 H11.5 V9.5 H13.5 V16.5 H0.5 Z" fill="#fbe38e" stroke="#e3b94a" stroke-width="1"/><path d="M1,1 H11 V10 H13 V16 H1 Z" fill="url(#gfold)"/><path d="M10.5,10 V16" stroke="#e3b94a" stroke-width="1"/></svg><div class="t" style="left:333px;top:122px;color:#7f66a8">CbsTemp</div><svg style="position:absolute;left:313px;top:158px;" width="14" height="17" viewBox="0 0 14 17"><path d="M0.5,0.5 H11.5 V9.5 H13.5 V16.5 H0.5 Z" fill="#fbe38e" stroke="#e3b94a" stroke-width="1"/><path d="M1,1 H11 V10 H13 V16 H1 Z" fill="url(#gfold)"/><path d="M10.5,10 V16" stroke="#e3b94a" stroke-width="1"/></svg><div class="t" style="left:333px;top:152px;color:#7f66a8">DigitalLocker</div><div class="a" style="left:308px;top:182px;width:303px;height:29px;background:#d2d2f7;border-radius:6px"></div><svg style="position:absolute;left:313px;top:188px;" width="14" height="17" viewBox="0 0 14 17"><path d="M0.5,0.5 H11.5 V9.5 H13.5 V16.5 H0.5 Z" fill="#fbe38e" stroke="#e3b94a" stroke-width="1"/><path d="M1,1 H11 V10 H13 V16 H1 Z" fill="url(#gfold)"/><path d="M10.5,10 V16" stroke="#e3b94a" stroke-width="1"/></svg><div class="t" style="left:333px;top:182px;color:#2a2a2a">ELAMBKUP</div><div class="a" style="left:308px;top:212px;width:303px;height:29px;background:#d2d2f7;border-radius:6px"></div><svg style="position:absolute;left:313px;top:218px;" width="14" height="17" viewBox="0 0 14 17"><path d="M0.5,0.5 H11.5 V9.5 H13.5 V16.5 H0.5 Z" fill="#fbe38e" stroke="#e3b94a" stroke-width="1"/><path d="M1,1 H11 V10 H13 V16 H1 Z" fill="url(#gfold)"/><path d="M10.5,10 V16" stroke="#e3b94a" stroke-width="1"/></svg><div class="t" style="left:333px;top:212px;color:#2a2a2a">GameBarPresenceWriter</div><div class="a" style="left:308px;top:242px;width:303px;height:29px;background:#d2d2f7;border-radius:6px"></div><svg style="position:absolute;left:313px;top:248px;" width="14" height="17" viewBox="0 0 14 17"><path d="M0.5,0.5 H11.5 V9.5 H13.5 V16.5 H0.5 Z" fill="#fbe38e" stroke="#e3b94a" stroke-width="1"/><path d="M1,1 H11 V10 H13 V16 H1 Z" fill="url(#gfold)"/><path d="M10.5,10 V16" stroke="#e3b94a" stroke-width="1"/></svg><div class="t" style="left:333px;top:242px;color:#2a2a2a">Help</div><div class="a" style="left:308px;top:272px;width:303px;height:29px;background:#d2d2f7;border-radius:6px"></div><svg style="position:absolute;left:313px;top:278px;" width="14" height="17" viewBox="0 0 14 17"><path d="M0.5,0.5 H11.5 V9.5 H13.5 V16.5 H0.5 Z" fill="#fbe38e" stroke="#e3b94a" stroke-width="1"/><path d="M1,1 H11 V10 H13 V16 H1 Z" fill="url(#gfold)"/><path d="M10.5,10 V16" stroke="#e3b94a" stroke-width="1"/></svg><div class="t" style="left:333px;top:272px;color:#2a2a2a">IdentityCRL</div><div class="a" style="left:308px;top:302px;width:303px;height:29px;background:#d2d2f7;border-radius:6px"></div><svg style="position:absolute;left:313px;top:308px;" width="14" height="17" viewBox="0 0 14 17"><path d="M0.5,0.5 H11.5 V9.5 H13.5 V16.5 H0.5 Z" fill="#fbe38e" stroke="#e3b94a" stroke-width="1"/><path d="M1,1 H11 V10 H13 V16 H1 Z" fill="url(#gfold)"/><path d="M10.5,10 V16" stroke="#e3b94a" stroke-width="1"/></svg><div class="t" style="left:333px;top:302px;color:#2a2a2a">InstallShield</div><div class="a" style="left:308px;top:332px;width:303px;height:29px;background:#d2d2f7;border-radius:6px"></div><svg style="position:absolute;left:313px;top:338px;" width="14" height="17" viewBox="0 0 14 17"><path d="M0.5,0.5 H11.5 V9.5 H13.5 V16.5 H0.5 Z" fill="#fbe38e" stroke="#e3b94a" stroke-width="1"/><path d="M1,1 H11 V10 H13 V16 H1 Z" fill="url(#gfold)"/><path d="M10.5,10 V16" stroke="#e3b94a" stroke-width="1"/></svg><div class="t" style="left:333px;top:332px;color:#2a2a2a">LiveKernelReports</div><div class="a" style="left:308px;top:362px;width:303px;height:29px;background:#d2d2f7;border-radius:6px"></div><svg style="position:absolute;left:313px;top:368px;" width="14" height="17" viewBox="0 0 14 17"><path d="M0.5,0.5 H11.5 V9.5 H13.5 V16.5 H0.5 Z" fill="#fbe38e" stroke="#e3b94a" stroke-width="1"/><path d="M1,1 H11 V10 H13 V16 H1 Z" fill="url(#gfold)"/><path d="M10.5,10 V16" stroke="#e3b94a" stroke-width="1"/></svg><div class="t" style="left:333px;top:362px;color:#2a2a2a">Microsoft.NET</div><div class="a" style="left:308px;top:392px;width:303px;height:29px;background:#d2d2f7;border-radius:6px"></div><svg style="position:absolute;left:313px;top:398px;" width="13" height="17" viewBox="0 0 13 17"><path d="M0.5,0.5 H9 L12.5,4 V16.5 H0.5 Z" fill="#f4f4f4" stroke="#8a8a8a" stroke-width="1"/><circle cx="6.5" cy="9" r="3" fill="none" stroke="#8a8a8a" stroke-width="1.2"/><path d="M8.5,11 L11,13.5" stroke="#8a8a8a" stroke-width="1.2"/></svg><div class="t" style="left:333px;top:392px;color:#2a2a2a">Nord.log</div><div class="a" style="left:308px;top:422px;width:303px;height:29px;background:#d2d2f7;border-radius:6px"></div><svg style="position:absolute;left:313px;top:428px;" width="13" height="17" viewBox="0 0 13 17"><path d="M0.5,0.5 H9 L12.5,4 V16.5 H0.5 Z" fill="#f8f8f8" stroke="#8a8a8a" stroke-width="1"/><path d="M3,5.5 H10 M3,7.5 H10 M3,9.5 H10 M3,11.5 H10 M3,13.5 H10" stroke="#9a9a9a" stroke-width="1"/></svg><div class="t" style="left:333px;top:422px;color:#2a2a2a">PFRO.log</div><svg style="position:absolute;left:313px;top:458px;" width="14" height="17" viewBox="0 0 14 17"><path d="M0.5,0.5 H11.5 V9.5 H13.5 V16.5 H0.5 Z" fill="#fbe38e" stroke="#e3b94a" stroke-width="1"/><path d="M1,1 H11 V10 H13 V16 H1 Z" fill="url(#gfold)"/><path d="M10.5,10 V16" stroke="#e3b94a" stroke-width="1"/></svg><div class="t" style="left:333px;top:452px;color:#7f66a8">Performance</div><svg style="position:absolute;left:313px;top:488px;" width="14" height="17" viewBox="0 0 14 17"><path d="M0.5,0.5 H11.5 V9.5 H13.5 V16.5 H0.5 Z" fill="#fbe38e" stroke="#e3b94a" stroke-width="1"/><path d="M1,1 H11 V10 H13 V16 H1 Z" fill="url(#gfold)"/><path d="M10.5,10 V16" stroke="#e3b94a" stroke-width="1"/></svg><div class="t" style="left:333px;top:482px;color:#7f66a8">Prefetch</div><svg style="position:absolute;left:313px;top:518px;" width="14" height="17" viewBox="0 0 14 17"><path d="M0.5,0.5 H11.5 V9.5 H13.5 V16.5 H0.5 Z" fill="#fbe38e" stroke="#e3b94a" stroke-width="1"/><path d="M1,1 H11 V10 H13 V16 H1 Z" fill="url(#gfold)"/><path d="M10.5,10 V16" stroke="#e3b94a" stroke-width="1"/></svg><div class="t" style="left:333px;top:512px;color:#7f66a8">Provisioning</div><svg style="position:absolute;left:313px;top:548px;" width="14" height="17" viewBox="0 0 14 17"><path d="M0.5,0.5 H11.5 V9.5 H13.5 V16.5 H0.5 Z" fill="#fbe38e" stroke="#e3b94a" stroke-width="1"/><path d="M1,1 H11 V10 H13 V16 H1 Z" fill="url(#gfold)"/><path d="M10.5,10 V16" stroke="#e3b94a" stroke-width="1"/></svg><div class="t" style="left:333px;top:542px;color:#7f66a8">Resources</div><svg style="position:absolute;left:313px;top:578px;" width="14" height="17" viewBox="0 0 14 17"><path d="M0.5,0.5 H11.5 V9.5 H13.5 V16.5 H0.5 Z" fill="#fbe38e" stroke="#e3b94a" stroke-width="1"/><path d="M1,1 H11 V10 H13 V16 H1 Z" fill="url(#gfold)"/><path d="M10.5,10 V16" stroke="#e3b94a" stroke-width="1"/></svg><div class="t" style="left:333px;top:572px;color:#7f66a8">SKB</div><svg style="position:absolute;left:313px;top:608px;" width="14" height="17" viewBox="0 0 14 17"><path d="M0.5,0.5 H11.5 V9.5 H13.5 V16.5 H0.5 Z" fill="#fbe38e" stroke="#e3b94a" stroke-width="1"/><path d="M1,1 H11 V10 H13 V16 H1 Z" fill="url(#gfold)"/><path d="M10.5,10 V16" stroke="#e3b94a" stroke-width="1"/></svg><div class="t" style="left:333px;top:602px;color:#7f66a8">ServiceState</div><svg style="position:absolute;left:313px;top:638px;" width="14" height="17" viewBox="0 0 14 17"><path d="M0.5,0.5 H11.5 V9.5 H13.5 V16.5 H0.5 Z" fill="#fbe38e" stroke="#e3b94a" stroke-width="1"/><path d="M1,1 H11 V10 H13 V16 H1 Z" fill="url(#gfold)"/><path d="M10.5,10 V16" stroke="#e3b94a" stroke-width="1"/></svg><div class="t" style="left:333px;top:632px;color:#7f66a8">SoftwareDistribution</div><svg style="position:absolute;left:313px;top:668px;" width="14" height="17" viewBox="0 0 14 17"><path d="M0.5,0.5 H11.5 V9.5 H13.5 V16.5 H0.5 Z" fill="#fbe38e" stroke="#e3b94a" stroke-width="1"/><path d="M1,1 H11 V10 H13 V16 H1 Z" fill="url(#gfold)"/><path d="M10.5,10 V16" stroke="#e3b94a" stroke-width="1"/></svg><div class="t" style="left:333px;top:662px;color:#7f66a8">SysWOW<span style="letter-spacing:0">64</span></div><svg style="position:absolute;left:313px;top:698px;" width="14" height="17" viewBox="0 0 14 17"><path d="M0.5,0.5 H11.5 V9.5 H13.5 V16.5 H0.5 Z" fill="#fbe38e" stroke="#e3b94a" stroke-width="1"/><path d="M1,1 H11 V10 H13 V16 H1 Z" fill="url(#gfold)"/><path d="M10.5,10 V16" stroke="#e3b94a" stroke-width="1"/></svg><div class="t" style="left:333px;top:692px;color:#7f66a8">SystemResources</div><svg style="position:absolute;left:313px;top:728px;" width="14" height="17" viewBox="0 0 14 17"><path d="M0.5,0.5 H11.5 V9.5 H13.5 V16.5 H0.5 Z" fill="#fbe38e" stroke="#e3b94a" stroke-width="1"/><path d="M1,1 H11 V10 H13 V16 H1 Z" fill="url(#gfold)"/><path d="M10.5,10 V16" stroke="#e3b94a" stroke-width="1"/></svg><div class="t" style="left:333px;top:722px;color:#7f66a8">TAPI</div><svg style="position:absolute;left:313px;top:758px;" width="14" height="17" viewBox="0 0 14 17"><path d="M0.5,0.5 H11.5 V9.5 H13.5 V16.5 H0.5 Z" fill="#fbe38e" stroke="#e3b94a" stroke-width="1"/><path d="M1,1 H11 V10 H13 V16 H1 Z" fill="url(#gfold)"/><path d="M10.5,10 V16" stroke="#e3b94a" stroke-width="1"/></svg><div class="t" style="left:333px;top:752px;color:#7f66a8">Temp</div><svg style="position:absolute;left:313px;top:788px;" width="14" height="17" viewBox="0 0 14 17"><path d="M0.5,0.5 H11.5 V9.5 H13.5 V16.5 H0.5 Z" fill="#fbe38e" stroke="#e3b94a" stroke-width="1"/><path d="M1,1 H11 V10 H13 V16 H1 Z" fill="url(#gfold)"/><path d="M10.5,10 V16" stroke="#e3b94a" stroke-width="1"/></svg><div class="t" style="left:333px;top:782px;color:#7f66a8">WaaS</div><svg style="position:absolute;left:313px;top:818px;" width="13" height="17" viewBox="0 0 13 17"><path d="M0.5,0.5 H9 L12.5,4 V16.5 H0.5 Z" fill="#f8f8f8" stroke="#8a8a8a" stroke-width="1"/><path d="M9,0.5 V4 H12.5" fill="none" stroke="#8a8a8a" stroke-width="1"/></svg><div class="t" style="left:333px;top:812px;color:#2a2a2a">WindowsUpdate.log</div><svg style="position:absolute;left:313px;top:848px;" width="14" height="17" viewBox="0 0 14 17"><path d="M0.5,0.5 H11.5 V9.5 H13.5 V16.5 H0.5 Z" fill="#fbe38e" stroke="#e3b94a" stroke-width="1"/><path d="M1,1 H11 V10 H13 V16 H1 Z" fill="url(#gfold)"/><path d="M10.5,10 V16" stroke="#e3b94a" stroke-width="1"/></svg><div class="t" style="left:333px;top:842px;color:#7f66a8">appcompat</div><svg style="position:absolute;left:313px;top:878px;" width="14" height="17" viewBox="0 0 14 17"><path d="M0.5,0.5 H11.5 V9.5 H13.5 V16.5 H0.5 Z" fill="#fbe38e" stroke="#e3b94a" stroke-width="1"/><path d="M1,1 H11 V10 H13 V16 H1 Z" fill="url(#gfold)"/><path d="M10.5,10 V16" stroke="#e3b94a" stroke-width="1"/></svg><div class="t" style="left:333px;top:872px;color:#7f66a8">bcastdvr</div><svg style="position:absolute;left:313px;top:908px;" width="14" height="17" viewBox="0 0 14 17"><path d="M0.5,0.5 H11.5 V9.5 H13.5 V16.5 H0.5 Z" fill="#fbe38e" stroke="#e3b94a" stroke-width="1"/><path d="M1,1 H11 V10 H13 V16 H1 Z" fill="url(#gfold)"/><path d="M10.5,10 V16" stroke="#e3b94a" stroke-width="1"/></svg><div class="t" style="left:333px;top:902px;color:#7f66a8">debug</div><svg style="position:absolute;left:311px;top:940px;" width="17" height="14" viewBox="0 0 17 14"><path d="M0,2 H6 L7,4 H17 V13 H0 Z" fill="#f0c040"/><rect x="0" y="5" width="17" height="8" fill="#ffd860"/><rect x="5" y="8" width="7" height="5" fill="#2a7ad0"/><rect x="7" y="10" width="3" height="3" fill="#ffd860"/></svg><div class="t" style="left:333px;top:932px;color:#2a2a2a">explorer.exe</div><svg style="position:absolute;left:620px;top:68px;" width="14" height="17" viewBox="0 0 14 17"><path d="M0.5,0.5 H11.5 V9.5 H13.5 V16.5 H0.5 Z" fill="#fbe38e" stroke="#e3b94a" stroke-width="1"/><path d="M1,1 H11 V10 H13 V16 H1 Z" fill="url(#gfold)"/><path d="M10.5,10 V16" stroke="#e3b94a" stroke-width="1"/></svg><div class="t" style="left:640px;top:62px;color:#7f66a8">ShellExperiences</div><svg style="position:absolute;left:620px;top:98px;" width="14" height="17" viewBox="0 0 14 17"><path d="M0.5,0.5 H11.5 V9.5 H13.5 V16.5 H0.5 Z" fill="#fbe38e" stroke="#e3b94a" stroke-width="1"/><path d="M1,1 H11 V10 H13 V16 H1 Z" fill="url(#gfold)"/><path d="M10.5,10 V16" stroke="#e3b94a" stroke-width="1"/></svg><div class="t" style="left:640px;top:92px;color:#7f66a8">Branding</div><div class="a" style="left:920px;top:62px;width:20px;height:24px;border:1px solid #a8a8a8;border-radius:8px;background:#ebebeb"></div><svg class="a" style="left:925px;top:71px" width="10" height="6"><path d="M0,5.5 H10 L5,0.5 Z" fill="#2a2a2a"/></svg><div class="a" style="left:920px;top:87px;width:20px;height:913px;border:1px solid #a8a8a8;border-radius:8px;background:#ebebeb"></div><div class="a" style="left:0px;top:968px;width:942px;height:1px;background:#a8a8a8;"></div><div class="a" style="left:0px;top:969px;width:942px;height:29px;background:#ebebeb;"></div><svg style="position:absolute;left:14px;top:974px;" width="23" height="17" viewBox="0 0 23 17"><rect x="1" y="8" width="14" height="7" fill="none" stroke="#2a2a2a" stroke-width="1.6"/><path d="M4,6 H18 V12" fill="none" stroke="#2a2a2a" stroke-width="1.6"/><path d="M7,3 H21 V9" fill="none" stroke="#2a2a2a" stroke-width="1.6"/></svg><div class="t" style="left:46px;top:969px;height:28px;line-height:28px;color:#2a2a2a;letter-spacing:0.3px"><span style="letter-spacing:0">18</span></div><div class="a" style="left:371px;top:971px;width:199px;height:25px;border:1px solid #a8a8a8;border-radius:7px;background:#f4f4f4"></div></div><div class="a" style="left:611px;top:159px;width:942px;height:998px;border-radius:7px;border:1px solid #c0c0c0"></div><div class="a" style="left:983px;top:270px;width:942px;height:998px;border-radius:7px;overflow:hidden;background:#f5e8c8"><div class="a" style="left:0px;top:0px;width:942px;height:30px;background:#f5e6c4;"></div><div class="a" style="left:5px;top:-2px;width:146px;height:30px;background:#dccba8;border:1px solid #7a6a52;border-radius:0 0 8px 8px"></div><svg style="position:absolute;left:9px;top:4px;" width="16" height="16" viewBox="0 0 16 16"><path d="M1.5,16 C1,12.5 2,10 5,9.2 L9.5,9.4 C12.5,10.2 14,12.5 13.5,16.5 Z" fill="#3d9266"/><path d="M9.5,9.4 C12.5,10.2 14,12.5 13.5,16.5 L10,16 C11,13 10.5,11 9.5,9.4 Z" fill="#2f7a52"/><path d="M5.2,9.3 L6.5,13.5 L8.5,9.4 Z" fill="#e6f4ea"/><ellipse cx="7" cy="5.2" rx="3.4" ry="3.9" fill="#c8916c"/><path d="M9.5,3 C10.5,4.5 10.3,7 9.2,8.5 C10.8,7.5 11.2,4 10,2.2 Z" fill="#8a5a40"/><path d="M3.6,5 C3.2,1.8 5,0.3 7.2,0.3 C9.8,0.3 11,2.2 10.6,5.2 C10,3.2 8.8,2.6 7.2,2.6 C5.6,2.6 4.4,3.3 3.6,5 Z" fill="#2e2826"/></svg><div class="t" style="left:30px;top:-1px;height:28px;line-height:28px;color:#222222;">Vjekoslav</div><svg style="position:absolute;left:124px;top:8px;" width="10" height="10" viewBox="0 0 10 10"><path d="M0.5,0.5 L9.5,9.5 M9.5,0.5 L0.5,9.5" stroke="#5a5a5a" stroke-width="0.9"/></svg><div class="a" style="left:155px;top:-2px;width:146px;height:30px;background:#dccba8;border:1px solid #7a6a52;border-radius:0 0 8px 8px"></div><svg style="position:absolute;left:159px;top:5px;" width="15" height="16" viewBox="0 0 15 16"><path d="M4.5,0 H10.5 V7 H15 L7.5,16 L0,7 H4.5 Z" fill="url(#gblue)"/></svg><div class="t" style="left:180px;top:-1px;height:28px;line-height:28px;color:#222222;">Downloads</div><svg style="position:absolute;left:274px;top:8px;" width="10" height="10" viewBox="0 0 10 10"><path d="M0.5,0.5 L9.5,9.5 M9.5,0.5 L0.5,9.5" stroke="#5a5a5a" stroke-width="0.9"/></svg><div class="a" style="left:305px;top:-2px;width:146px;height:30px;background:#4b8963;border-radius:0 0 8px 8px"></div><svg style="position:absolute;left:309px;top:4px;" width="16" height="16" viewBox="0 0 16 16"><path d="M1.5,16 C1,12.5 2,10 5,9.2 L9.5,9.4 C12.5,10.2 14,12.5 13.5,16.5 Z" fill="#3d9266"/><path d="M9.5,9.4 C12.5,10.2 14,12.5 13.5,16.5 L10,16 C11,13 10.5,11 9.5,9.4 Z" fill="#2f7a52"/><path d="M5.2,9.3 L6.5,13.5 L8.5,9.4 Z" fill="#e6f4ea"/><ellipse cx="7" cy="5.2" rx="3.4" ry="3.9" fill="#c8916c"/><path d="M9.5,3 C10.5,4.5 10.3,7 9.2,8.5 C10.8,7.5 11.2,4 10,2.2 Z" fill="#8a5a40"/><path d="M3.6,5 C3.2,1.8 5,0.3 7.2,0.3 C9.8,0.3 11,2.2 10.6,5.2 C10,3.2 8.8,2.6 7.2,2.6 C5.6,2.6 4.4,3.3 3.6,5 Z" fill="#2e2826"/></svg><div class="t" style="left:330px;top:-1px;height:28px;line-height:28px;color:#1e2a22;">Vjekoslav</div><svg style="position:absolute;left:424px;top:8px;" width="10" height="10" viewBox="0 0 10 10"><path d="M0.5,0.5 L9.5,9.5 M9.5,0.5 L0.5,9.5" stroke="#2e4a38" stroke-width="0.9"/></svg><svg class="a" style="left:464px;top:9px" width="10" height="10"><path d="M5,1 V9 M1,5 H9" stroke="#222222" stroke-width="1.1"/></svg><div class="a" style="left:823px;top:19px;width:11px;height:1.2px;background:#2a2a2a;"></div><svg class="a" style="left:868px;top:9px" width="12" height="12"><rect x="1" y="1" width="10" height="10" fill="none" stroke="#2a2a2a" stroke-width="1.3"/></svg><svg style="position:absolute;left:912px;top:9px;" width="13" height="13" viewBox="0 0 13 13"><path d="M0.5,0.5 L12.5,12.5 M12.5,0.5 L0.5,12.5" stroke="#5a5a5a" stroke-width="1.0"/></svg><div class="a" style="left:0px;top:30px;width:942px;height:1px;background:#6e6048;"></div><div class="a" style="left:0px;top:31px;width:942px;height:28px;background:#dccba8;"></div><svg style="position:absolute;left:10px;top:39px;" width="12" height="12" viewBox="0 0 12 12"><path d="M0.5,3.5 L4.5,0.5 V6.5 Z" fill="#bfae8c"/><path d="M4,3.5 H10.5 V10.5 H4" fill="none" stroke="#bfae8c" stroke-width="1.3"/></svg><svg style="position:absolute;left:45px;top:39px;" width="12" height="12" viewBox="0 0 12 12"><path d="M11.5,3.5 L7.5,0.5 V6.5 Z" fill="#bfae8c"/><path d="M8,3.5 H1.5 V10.5 H8" fill="none" stroke="#bfae8c" stroke-width="1.3"/></svg><svg style="position:absolute;left:80px;top:43px;" width="12" height="6" viewBox="0 0 12 6"><path d="M0,0 H12 L6.0,6 Z" fill="#bfae8c"/></svg><svg style="position:absolute;left:118px;top:39px;" width="8" height="12" viewBox="0 0 8 12"><path d="M4,0 L8,5 H5.5 V12 H2.5 V5 H0 Z" fill="#222222"/></svg><div class="a" style="left:141px;top:32px;width:1px;height:27px;background:#6e6048;"></div><div class="t" style="left:155px;top:31px;height:28px;line-height:28px;color:#222222;">This PC</div><svg style="position:absolute;left:229px;top:40px;" width="5" height="10" viewBox="0 0 5 10"><path d="M0,0 L5,5 L0,10 Z" fill="#222222"/></svg><div class="t" style="left:251px;top:31px;height:28px;line-height:28px;color:#222222;">Windows <span style="letter-spacing:0">10</span> (C:)</div><svg style="position:absolute;left:383px;top:40px;" width="5" height="10" viewBox="0 0 5 10"><path d="M0,0 L5,5 L0,10 Z" fill="#222222"/></svg><div class="t" style="left:406px;top:31px;height:28px;line-height:28px;color:#222222;">Users</div><svg style="position:absolute;left:464px;top:40px;" width="5" height="10" viewBox="0 0 5 10"><path d="M0,0 L5,5 L0,10 Z" fill="#222222"/></svg><div class="t" style="left:486px;top:31px;height:28px;line-height:28px;color:#222222;">Vjekoslav</div><div class="a" style="left:246px;top:34px;width:123px;height:22px;background:#4b8963;border:1px solid #3e6e50;border-radius:6px"></div><div class="a" style="left:371px;top:34px;width:29px;height:22px;background:#4b8963;border:1px solid #3e6e50;border-radius:6px"></div><svg style="position:absolute;left:380px;top:47px;" width="9" height="5" viewBox="0 0 9 5"><path d="M0,0 H9 L4.5,5 Z" fill="#222222"/></svg><div class="t" style="left:251px;top:31px;height:28px;line-height:28px;color:#1e2a22;">Windows <span style="letter-spacing:0">10</span> (C:)</div><div class="a" style="left:0px;top:59px;width:942px;height:1px;background:#6e6048;"></div><div class="a" style="left:0px;top:91px;width:920px;height:1px;background:#eadab6;"></div><div class="a" style="left:0px;top:121px;width:920px;height:1px;background:#eadab6;"></div><div class="a" style="left:0px;top:151px;width:920px;height:1px;background:#eadab6;"></div><div class="a" style="left:0px;top:181px;width:920px;height:1px;background:#eadab6;"></div><div class="a" style="left:0px;top:211px;width:920px;height:1px;background:#eadab6;"></div><div class="a" style="left:0px;top:241px;width:920px;height:1px;background:#eadab6;"></div><div class="a" style="left:0px;top:271px;width:920px;height:1px;background:#eadab6;"></div><div class="a" style="left:0px;top:301px;width:920px;height:1px;background:#eadab6;"></div><div class="a" style="left:0px;top:331px;width:920px;height:1px;background:#eadab6;"></div><div class="a" style="left:0px;top:361px;width:920px;height:1px;background:#eadab6;"></div><div class="a" style="left:0px;top:391px;width:920px;height:1px;background:#eadab6;"></div><div class="a" style="left:0px;top:421px;width:920px;height:1px;background:#eadab6;"></div><div class="a" style="left:0px;top:451px;width:920px;height:1px;background:#eadab6;"></div><div class="a" style="left:0px;top:481px;width:920px;height:1px;background:#eadab6;"></div><div class="a" style="left:0px;top:511px;width:920px;height:1px;background:#eadab6;"></div><div class="a" style="left:0px;top:541px;width:920px;height:1px;background:#eadab6;"></div><div class="a" style="left:0px;top:571px;width:920px;height:1px;background:#eadab6;"></div><div class="a" style="left:0px;top:601px;width:920px;height:1px;background:#eadab6;"></div><div class="a" style="left:0px;top:631px;width:920px;height:1px;background:#eadab6;"></div><div class="a" style="left:0px;top:661px;width:920px;height:1px;background:#eadab6;"></div><div class="a" style="left:0px;top:691px;width:920px;height:1px;background:#eadab6;"></div><div class="a" style="left:0px;top:721px;width:920px;height:1px;background:#eadab6;"></div><div class="a" style="left:0px;top:751px;width:920px;height:1px;background:#eadab6;"></div><div class="a" style="left:0px;top:781px;width:920px;height:1px;background:#eadab6;"></div><div class="a" style="left:0px;top:811px;width:920px;height:1px;background:#eadab6;"></div><div class="a" style="left:0px;top:841px;width:920px;height:1px;background:#eadab6;"></div><div class="a" style="left:0px;top:871px;width:920px;height:1px;background:#eadab6;"></div><div class="a" style="left:0px;top:901px;width:920px;height:1px;background:#eadab6;"></div><div class="a" style="left:0px;top:931px;width:920px;height:1px;background:#eadab6;"></div><div class="a" style="left:0px;top:961px;width:920px;height:1px;background:#eadab6;"></div><svg style="position:absolute;left:16px;top:69px;" width="17" height="13" viewBox="0 0 17 13"><rect x="0.5" y="0.5" width="16" height="12" fill="#1aa0f0" stroke="#0a5a9a" stroke-width="1"/><path d="M2,11 L14,2" stroke="#5cc0ff" stroke-width="2" opacity="0.5"/><rect x="1" y="9.5" width="15" height="2.5" fill="#0a6ab8"/><rect x="2" y="10.5" width="1" height="1" fill="#fff"/><rect x="13" y="10.5" width="1" height="1" fill="#fff"/><rect x="15" y="10.5" width="0.8" height="1" fill="#fff"/></svg><div class="t" style="left:37px;top:62px;height:30px;line-height:30px;color:#b8872c"><span style="position:relative">Desktop<span style="position:absolute;left:-1px;right:-1px;top:15px;height:2px;background:#4b8963"></span></span></div><svg style="position:absolute;left:6px;top:98px;" width="15" height="16" viewBox="0 0 15 16"><path d="M4.5,0 H10.5 V7 H15 L7.5,16 L0,7 H4.5 Z" fill="url(#gblue)"/></svg><div class="t" style="left:27px;top:92px;color:#b8872c">Downloads</div><svg style="position:absolute;left:7px;top:128px;" width="14" height="17" viewBox="0 0 14 17"><path d="M0.5,0.5 H11.5 V9.5 H13.5 V16.5 H0.5 Z" fill="#fbe38e" stroke="#e3b94a" stroke-width="1"/><path d="M1,1 H11 V10 H13 V16 H1 Z" fill="url(#gfold)"/><path d="M10.5,10 V16" stroke="#e3b94a" stroke-width="1"/></svg><div class="t" style="left:27px;top:122px;color:#b8872c">Apps</div><svg style="position:absolute;left:7px;top:158px;" width="14" height="17" viewBox="0 0 14 17"><path d="M0.5,0.5 H11.5 V9.5 H13.5 V16.5 H0.5 Z" fill="#fbe38e" stroke="#e3b94a" stroke-width="1"/><path d="M1,1 H11 V10 H13 V16 H1 Z" fill="url(#gfold)"/><path d="M10.5,10 V16" stroke="#e3b94a" stroke-width="1"/></svg><div class="t" style="left:27px;top:152px;color:#b8872c">AppData</div><svg style="position:absolute;left:7px;top:188px;" width="14" height="17" viewBox="0 0 14 17"><path d="M0.5,0.5 H11.5 V9.5 H13.5 V16.5 H0.5 Z" fill="#fbe38e" stroke="#e3b94a" stroke-width="1"/><path d="M1,1 H11 V10 H13 V16 H1 Z" fill="url(#gfold)"/><path d="M10.5,10 V16" stroke="#e3b94a" stroke-width="1"/></svg><div class="t" style="left:27px;top:182px;color:#b8872c">.config</div><svg style="position:absolute;left:6px;top:218px;" width="16" height="16" viewBox="0 0 16 16"><path d="M8,0.5 L10.2,5.6 L15.5,6 L11.4,9.5 L12.7,15 L8,12 L3.3,15 L4.6,9.5 L0.5,6 L5.8,5.6 Z" fill="#f8b040" stroke="#d88a20" stroke-width="0.8"/></svg><div class="t" style="left:27px;top:212px;color:#b8872c">Favorites</div><svg style="position:absolute;left:7px;top:248px;" width="14" height="17" viewBox="0 0 14 17"><path d="M0.5,0.5 H11.5 V9.5 H13.5 V16.5 H0.5 Z" fill="#fbe38e" stroke="#e3b94a" stroke-width="1"/><path d="M1,1 H11 V10 H13 V16 H1 Z" fill="url(#gfold)"/><path d="M10.5,10 V16" stroke="#e3b94a" stroke-width="1"/></svg><div class="t" style="left:27px;top:242px;color:#b8872c">.VirtualBox</div><svg style="position:absolute;left:7px;top:278px;" width="13" height="17" viewBox="0 0 13 17"><path d="M0.5,0.5 H9 L12.5,4 V16.5 H0.5 Z" fill="#f4f4f4" stroke="#7a7a7a" stroke-width="1"/><rect x="2.5" y="5" width="7" height="7" fill="#3d6e4a"/><path d="M3.5,11 L8.5,6" stroke="#e0e0e0" stroke-width="1.2"/></svg><div class="t" style="left:27px;top:272px;color:#222222">.bash_history</div><svg style="position:absolute;left:7px;top:308px;" width="13" height="17" viewBox="0 0 13 17"><path d="M0.5,0.5 H9 L12.5,4 V16.5 H0.5 Z" fill="#f4f4f4" stroke="#7a7a7a" stroke-width="1"/><rect x="2.5" y="5" width="7" height="7" fill="#3d6e4a"/><path d="M3.5,11 L8.5,6" stroke="#e0e0e0" stroke-width="1.2"/></svg><div class="t" style="left:27px;top:302px;color:#222222">.gitconfig</div><svg style="position:absolute;left:7px;top:338px;" width="13" height="17" viewBox="0 0 13 17"><path d="M0.5,0.5 H9 L12.5,4 V16.5 H0.5 Z" fill="#f4f4f4" stroke="#7a7a7a" stroke-width="1"/><rect x="2.5" y="5" width="7" height="7" fill="#3d6e4a"/><path d="M3.5,11 L8.5,6" stroke="#e0e0e0" stroke-width="1.2"/></svg><div class="t" style="left:27px;top:332px;color:#222222">.lesshst</div><svg style="position:absolute;left:7px;top:368px;" width="13" height="17" viewBox="0 0 13 17"><path d="M0.5,0.5 H9 L12.5,4 V16.5 H0.5 Z" fill="#f8f8f8" stroke="#8a8a8a" stroke-width="1"/><path d="M9,0.5 V4 H12.5" fill="none" stroke="#8a8a8a" stroke-width="1"/></svg><div class="t" style="left:27px;top:362px;color:#222222">.minttyrc</div><svg style="position:absolute;left:7px;top:398px;" width="14" height="17" viewBox="0 0 14 17"><path d="M0.5,0.5 H11.5 V9.5 H13.5 V16.5 H0.5 Z" fill="#fbe38e" stroke="#e3b94a" stroke-width="1"/><path d="M1,1 H11 V10 H13 V16 H1 Z" fill="url(#gfold)"/><path d="M10.5,10 V16" stroke="#e3b94a" stroke-width="1"/></svg><div class="t" style="left:27px;top:392px;color:#b8872c">.obs<span style="letter-spacing:0">64</span></div><svg style="position:absolute;left:7px;top:428px;" width="14" height="17" viewBox="0 0 14 17"><path d="M0.5,0.5 H11.5 V9.5 H13.5 V16.5 H0.5 Z" fill="#fbe38e" stroke="#e3b94a" stroke-width="1"/><path d="M1,1 H11 V10 H13 V16 H1 Z" fill="url(#gfold)"/><path d="M10.5,10 V16" stroke="#e3b94a" stroke-width="1"/></svg><div class="t" style="left:27px;top:422px;color:#b8872c">.openjfx</div><svg style="position:absolute;left:7px;top:458px;" width="14" height="17" viewBox="0 0 14 17"><path d="M0.5,0.5 H11.5 V9.5 H13.5 V16.5 H0.5 Z" fill="#fbe38e" stroke="#e3b94a" stroke-width="1"/><path d="M1,1 H11 V10 H13 V16 H1 Z" fill="url(#gfold)"/><path d="M10.5,10 V16" stroke="#e3b94a" stroke-width="1"/></svg><div class="t" style="left:27px;top:452px;color:#b8872c">.openshot_qt</div><svg style="position:absolute;left:7px;top:488px;" width="14" height="17" viewBox="0 0 14 17"><path d="M0.5,0.5 H11.5 V9.5 H13.5 V16.5 H0.5 Z" fill="#fbe38e" stroke="#e3b94a" stroke-width="1"/><path d="M1,1 H11 V10 H13 V16 H1 Z" fill="url(#gfold)"/><path d="M10.5,10 V16" stroke="#e3b94a" stroke-width="1"/></svg><div class="t" style="left:27px;top:482px;color:#b8872c">.ssh</div><svg style="position:absolute;left:7px;top:518px;" width="14" height="17" viewBox="0 0 14 17"><path d="M0.5,0.5 H11.5 V9.5 H13.5 V16.5 H0.5 Z" fill="#fbe38e" stroke="#e3b94a" stroke-width="1"/><path d="M1,1 H11 V10 H13 V16 H1 Z" fill="url(#gfold)"/><path d="M10.5,10 V16" stroke="#e3b94a" stroke-width="1"/></svg><div class="t" style="left:27px;top:512px;color:#921616">Application Data</div><div class="t" style="left:27px;top:512px;height:30px;line-height:30px;color:transparent">Application Data<span style="color:#bdb29a;padding-left:9px">-&gt; C:\Users\Vjekoslav\AppData\Roaming</span></div><svg style="position:absolute;left:7px;top:548px;" width="14" height="17" viewBox="0 0 14 17"><path d="M0.5,0.5 H11.5 V9.5 H13.5 V16.5 H0.5 Z" fill="#fbe38e" stroke="#e3b94a" stroke-width="1"/><path d="M1,1 H11 V10 H13 V16 H1 Z" fill="url(#gfold)"/><path d="M10.5,10 V16" stroke="#e3b94a" stroke-width="1"/></svg><div class="t" style="left:27px;top:542px;color:#921616">Cookies</div><div class="t" style="left:27px;top:542px;height:30px;line-height:30px;color:transparent">Cookies<span style="color:#bdb29a;padding-left:9px">-&gt; C:\Users\Vjekoslav\AppData\Local\Microsoft\Windows\INetCookies</span></div><svg style="position:absolute;left:7px;top:578px;" width="13" height="17" viewBox="0 0 13 17"><path d="M0.5,0.5 H9 L12.5,4 V16.5 H0.5 Z" fill="#f8f8f8" stroke="#6a7a8a" stroke-width="1"/><path d="M2.5,5.5 H10 M2.5,8 H10 M2.5,10.5 H10 M2.5,13 H10" stroke="#3a8ad0" stroke-width="1.2"/></svg><div class="t" style="left:27px;top:572px;color:#b8872c">Documents</div><svg style="position:absolute;left:6px;top:609px;" width="16" height="15" viewBox="0 0 16 15"><path d="M4,1 L8,3.5 L4,6 L0,3.5 Z M12,1 L16,3.5 L12,6 L8,3.5 Z M4,6 L8,8.5 L4,11 L0,8.5 Z M12,6 L16,8.5 L12,11 L8,8.5 Z M4,12 L8,9.8 L12,12 L8,14.5 Z" fill="#2060e0"/></svg><div class="t" style="left:27px;top:602px;color:#b8872c">Dropbox</div><svg style="position:absolute;left:7px;top:638px;" width="14" height="17" viewBox="0 0 14 17"><path d="M0.5,0.5 H11.5 V9.5 H13.5 V16.5 H0.5 Z" fill="#fbe38e" stroke="#e3b94a" stroke-width="1"/><path d="M1,1 H11 V10 H13 V16 H1 Z" fill="url(#gfold)"/><path d="M10.5,10 V16" stroke="#e3b94a" stroke-width="1"/></svg><div class="t" style="left:27px;top:632px;color:#b8872c">Eksterni</div><svg style="position:absolute;left:6px;top:668px;" width="16" height="16" viewBox="0 0 16 16"><path d="M2,16 C1,9 4,6 9,6 V2 L15,8 L9,13 V9.5 C6,9.5 3.5,11 2,16 Z" fill="#3090e0"/></svg><div class="t" style="left:27px;top:662px;color:#b8872c">Links</div><svg style="position:absolute;left:7px;top:698px;" width="14" height="17" viewBox="0 0 14 17"><path d="M0.5,0.5 H11.5 V9.5 H13.5 V16.5 H0.5 Z" fill="#fbe38e" stroke="#e3b94a" stroke-width="1"/><path d="M1,1 H11 V10 H13 V16 H1 Z" fill="url(#gfold)"/><path d="M10.5,10 V16" stroke="#e3b94a" stroke-width="1"/></svg><div class="t" style="left:27px;top:692px;color:#921616">Local Settings</div><div class="t" style="left:27px;top:692px;height:30px;line-height:30px;color:transparent">Local Settings<span style="color:#bdb29a;padding-left:9px">-&gt; C:\Users\Vjekoslav\AppData\Local</span></div><svg style="position:absolute;left:8px;top:728px;" width="12" height="16" viewBox="0 0 12 16"><path d="M6,1 V12" stroke="#2e9ae8" stroke-width="2"/><ellipse cx="3.5" cy="12.5" rx="3.5" ry="2.8" fill="#2e9ae8"/><path d="M6,1 C9,3 11,5 10,9 C10,6 8,5 6,5" fill="#2e9ae8"/></svg><div class="t" style="left:27px;top:722px;color:#b8872c">Music</div><svg style="position:absolute;left:7px;top:758px;" width="13" height="17" viewBox="0 0 13 17"><path d="M0.5,0.5 H9 L12.5,4 V16.5 H0.5 Z" fill="#f8f8f8" stroke="#6a7a8a" stroke-width="1"/><path d="M2.5,5.5 H10 M2.5,8 H10 M2.5,10.5 H10 M2.5,13 H10" stroke="#3a8ad0" stroke-width="1.2"/></svg><div class="t" style="left:27px;top:752px;color:#921616">My Documents</div><div class="t" style="left:27px;top:752px;height:30px;line-height:30px;color:transparent">My Documents<span style="color:#bdb29a;padding-left:9px">-&gt; C:\Users\Vjekoslav\Documents</span></div><svg style="position:absolute;left:7px;top:788px;" width="13" height="17" viewBox="0 0 13 17"><path d="M0.5,0.5 H9 L12.5,4 V16.5 H0.5 Z" fill="#f8f8f8" stroke="#8a8a8a" stroke-width="1"/><path d="M9,0.5 V4 H12.5" fill="none" stroke="#8a8a8a" stroke-width="1"/></svg><div class="t" style="left:27px;top:782px;color:#921616">NTUSER.DAT{<span style="letter-spacing:0">53</span>b<span style="letter-spacing:0">39</span>e<span style="letter-spacing:0">88</span>-<span style="letter-spacing:0">18</span>c<span style="letter-spacing:0">4</span>-<span style="letter-spacing:0">11</span>ea-a<span style="letter-spacing:0">811</span>-<span style="letter-spacing:0">000</span>d<span style="letter-spacing:0">3</span>aa<span style="letter-spacing:0">4692</span>b}.TM.blf</div><svg style="position:absolute;left:7px;top:818px;" width="13" height="17" viewBox="0 0 13 17"><path d="M0.5,0.5 H9 L12.5,4 V16.5 H0.5 Z" fill="#f8f8f8" stroke="#8a8a8a" stroke-width="1"/><path d="M9,0.5 V4 H12.5" fill="none" stroke="#8a8a8a" stroke-width="1"/></svg><div class="t" style="left:27px;top:812px;color:#921616">NTUSER.DAT{<span style="letter-spacing:0">53</span>b<span style="letter-spacing:0">39</span>e<span style="letter-spacing:0">88</span>-<span style="letter-spacing:0">18</span>c<span style="letter-spacing:0">4</span>-<span style="letter-spacing:0">11</span>ea-a<span style="letter-spacing:0">811</span>-<span style="letter-spacing:0">000</span>d<span style="letter-spacing:0">3</span>aa<span style="letter-spacing:0">4692</span>b}.TMContainer<span style="letter-spacing:0">00000000000000000001</span>.regtrans-ms</div><svg style="position:absolute;left:7px;top:848px;" width="13" height="17" viewBox="0 0 13 17"><path d="M0.5,0.5 H9 L12.5,4 V16.5 H0.5 Z" fill="#f8f8f8" stroke="#8a8a8a" stroke-width="1"/><path d="M9,0.5 V4 H12.5" fill="none" stroke="#8a8a8a" stroke-width="1"/></svg><div class="t" style="left:27px;top:842px;color:#921616">NTUSER.DAT{<span style="letter-spacing:0">53</span>b<span style="letter-spacing:0">39</span>e<span style="letter-spacing:0">88</span>-<span style="letter-spacing:0">18</span>c<span style="letter-spacing:0">4</span>-<span style="letter-spacing:0">11</span>ea-a<span style="letter-spacing:0">811</span>-<span style="letter-spacing:0">000</span>d<span style="letter-spacing:0">3</span>aa<span style="letter-spacing:0">4692</span>b}.TMContainer<span style="letter-spacing:0">00000000000000000002</span>.regtrans-ms</div><svg style="position:absolute;left:7px;top:878px;" width="13" height="17" viewBox="0 0 13 17"><path d="M0.5,0.5 H9 L12.5,4 V16.5 H0.5 Z" fill="#f8f8f8" stroke="#8a8a8a" stroke-width="1"/><path d="M9,0.5 V4 H12.5" fill="none" stroke="#8a8a8a" stroke-width="1"/></svg><div class="t" style="left:27px;top:872px;color:#222222">NTUSER.DAT</div><svg style="position:absolute;left:7px;top:908px;" width="14" height="17" viewBox="0 0 14 17"><path d="M0.5,0.5 H11.5 V9.5 H13.5 V16.5 H0.5 Z" fill="#fbe38e" stroke="#e3b94a" stroke-width="1"/><path d="M1,1 H11 V10 H13 V16 H1 Z" fill="url(#gfold)"/><path d="M10.5,10 V16" stroke="#e3b94a" stroke-width="1"/></svg><div class="t" style="left:27px;top:902px;color:#921616">NetHood</div><div class="t" style="left:27px;top:902px;height:30px;line-height:30px;color:transparent">NetHood<span style="color:#bdb29a;padding-left:9px">-&gt; C:\Users\Vjekoslav\AppData\Roaming\Microsoft\Windows\Network Shortcuts</span></div><svg style="position:absolute;left:7px;top:938px;" width="14" height="17" viewBox="0 0 14 17"><path d="M0.5,0.5 H11.5 V9.5 H13.5 V16.5 H0.5 Z" fill="#fbe38e" stroke="#e3b94a" stroke-width="1"/><path d="M1,1 H11 V10 H13 V16 H1 Z" fill="url(#gfold)"/><path d="M10.5,10 V16" stroke="#e3b94a" stroke-width="1"/></svg><div class="t" style="left:27px;top:932px;color:#b8872c">Obsidian vaults</div><div class="t" style="right:27px;top:62px;color:#b8872c;letter-spacing:0.25px">D: 43034, F: 125185, 23 GB</div><div class="t" style="right:27px;top:92px;color:#b8872c;letter-spacing:0.25px">D: 0, F: 1, 282 bytes</div><div class="t" style="right:27px;top:122px;color:#b8872c;letter-spacing:0.25px">D: 486, F: 9508, 1 GB</div><div class="t" style="right:27px;top:152px;color:#b8872c;letter-spacing:0.25px">D: 7627, F: 53422, 14 GB</div><div class="t" style="right:27px;top:182px;color:#b8872c;letter-spacing:0.25px">D: 2, F: 2, 87 bytes</div><div class="t" style="right:27px;top:212px;color:#b8872c;letter-spacing:0.25px">D: 1, F: 3, 690 bytes</div><div class="t" style="right:27px;top:242px;color:#b8872c;letter-spacing:0.25px">D: 0, F: 7, 157 KB</div><div class="t" style="right:27px;top:272px;color:#222222;letter-spacing:0.25px">3 KB</div><div class="t" style="right:27px;top:302px;color:#222222;letter-spacing:0.25px">7 KB</div><div class="t" style="right:27px;top:332px;color:#222222;letter-spacing:0.25px">20 bytes</div><div class="t" style="right:27px;top:362px;color:#222222;letter-spacing:0.25px">20 bytes</div><div class="t" style="right:27px;top:392px;color:#b8872c;letter-spacing:0.25px">D: 0, F: 1, 1 KB</div><div class="t" style="right:27px;top:422px;color:#b8872c;letter-spacing:0.25px">D: 2, F: 48, 3 MB</div><div class="t" style="right:27px;top:452px;color:#b8872c;letter-spacing:0.25px">D: 14, F: 84, 104 MB</div><div class="t" style="right:27px;top:482px;color:#b8872c;letter-spacing:0.25px">D: 0, F: 9, 11 KB</div><div class="t" style="right:27px;top:512px;color:#921616;letter-spacing:0.25px">D: 0, F: 0, 0 bytes</div><div class="t" style="right:27px;top:542px;color:#921616;letter-spacing:0.25px">D: 0, F: 0, 0 bytes</div><div class="t" style="right:27px;top:572px;color:#b8872c;letter-spacing:0.25px">D: 356, F: 581, 20 MB</div><div class="t" style="right:27px;top:602px;color:#b8872c;letter-spacing:0.25px">D: 230, F: 1043, 46 GB</div><div class="t" style="right:27px;top:632px;color:#b8872c;letter-spacing:0.25px">D: 12, F: 127, 12 GB</div><div class="t" style="right:27px;top:662px;color:#b8872c;letter-spacing:0.25px">D: 0, F: 3, 1 KB</div><div class="t" style="right:27px;top:692px;color:#921616;letter-spacing:0.25px">D: 0, F: 0, 0 bytes</div><div class="t" style="right:27px;top:722px;color:#b8872c;letter-spacing:0.25px">D: 0, F: 1, 504 bytes</div><div class="t" style="right:27px;top:752px;color:#921616;letter-spacing:0.25px">D: 0, F: 0, 0 bytes</div><div class="t" style="right:27px;top:782px;color:#921616;letter-spacing:0.25px">64 KB</div><div class="t" style="right:27px;top:812px;color:#921616;letter-spacing:0.25px">512 KB</div><div class="t" style="right:27px;top:842px;color:#921616;letter-spacing:0.25px">512 KB</div><div class="t" style="right:27px;top:872px;color:#222222;letter-spacing:0.25px">2 MB</div><div class="t" style="right:27px;top:902px;color:#921616;letter-spacing:0.25px">D: 0, F: 0, 0 bytes</div><div class="t" style="right:27px;top:932px;color:#b8872c;letter-spacing:0.25px">D: 17, F: 149, 38 MB</div><div class="a" style="left:920px;top:62px;width:20px;height:24px;border:1px solid #6e6048;border-radius:8px;background:#dccba8"></div><svg class="a" style="left:925px;top:71px" width="10" height="6"><path d="M0,5.5 H10 L5,0.5 Z" fill="#222222"/></svg><div class="a" style="left:920px;top:87px;width:20px;height:548px;border:1px solid #6e6048;border-radius:8px;background:#dccba8"></div><div class="a" style="left:920px;top:942px;width:20px;height:24px;border:1px solid #6e6048;border-radius:8px;background:#dccba8"></div><svg class="a" style="left:925px;top:951px" width="10" height="6"><path d="M0,0.5 H10 L5,5.5 Z" fill="#222222"/></svg><div class="a" style="left:0px;top:968px;width:942px;height:1px;background:#6e6048;"></div><div class="a" style="left:0px;top:969px;width:942px;height:29px;background:#dccba8;"></div><svg style="position:absolute;left:12px;top:976px;" width="23" height="18" viewBox="0 0 23 18"><path d="M1,2 C1,1.3 1.3,1 2,1 H8 L10,3.5 H21 C21.7,3.5 22,3.8 22,4.5 V16 C22,16.7 21.7,17 21,17 H2 C1.3,17 1,16.7 1,16 Z" fill="none" stroke="#222222" stroke-width="1.5"/></svg><div class="t" style="left:40px;top:969px;height:28px;line-height:28px;color:#b8872c;letter-spacing:0.3px"><span style="letter-spacing:0">35</span>/<span style="letter-spacing:0">35</span></div><svg style="position:absolute;left:87px;top:974px;" width="15" height="20" viewBox="0 0 15 20"><path d="M1,1 H10 L14,5 V19 H1 Z M10,1 V5 H14" fill="none" stroke="#222222" stroke-width="1.5"/></svg><div class="t" style="left:109px;top:969px;height:28px;line-height:28px;color:#222222;letter-spacing:0.3px"><span style="letter-spacing:0">12</span>/<span style="letter-spacing:0">12</span></div><svg style="position:absolute;left:158px;top:975px;" width="17" height="17" viewBox="0 0 17 17"><circle cx="8.5" cy="8.5" r="7.5" fill="none" stroke="#222222" stroke-width="1.5"/><path d="M8.5,3.5 V8.5 L11.5,12" fill="none" stroke="#222222" stroke-width="1.5"/></svg><div class="t" style="left:180px;top:969px;height:28px;line-height:28px;color:#222222;letter-spacing:0.3px"><span style="letter-spacing:0">0</span>.<span style="letter-spacing:0">00</span> sec</div><div class="a" style="left:371px;top:971px;width:199px;height:25px;border:1px solid #6e6048;border-radius:7px;background:#ede0bb"></div></div><div class="a" style="left:983px;top:270px;width:942px;height:998px;border-radius:7px;border:1px solid #6e6048"></div><div class="a" style="left:1229px;top:327px;width:225px;height:606px;box-shadow:8px 8px 16px rgba(60,45,20,0.45)"></div><div class="a" style="left:1229px;top:327px;width:225px;height:606px;background:#f5e8c8;border:1px solid #6e6048;border-radius:7px;overflow:hidden"><div class="a" style="left:0px;top:0px;width:225px;height:30px;background:#ecdcb6;"></div><div class="a" style="left:5px;top:6px;width:1px;height:20px;background:#222222;"></div><div class="a" style="left:0px;top:30px;width:225px;height:1px;background:#6e6048;"></div><div class="a" style="left:8px;top:61px;width:215px;height:1px;background:#eadab6;"></div><div class="a" style="left:8px;top:91px;width:215px;height:1px;background:#eadab6;"></div><div class="a" style="left:8px;top:121px;width:215px;height:1px;background:#eadab6;"></div><div class="a" style="left:8px;top:151px;width:215px;height:1px;background:#eadab6;"></div><div class="a" style="left:8px;top:181px;width:215px;height:1px;background:#eadab6;"></div><div class="a" style="left:8px;top:211px;width:215px;height:1px;background:#eadab6;"></div><div class="a" style="left:8px;top:241px;width:215px;height:1px;background:#eadab6;"></div><div class="a" style="left:8px;top:271px;width:215px;height:1px;background:#eadab6;"></div><div class="a" style="left:8px;top:301px;width:215px;height:1px;background:#eadab6;"></div><div class="a" style="left:8px;top:331px;width:215px;height:1px;background:#eadab6;"></div><div class="a" style="left:8px;top:361px;width:215px;height:1px;background:#eadab6;"></div><div class="a" style="left:8px;top:391px;width:215px;height:1px;background:#eadab6;"></div><div class="a" style="left:8px;top:421px;width:215px;height:1px;background:#eadab6;"></div><div class="a" style="left:8px;top:451px;width:215px;height:1px;background:#eadab6;"></div><div class="a" style="left:8px;top:481px;width:215px;height:1px;background:#eadab6;"></div><div class="a" style="left:8px;top:511px;width:215px;height:1px;background:#eadab6;"></div><div class="a" style="left:8px;top:541px;width:215px;height:1px;background:#eadab6;"></div><div class="a" style="left:8px;top:571px;width:215px;height:1px;background:#eadab6;"></div><div class="a" style="left:8px;top:601px;width:215px;height:1px;background:#eadab6;"></div><svg style="position:absolute;left:8px;top:37px;" width="14" height="17" viewBox="0 0 14 17"><path d="M0.5,0.5 H11.5 V9.5 H13.5 V16.5 H0.5 Z" fill="#fbe38e" stroke="#e3b94a" stroke-width="1"/><path d="M1,1 H11 V10 H13 V16 H1 Z" fill="url(#gfold)"/><path d="M10.5,10 V16" stroke="#e3b94a" stroke-width="1"/></svg><div class="t" style="left:28px;top:31px;height:30px;line-height:30px;color:#b8872c;">Program Files</div><svg style="position:absolute;left:8px;top:67px;" width="14" height="17" viewBox="0 0 14 17"><path d="M0.5,0.5 H11.5 V9.5 H13.5 V16.5 H0.5 Z" fill="#fbe38e" stroke="#e3b94a" stroke-width="1"/><path d="M1,1 H11 V10 H13 V16 H1 Z" fill="url(#gfold)"/><path d="M10.5,10 V16" stroke="#e3b94a" stroke-width="1"/></svg><div class="t" style="left:28px;top:61px;height:30px;line-height:30px;color:#b8872c;">Windows</div><svg style="position:absolute;left:8px;top:97px;" width="14" height="17" viewBox="0 0 14 17"><path d="M0.5,0.5 H11.5 V9.5 H13.5 V16.5 H0.5 Z" fill="#fbe38e" stroke="#e3b94a" stroke-width="1"/><path d="M1,1 H11 V10 H13 V16 H1 Z" fill="url(#gfold)"/><path d="M10.5,10 V16" stroke="#e3b94a" stroke-width="1"/></svg><div class="t" style="left:28px;top:91px;height:30px;line-height:30px;color:#b8872c;">Users</div><svg style="position:absolute;left:8px;top:127px;" width="14" height="17" viewBox="0 0 14 17"><path d="M0.5,0.5 H11.5 V9.5 H13.5 V16.5 H0.5 Z" fill="#fbe38e" stroke="#e3b94a" stroke-width="1"/><path d="M1,1 H11 V10 H13 V16 H1 Z" fill="url(#gfold)"/><path d="M10.5,10 V16" stroke="#e3b94a" stroke-width="1"/></svg><div class="t" style="left:28px;top:121px;height:30px;line-height:30px;color:#b8872c;">Program Files (x<span style="letter-spacing:0">86</span>)</div><svg style="position:absolute;left:8px;top:157px;" width="14" height="17" viewBox="0 0 14 17"><path d="M0.5,0.5 H11.5 V9.5 H13.5 V16.5 H0.5 Z" fill="#fbe38e" stroke="#e3b94a" stroke-width="1"/><path d="M1,1 H11 V10 H13 V16 H1 Z" fill="url(#gfold)"/><path d="M10.5,10 V16" stroke="#e3b94a" stroke-width="1"/></svg><div class="t" style="left:28px;top:151px;height:30px;line-height:30px;color:#921616;">$Recycle.Bin</div><svg style="position:absolute;left:8px;top:187px;" width="14" height="17" viewBox="0 0 14 17"><path d="M0.5,0.5 H11.5 V9.5 H13.5 V16.5 H0.5 Z" fill="#fbe38e" stroke="#e3b94a" stroke-width="1"/><path d="M1,1 H11 V10 H13 V16 H1 Z" fill="url(#gfold)"/><path d="M10.5,10 V16" stroke="#e3b94a" stroke-width="1"/></svg><div class="t" style="left:28px;top:181px;height:30px;line-height:30px;color:#b8872c;">$WinREAgent</div><svg style="position:absolute;left:8px;top:217px;" width="14" height="17" viewBox="0 0 14 17"><path d="M0.5,0.5 H11.5 V9.5 H13.5 V16.5 H0.5 Z" fill="#fbe38e" stroke="#e3b94a" stroke-width="1"/><path d="M1,1 H11 V10 H13 V16 H1 Z" fill="url(#gfold)"/><path d="M10.5,10 V16" stroke="#e3b94a" stroke-width="1"/></svg><div class="t" style="left:28px;top:211px;height:30px;line-height:30px;color:#921616;">Documents and Settings</div><div class="a" style="left:2px;top:242px;width:221px;height:29px;background:#4b8963;"></div><svg style="position:absolute;left:8px;top:247px;" width="14" height="17" viewBox="0 0 14 17"><path d="M0.5,0.5 H11.5 V9.5 H13.5 V16.5 H0.5 Z" fill="#fbe38e" stroke="#e3b94a" stroke-width="1"/><path d="M1,1 H11 V10 H13 V16 H1 Z" fill="url(#gfold)"/><path d="M10.5,10 V16" stroke="#e3b94a" stroke-width="1"/></svg><div class="t" style="left:28px;top:241px;height:30px;line-height:30px;color:#222222;">Downloads</div><svg style="position:absolute;left:8px;top:277px;" width="13" height="17" viewBox="0 0 13 17"><path d="M0.5,0.5 H9 L12.5,4 V16.5 H0.5 Z" fill="#f8f8f8" stroke="#8a8a8a" stroke-width="1"/><path d="M9,0.5 V4 H12.5" fill="none" stroke="#8a8a8a" stroke-width="1"/></svg><div class="t" style="left:28px;top:271px;height:30px;line-height:30px;color:#921616;">DumpStack.log.tmp</div><svg style="position:absolute;left:8px;top:307px;" width="14" height="17" viewBox="0 0 14 17"><path d="M0.5,0.5 H11.5 V9.5 H13.5 V16.5 H0.5 Z" fill="#fbe38e" stroke="#e3b94a" stroke-width="1"/><path d="M1,1 H11 V10 H13 V16 H1 Z" fill="url(#gfold)"/><path d="M10.5,10 V16" stroke="#e3b94a" stroke-width="1"/></svg><div class="t" style="left:28px;top:301px;height:30px;line-height:30px;color:#b8872c;">PerfLogs</div><svg style="position:absolute;left:8px;top:337px;" width="14" height="17" viewBox="0 0 14 17"><path d="M0.5,0.5 H11.5 V9.5 H13.5 V16.5 H0.5 Z" fill="#fbe38e" stroke="#e3b94a" stroke-width="1"/><path d="M1,1 H11 V10 H13 V16 H1 Z" fill="url(#gfold)"/><path d="M10.5,10 V16" stroke="#e3b94a" stroke-width="1"/></svg><div class="t" style="left:28px;top:331px;height:30px;line-height:30px;color:#b8872c;">ProgramData</div><svg style="position:absolute;left:8px;top:367px;" width="14" height="17" viewBox="0 0 14 17"><path d="M0.5,0.5 H11.5 V9.5 H13.5 V16.5 H0.5 Z" fill="#fbe38e" stroke="#e3b94a" stroke-width="1"/><path d="M1,1 H11 V10 H13 V16 H1 Z" fill="url(#gfold)"/><path d="M10.5,10 V16" stroke="#e3b94a" stroke-width="1"/></svg><div class="t" style="left:28px;top:361px;height:30px;line-height:30px;color:#b8872c;">QMK_MSYS</div><svg style="position:absolute;left:8px;top:397px;" width="14" height="17" viewBox="0 0 14 17"><path d="M0.5,0.5 H11.5 V9.5 H13.5 V16.5 H0.5 Z" fill="#fbe38e" stroke="#e3b94a" stroke-width="1"/><path d="M1,1 H11 V10 H13 V16 H1 Z" fill="url(#gfold)"/><path d="M10.5,10 V16" stroke="#e3b94a" stroke-width="1"/></svg><div class="t" style="left:28px;top:391px;height:30px;line-height:30px;color:#921616;">Recovery</div><svg style="position:absolute;left:8px;top:427px;" width="14" height="17" viewBox="0 0 14 17"><path d="M0.5,0.5 H11.5 V9.5 H13.5 V16.5 H0.5 Z" fill="#fbe38e" stroke="#e3b94a" stroke-width="1"/><path d="M1,1 H11 V10 H13 V16 H1 Z" fill="url(#gfold)"/><path d="M10.5,10 V16" stroke="#e3b94a" stroke-width="1"/></svg><div class="t" style="left:28px;top:421px;height:30px;line-height:30px;color:#b8872c;">SWTOOLS</div><svg style="position:absolute;left:8px;top:457px;" width="14" height="17" viewBox="0 0 14 17"><path d="M0.5,0.5 H11.5 V9.5 H13.5 V16.5 H0.5 Z" fill="#fbe38e" stroke="#e3b94a" stroke-width="1"/><path d="M1,1 H11 V10 H13 V16 H1 Z" fill="url(#gfold)"/><path d="M10.5,10 V16" stroke="#e3b94a" stroke-width="1"/></svg><div class="t" style="left:28px;top:451px;height:30px;line-height:30px;color:#921616;">System Volume Information</div><svg style="position:absolute;left:8px;top:487px;" width="13" height="17" viewBox="0 0 13 17"><path d="M0.5,0.5 H9 L12.5,4 V16.5 H0.5 Z" fill="#f8f8f8" stroke="#8a8a8a" stroke-width="1"/><path d="M9,0.5 V4 H12.5" fill="none" stroke="#8a8a8a" stroke-width="1"/></svg><div class="t" style="left:28px;top:481px;height:30px;line-height:30px;color:#921616;">bootTel.dat</div><svg style="position:absolute;left:8px;top:517px;" width="13" height="17" viewBox="0 0 13 17"><path d="M0.5,0.5 H9 L12.5,4 V16.5 H0.5 Z" fill="#f4f4f4" stroke="#8a8a8a" stroke-width="1"/><circle cx="6.5" cy="9" r="3" fill="none" stroke="#8a8a8a" stroke-width="1.2"/><path d="M8.5,11 L11,13.5" stroke="#8a8a8a" stroke-width="1.2"/></svg><div class="t" style="left:28px;top:511px;height:30px;line-height:30px;color:#921616;">hiberfil.sys</div><svg style="position:absolute;left:8px;top:547px;" width="13" height="17" viewBox="0 0 13 17"><path d="M0.5,0.5 H9 L12.5,4 V16.5 H0.5 Z" fill="#f4f4f4" stroke="#8a8a8a" stroke-width="1"/><circle cx="6.5" cy="9" r="3" fill="none" stroke="#8a8a8a" stroke-width="1.2"/><path d="M8.5,11 L11,13.5" stroke="#8a8a8a" stroke-width="1.2"/></svg><div class="t" style="left:28px;top:541px;height:30px;line-height:30px;color:#921616;">pagefile.sys</div><svg style="position:absolute;left:8px;top:577px;" width="13" height="17" viewBox="0 0 13 17"><path d="M0.5,0.5 H9 L12.5,4 V16.5 H0.5 Z" fill="#f4f4f4" stroke="#8a8a8a" stroke-width="1"/><circle cx="6.5" cy="9" r="3" fill="none" stroke="#8a8a8a" stroke-width="1.2"/><path d="M8.5,11 L11,13.5" stroke="#8a8a8a" stroke-width="1.2"/></svg><div class="t" style="left:28px;top:571px;height:30px;line-height:30px;color:#921616;">swapfile.sys</div></div><div class="a dk" style="left:1364px;top:381px;width:942px;height:998px;border-radius:7px;overflow:hidden;background:#35342f"><div class="a" style="left:0px;top:0px;width:942px;height:30px;background:#35342f;"></div><div class="a" style="left:5px;top:-2px;width:146px;height:30px;background:#2c3e47;border:1px solid #5e6e74;border-radius:0 0 8px 8px"></div><svg style="position:absolute;left:9px;top:5px;" width="15" height="16" viewBox="0 0 15 16"><path d="M4.5,0 H10.5 V7 H15 L7.5,16 L0,7 H4.5 Z" fill="url(#gblue)"/></svg><div class="t" style="left:30px;top:-1px;height:28px;line-height:28px;color:#ffffff;">Downloads</div><svg style="position:absolute;left:124px;top:8px;" width="10" height="10" viewBox="0 0 10 10"><path d="M0.5,0.5 L9.5,9.5 M9.5,0.5 L0.5,9.5" stroke="#ffffff" stroke-width="0.9"/></svg><div class="a" style="left:155px;top:-2px;width:146px;height:30px;background:#f5957a;border-radius:0 0 8px 8px"></div><svg style="position:absolute;left:159px;top:4px;" width="16" height="16" viewBox="0 0 16 16"><path d="M1.5,16 C1,12.5 2,10 5,9.2 L9.5,9.4 C12.5,10.2 14,12.5 13.5,16.5 Z" fill="#3d9266"/><path d="M9.5,9.4 C12.5,10.2 14,12.5 13.5,16.5 L10,16 C11,13 10.5,11 9.5,9.4 Z" fill="#2f7a52"/><path d="M5.2,9.3 L6.5,13.5 L8.5,9.4 Z" fill="#e6f4ea"/><ellipse cx="7" cy="5.2" rx="3.4" ry="3.9" fill="#c8916c"/><path d="M9.5,3 C10.5,4.5 10.3,7 9.2,8.5 C10.8,7.5 11.2,4 10,2.2 Z" fill="#8a5a40"/><path d="M3.6,5 C3.2,1.8 5,0.3 7.2,0.3 C9.8,0.3 11,2.2 10.6,5.2 C10,3.2 8.8,2.6 7.2,2.6 C5.6,2.6 4.4,3.3 3.6,5 Z" fill="#2e2826"/></svg><div class="t" style="left:180px;top:-1px;height:28px;line-height:28px;color:#fff0ea;">Vjekoslav</div><svg style="position:absolute;left:274px;top:8px;" width="10" height="10" viewBox="0 0 10 10"><path d="M0.5,0.5 L9.5,9.5 M9.5,0.5 L0.5,9.5" stroke="#fff0ea" stroke-width="0.9"/></svg><svg class="a" style="left:314px;top:9px" width="10" height="10"><path d="M5,1 V9 M1,5 H9" stroke="#ffffff" stroke-width="1.1"/></svg><div class="a" style="left:823px;top:19px;width:11px;height:1.2px;background:#ffffff;"></div><svg class="a" style="left:868px;top:9px" width="12" height="12"><rect x="1" y="1" width="10" height="10" fill="none" stroke="#ffffff" stroke-width="1.3"/></svg><svg style="position:absolute;left:912px;top:9px;" width="13" height="13" viewBox="0 0 13 13"><path d="M0.5,0.5 L12.5,12.5 M12.5,0.5 L0.5,12.5" stroke="#ffffff" stroke-width="1.0"/></svg><div class="a" style="left:0px;top:30px;width:942px;height:1px;background:#6d6c66;"></div><div class="a" style="left:0px;top:31px;width:942px;height:28px;background:#2c3e47;"></div><svg style="position:absolute;left:10px;top:39px;" width="12" height="12" viewBox="0 0 12 12"><path d="M0.5,3.5 L4.5,0.5 V6.5 Z" fill="#6a8794"/><path d="M4,3.5 H10.5 V10.5 H4" fill="none" stroke="#6a8794" stroke-width="1.3"/></svg><svg style="position:absolute;left:45px;top:39px;" width="12" height="12" viewBox="0 0 12 12"><path d="M11.5,3.5 L7.5,0.5 V6.5 Z" fill="#6a8794"/><path d="M8,3.5 H1.5 V10.5 H8" fill="none" stroke="#6a8794" stroke-width="1.3"/></svg><svg style="position:absolute;left:80px;top:43px;" width="12" height="6" viewBox="0 0 12 6"><path d="M0,0 H12 L6.0,6 Z" fill="#6a8794"/></svg><svg style="position:absolute;left:118px;top:39px;" width="8" height="12" viewBox="0 0 8 12"><path d="M4,0 L8,5 H5.5 V12 H2.5 V5 H0 Z" fill="#ffffff"/></svg><div class="a" style="left:141px;top:32px;width:1px;height:27px;background:#6d6c66;"></div><div class="t" style="left:155px;top:31px;height:28px;line-height:28px;color:#ffffff;">This PC</div><svg style="position:absolute;left:229px;top:40px;" width="5" height="10" viewBox="0 0 5 10"><path d="M0,0 L5,5 L0,10 Z" fill="#ffffff"/></svg><div class="t" style="left:251px;top:31px;height:28px;line-height:28px;color:#ffffff;">Windows <span style="letter-spacing:0">10</span> (C:)</div><svg style="position:absolute;left:383px;top:40px;" width="5" height="10" viewBox="0 0 5 10"><path d="M0,0 L5,5 L0,10 Z" fill="#ffffff"/></svg><div class="t" style="left:406px;top:31px;height:28px;line-height:28px;color:#ffffff;">Users</div><svg style="position:absolute;left:464px;top:40px;" width="5" height="10" viewBox="0 0 5 10"><path d="M0,0 L5,5 L0,10 Z" fill="#ffffff"/></svg><div class="t" style="left:486px;top:31px;height:28px;line-height:28px;color:#ffffff;">Vjekoslav</div><div class="a" style="left:0px;top:59px;width:942px;height:1px;background:#6d6c66;"></div><div class="a" style="left:0px;top:91px;width:920px;height:1px;background:#3f3e39;"></div><div class="a" style="left:0px;top:121px;width:920px;height:1px;background:#3f3e39;"></div><div class="a" style="left:0px;top:151px;width:920px;height:1px;background:#3f3e39;"></div><div class="a" style="left:0px;top:181px;width:920px;height:1px;background:#3f3e39;"></div><div class="a" style="left:0px;top:211px;width:920px;height:1px;background:#3f3e39;"></div><div class="a" style="left:0px;top:241px;width:920px;height:1px;background:#3f3e39;"></div><div class="a" style="left:0px;top:271px;width:920px;height:1px;background:#3f3e39;"></div><div class="a" style="left:0px;top:301px;width:920px;height:1px;background:#3f3e39;"></div><div class="a" style="left:0px;top:331px;width:920px;height:1px;background:#3f3e39;"></div><div class="a" style="left:0px;top:361px;width:920px;height:1px;background:#3f3e39;"></div><div class="a" style="left:0px;top:391px;width:920px;height:1px;background:#3f3e39;"></div><div class="a" style="left:0px;top:421px;width:920px;height:1px;background:#3f3e39;"></div><div class="a" style="left:0px;top:451px;width:920px;height:1px;background:#3f3e39;"></div><div class="a" style="left:0px;top:481px;width:920px;height:1px;background:#3f3e39;"></div><div class="a" style="left:0px;top:511px;width:920px;height:1px;background:#3f3e39;"></div><div class="a" style="left:0px;top:541px;width:920px;height:1px;background:#3f3e39;"></div><div class="a" style="left:0px;top:571px;width:920px;height:1px;background:#3f3e39;"></div><div class="a" style="left:0px;top:601px;width:920px;height:1px;background:#3f3e39;"></div><div class="a" style="left:0px;top:631px;width:920px;height:1px;background:#3f3e39;"></div><div class="a" style="left:0px;top:661px;width:920px;height:1px;background:#3f3e39;"></div><div class="a" style="left:0px;top:691px;width:920px;height:1px;background:#3f3e39;"></div><div class="a" style="left:0px;top:721px;width:920px;height:1px;background:#3f3e39;"></div><div class="a" style="left:0px;top:751px;width:920px;height:1px;background:#3f3e39;"></div><div class="a" style="left:0px;top:781px;width:920px;height:1px;background:#3f3e39;"></div><div class="a" style="left:0px;top:811px;width:920px;height:1px;background:#3f3e39;"></div><div class="a" style="left:0px;top:841px;width:920px;height:1px;background:#3f3e39;"></div><div class="a" style="left:0px;top:871px;width:920px;height:1px;background:#3f3e39;"></div><div class="a" style="left:0px;top:901px;width:920px;height:1px;background:#3f3e39;"></div><div class="a" style="left:0px;top:931px;width:920px;height:1px;background:#3f3e39;"></div><div class="a" style="left:0px;top:961px;width:920px;height:1px;background:#3f3e39;"></div><svg style="position:absolute;left:16px;top:69px;" width="17" height="13" viewBox="0 0 17 13"><rect x="0.5" y="0.5" width="16" height="12" fill="#1aa0f0" stroke="#0a5a9a" stroke-width="1"/><path d="M2,11 L14,2" stroke="#5cc0ff" stroke-width="2" opacity="0.5"/><rect x="1" y="9.5" width="15" height="2.5" fill="#0a6ab8"/><rect x="2" y="10.5" width="1" height="1" fill="#fff"/><rect x="13" y="10.5" width="1" height="1" fill="#fff"/><rect x="15" y="10.5" width="0.8" height="1" fill="#fff"/></svg><div class="t" style="left:37px;top:62px;height:30px;line-height:30px;color:#72aee0"><span style="position:relative">Desktop<span style="position:absolute;left:-1px;right:-1px;top:15px;height:2px;background:#f5957a"></span></span></div><svg style="position:absolute;left:6px;top:98px;" width="15" height="16" viewBox="0 0 15 16"><path d="M4.5,0 H10.5 V7 H15 L7.5,16 L0,7 H4.5 Z" fill="url(#gblue)"/></svg><div class="t" style="left:27px;top:92px;color:#72aee0">Downloads</div><svg style="position:absolute;left:7px;top:128px;" width="14" height="17" viewBox="0 0 14 17"><path d="M0.5,0.5 H11.5 V9.5 H13.5 V16.5 H0.5 Z" fill="#fbe38e" stroke="#e3b94a" stroke-width="1"/><path d="M1,1 H11 V10 H13 V16 H1 Z" fill="url(#gfold)"/><path d="M10.5,10 V16" stroke="#e3b94a" stroke-width="1"/></svg><div class="t" style="left:27px;top:122px;color:#72aee0">Apps</div><svg style="position:absolute;left:7px;top:158px;" width="14" height="17" viewBox="0 0 14 17"><path d="M0.5,0.5 H11.5 V9.5 H13.5 V16.5 H0.5 Z" fill="#fbe38e" stroke="#e3b94a" stroke-width="1"/><path d="M1,1 H11 V10 H13 V16 H1 Z" fill="url(#gfold)"/><path d="M10.5,10 V16" stroke="#e3b94a" stroke-width="1"/></svg><div class="t" style="left:27px;top:152px;color:#72aee0">AppData</div><svg style="position:absolute;left:7px;top:188px;" width="14" height="17" viewBox="0 0 14 17"><path d="M0.5,0.5 H11.5 V9.5 H13.5 V16.5 H0.5 Z" fill="#fbe38e" stroke="#e3b94a" stroke-width="1"/><path d="M1,1 H11 V10 H13 V16 H1 Z" fill="url(#gfold)"/><path d="M10.5,10 V16" stroke="#e3b94a" stroke-width="1"/></svg><div class="t" style="left:27px;top:182px;color:#72aee0">.config</div><svg style="position:absolute;left:6px;top:218px;" width="16" height="16" viewBox="0 0 16 16"><path d="M8,0.5 L10.2,5.6 L15.5,6 L11.4,9.5 L12.7,15 L8,12 L3.3,15 L4.6,9.5 L0.5,6 L5.8,5.6 Z" fill="#f8b040" stroke="#d88a20" stroke-width="0.8"/></svg><div class="t" style="left:27px;top:212px;color:#72aee0">Favorites</div><svg style="position:absolute;left:7px;top:248px;" width="14" height="17" viewBox="0 0 14 17"><path d="M0.5,0.5 H11.5 V9.5 H13.5 V16.5 H0.5 Z" fill="#fbe38e" stroke="#e3b94a" stroke-width="1"/><path d="M1,1 H11 V10 H13 V16 H1 Z" fill="url(#gfold)"/><path d="M10.5,10 V16" stroke="#e3b94a" stroke-width="1"/></svg><div class="t" style="left:27px;top:242px;color:#72aee0">.VirtualBox</div><svg style="position:absolute;left:7px;top:278px;" width="13" height="17" viewBox="0 0 13 17"><path d="M0.5,0.5 H9 L12.5,4 V16.5 H0.5 Z" fill="#f4f4f4" stroke="#7a7a7a" stroke-width="1"/><rect x="2.5" y="5" width="7" height="7" fill="#3d6e4a"/><path d="M3.5,11 L8.5,6" stroke="#e0e0e0" stroke-width="1.2"/></svg><div class="t" style="left:27px;top:272px;color:#ffffff">.bash_history</div><svg style="position:absolute;left:7px;top:308px;" width="13" height="17" viewBox="0 0 13 17"><path d="M0.5,0.5 H9 L12.5,4 V16.5 H0.5 Z" fill="#f4f4f4" stroke="#7a7a7a" stroke-width="1"/><rect x="2.5" y="5" width="7" height="7" fill="#3d6e4a"/><path d="M3.5,11 L8.5,6" stroke="#e0e0e0" stroke-width="1.2"/></svg><div class="t" style="left:27px;top:302px;color:#ffffff">.gitconfig</div><svg style="position:absolute;left:7px;top:338px;" width="13" height="17" viewBox="0 0 13 17"><path d="M0.5,0.5 H9 L12.5,4 V16.5 H0.5 Z" fill="#f4f4f4" stroke="#7a7a7a" stroke-width="1"/><rect x="2.5" y="5" width="7" height="7" fill="#3d6e4a"/><path d="M3.5,11 L8.5,6" stroke="#e0e0e0" stroke-width="1.2"/></svg><div class="t" style="left:27px;top:332px;color:#ffffff">.lesshst</div><svg style="position:absolute;left:7px;top:368px;" width="13" height="17" viewBox="0 0 13 17"><path d="M0.5,0.5 H9 L12.5,4 V16.5 H0.5 Z" fill="#f8f8f8" stroke="#8a8a8a" stroke-width="1"/><path d="M9,0.5 V4 H12.5" fill="none" stroke="#8a8a8a" stroke-width="1"/></svg><div class="t" style="left:27px;top:362px;color:#ffffff">.minttyrc</div><svg style="position:absolute;left:7px;top:398px;" width="14" height="17" viewBox="0 0 14 17"><path d="M0.5,0.5 H11.5 V9.5 H13.5 V16.5 H0.5 Z" fill="#fbe38e" stroke="#e3b94a" stroke-width="1"/><path d="M1,1 H11 V10 H13 V16 H1 Z" fill="url(#gfold)"/><path d="M10.5,10 V16" stroke="#e3b94a" stroke-width="1"/></svg><div class="t" style="left:27px;top:392px;color:#72aee0">.obs<span style="letter-spacing:0">64</span></div><svg style="position:absolute;left:7px;top:428px;" width="14" height="17" viewBox="0 0 14 17"><path d="M0.5,0.5 H11.5 V9.5 H13.5 V16.5 H0.5 Z" fill="#fbe38e" stroke="#e3b94a" stroke-width="1"/><path d="M1,1 H11 V10 H13 V16 H1 Z" fill="url(#gfold)"/><path d="M10.5,10 V16" stroke="#e3b94a" stroke-width="1"/></svg><div class="t" style="left:27px;top:422px;color:#72aee0">.openjfx</div><svg style="position:absolute;left:7px;top:458px;" width="14" height="17" viewBox="0 0 14 17"><path d="M0.5,0.5 H11.5 V9.5 H13.5 V16.5 H0.5 Z" fill="#fbe38e" stroke="#e3b94a" stroke-width="1"/><path d="M1,1 H11 V10 H13 V16 H1 Z" fill="url(#gfold)"/><path d="M10.5,10 V16" stroke="#e3b94a" stroke-width="1"/></svg><div class="t" style="left:27px;top:452px;color:#72aee0">.openshot_qt</div><svg style="position:absolute;left:7px;top:488px;" width="14" height="17" viewBox="0 0 14 17"><path d="M0.5,0.5 H11.5 V9.5 H13.5 V16.5 H0.5 Z" fill="#fbe38e" stroke="#e3b94a" stroke-width="1"/><path d="M1,1 H11 V10 H13 V16 H1 Z" fill="url(#gfold)"/><path d="M10.5,10 V16" stroke="#e3b94a" stroke-width="1"/></svg><div class="t" style="left:27px;top:482px;color:#72aee0">.ssh</div><svg style="position:absolute;left:7px;top:518px;" width="14" height="17" viewBox="0 0 14 17"><path d="M0.5,0.5 H11.5 V9.5 H13.5 V16.5 H0.5 Z" fill="#fbe38e" stroke="#e3b94a" stroke-width="1"/><path d="M1,1 H11 V10 H13 V16 H1 Z" fill="url(#gfold)"/><path d="M10.5,10 V16" stroke="#e3b94a" stroke-width="1"/></svg><div class="t" style="left:27px;top:512px;color:#f26a6a">Application Data</div><div class="t" style="left:27px;top:512px;height:30px;line-height:30px;color:transparent">Application Data<span style="color:#8a9ca2;padding-left:9px">-&gt; C:\Users\Vjekoslav\AppData\Roaming</span></div><svg style="position:absolute;left:7px;top:548px;" width="14" height="17" viewBox="0 0 14 17"><path d="M0.5,0.5 H11.5 V9.5 H13.5 V16.5 H0.5 Z" fill="#fbe38e" stroke="#e3b94a" stroke-width="1"/><path d="M1,1 H11 V10 H13 V16 H1 Z" fill="url(#gfold)"/><path d="M10.5,10 V16" stroke="#e3b94a" stroke-width="1"/></svg><div class="t" style="left:27px;top:542px;color:#f26a6a">Cookies</div><div class="t" style="left:27px;top:542px;height:30px;line-height:30px;color:transparent">Cookies<span style="color:#8a9ca2;padding-left:9px">-&gt; C:\Users\Vjekoslav\AppData\Local\Microsoft\Windows\INetCookies</span></div><svg style="position:absolute;left:7px;top:578px;" width="13" height="17" viewBox="0 0 13 17"><path d="M0.5,0.5 H9 L12.5,4 V16.5 H0.5 Z" fill="#f8f8f8" stroke="#6a7a8a" stroke-width="1"/><path d="M2.5,5.5 H10 M2.5,8 H10 M2.5,10.5 H10 M2.5,13 H10" stroke="#3a8ad0" stroke-width="1.2"/></svg><div class="t" style="left:27px;top:572px;color:#72aee0">Documents</div><svg style="position:absolute;left:6px;top:609px;" width="16" height="15" viewBox="0 0 16 15"><path d="M4,1 L8,3.5 L4,6 L0,3.5 Z M12,1 L16,3.5 L12,6 L8,3.5 Z M4,6 L8,8.5 L4,11 L0,8.5 Z M12,6 L16,8.5 L12,11 L8,8.5 Z M4,12 L8,9.8 L12,12 L8,14.5 Z" fill="#2060e0"/></svg><div class="t" style="left:27px;top:602px;color:#72aee0">Dropbox</div><svg style="position:absolute;left:7px;top:638px;" width="14" height="17" viewBox="0 0 14 17"><path d="M0.5,0.5 H11.5 V9.5 H13.5 V16.5 H0.5 Z" fill="#fbe38e" stroke="#e3b94a" stroke-width="1"/><path d="M1,1 H11 V10 H13 V16 H1 Z" fill="url(#gfold)"/><path d="M10.5,10 V16" stroke="#e3b94a" stroke-width="1"/></svg><div class="t" style="left:27px;top:632px;color:#72aee0">Eksterni</div><svg style="position:absolute;left:6px;top:668px;" width="16" height="16" viewBox="0 0 16 16"><path d="M2,16 C1,9 4,6 9,6 V2 L15,8 L9,13 V9.5 C6,9.5 3.5,11 2,16 Z" fill="#3090e0"/></svg><div class="t" style="left:27px;top:662px;color:#72aee0">Links</div><svg style="position:absolute;left:7px;top:698px;" width="14" height="17" viewBox="0 0 14 17"><path d="M0.5,0.5 H11.5 V9.5 H13.5 V16.5 H0.5 Z" fill="#fbe38e" stroke="#e3b94a" stroke-width="1"/><path d="M1,1 H11 V10 H13 V16 H1 Z" fill="url(#gfold)"/><path d="M10.5,10 V16" stroke="#e3b94a" stroke-width="1"/></svg><div class="t" style="left:27px;top:692px;color:#f26a6a">Local Settings</div><div class="t" style="left:27px;top:692px;height:30px;line-height:30px;color:transparent">Local Settings<span style="color:#8a9ca2;padding-left:9px">-&gt; C:\Users\Vjekoslav\AppData\Local</span></div><svg style="position:absolute;left:8px;top:728px;" width="12" height="16" viewBox="0 0 12 16"><path d="M6,1 V12" stroke="#2e9ae8" stroke-width="2"/><ellipse cx="3.5" cy="12.5" rx="3.5" ry="2.8" fill="#2e9ae8"/><path d="M6,1 C9,3 11,5 10,9 C10,6 8,5 6,5" fill="#2e9ae8"/></svg><div class="t" style="left:27px;top:722px;color:#72aee0">Music</div><svg style="position:absolute;left:7px;top:758px;" width="13" height="17" viewBox="0 0 13 17"><path d="M0.5,0.5 H9 L12.5,4 V16.5 H0.5 Z" fill="#f8f8f8" stroke="#6a7a8a" stroke-width="1"/><path d="M2.5,5.5 H10 M2.5,8 H10 M2.5,10.5 H10 M2.5,13 H10" stroke="#3a8ad0" stroke-width="1.2"/></svg><div class="t" style="left:27px;top:752px;color:#f26a6a">My Documents</div><div class="t" style="left:27px;top:752px;height:30px;line-height:30px;color:transparent">My Documents<span style="color:#8a9ca2;padding-left:9px">-&gt; C:\Users\Vjekoslav\Documents</span></div><svg style="position:absolute;left:7px;top:788px;" width="13" height="17" viewBox="0 0 13 17"><path d="M0.5,0.5 H9 L12.5,4 V16.5 H0.5 Z" fill="#f8f8f8" stroke="#8a8a8a" stroke-width="1"/><path d="M9,0.5 V4 H12.5" fill="none" stroke="#8a8a8a" stroke-width="1"/></svg><div class="t" style="left:27px;top:782px;color:#f26a6a">NTUSER.DAT{<span style="letter-spacing:0">53</span>b<span style="letter-spacing:0">39</span>e<span style="letter-spacing:0">88</span>-<span style="letter-spacing:0">18</span>c<span style="letter-spacing:0">4</span>-<span style="letter-spacing:0">11</span>ea-a<span style="letter-spacing:0">811</span>-<span style="letter-spacing:0">000</span>d<span style="letter-spacing:0">3</span>aa<span style="letter-spacing:0">4692</span>b}.TM.blf</div><svg style="position:absolute;left:7px;top:818px;" width="13" height="17" viewBox="0 0 13 17"><path d="M0.5,0.5 H9 L12.5,4 V16.5 H0.5 Z" fill="#f8f8f8" stroke="#8a8a8a" stroke-width="1"/><path d="M9,0.5 V4 H12.5" fill="none" stroke="#8a8a8a" stroke-width="1"/></svg><div class="t" style="left:27px;top:812px;color:#f26a6a">NTUSER.DAT{<span style="letter-spacing:0">53</span>b<span style="letter-spacing:0">39</span>e<span style="letter-spacing:0">88</span>-<span style="letter-spacing:0">18</span>c<span style="letter-spacing:0">4</span>-<span style="letter-spacing:0">11</span>ea-a<span style="letter-spacing:0">811</span>-<span style="letter-spacing:0">000</span>d<span style="letter-spacing:0">3</span>aa<span style="letter-spacing:0">4692</span>b}.TMContainer<span style="letter-spacing:0">00000000000000000001</span>.regtrans-ms</div><svg style="position:absolute;left:7px;top:848px;" width="13" height="17" viewBox="0 0 13 17"><path d="M0.5,0.5 H9 L12.5,4 V16.5 H0.5 Z" fill="#f8f8f8" stroke="#8a8a8a" stroke-width="1"/><path d="M9,0.5 V4 H12.5" fill="none" stroke="#8a8a8a" stroke-width="1"/></svg><div class="t" style="left:27px;top:842px;color:#f26a6a">NTUSER.DAT{<span style="letter-spacing:0">53</span>b<span style="letter-spacing:0">39</span>e<span style="letter-spacing:0">88</span>-<span style="letter-spacing:0">18</span>c<span style="letter-spacing:0">4</span>-<span style="letter-spacing:0">11</span>ea-a<span style="letter-spacing:0">811</span>-<span style="letter-spacing:0">000</span>d<span style="letter-spacing:0">3</span>aa<span style="letter-spacing:0">4692</span>b}.TMContainer<span style="letter-spacing:0">00000000000000000002</span>.regtrans-ms</div><svg style="position:absolute;left:7px;top:878px;" width="13" height="17" viewBox="0 0 13 17"><path d="M0.5,0.5 H9 L12.5,4 V16.5 H0.5 Z" fill="#f8f8f8" stroke="#8a8a8a" stroke-width="1"/><path d="M9,0.5 V4 H12.5" fill="none" stroke="#8a8a8a" stroke-width="1"/></svg><div class="t" style="left:27px;top:872px;color:#ffffff">NTUSER.DAT</div><svg style="position:absolute;left:7px;top:908px;" width="14" height="17" viewBox="0 0 14 17"><path d="M0.5,0.5 H11.5 V9.5 H13.5 V16.5 H0.5 Z" fill="#fbe38e" stroke="#e3b94a" stroke-width="1"/><path d="M1,1 H11 V10 H13 V16 H1 Z" fill="url(#gfold)"/><path d="M10.5,10 V16" stroke="#e3b94a" stroke-width="1"/></svg><div class="t" style="left:27px;top:902px;color:#f26a6a">NetHood</div><div class="t" style="left:27px;top:902px;height:30px;line-height:30px;color:transparent">NetHood<span style="color:#8a9ca2;padding-left:9px">-&gt; C:\Users\Vjekoslav\AppData\Roaming\Microsoft\Windows\Network Shortcuts</span></div><svg style="position:absolute;left:7px;top:938px;" width="14" height="17" viewBox="0 0 14 17"><path d="M0.5,0.5 H11.5 V9.5 H13.5 V16.5 H0.5 Z" fill="#fbe38e" stroke="#e3b94a" stroke-width="1"/><path d="M1,1 H11 V10 H13 V16 H1 Z" fill="url(#gfold)"/><path d="M10.5,10 V16" stroke="#e3b94a" stroke-width="1"/></svg><div class="t" style="left:27px;top:932px;color:#72aee0">Obsidian vaults</div><div class="t" style="right:27px;top:62px;color:#72aee0;letter-spacing:0.25px">D: 43034, F: 125185, 23 GB</div><div class="t" style="right:27px;top:92px;color:#72aee0;letter-spacing:0.25px">D: 0, F: 1, 282 bytes</div><div class="t" style="right:27px;top:122px;color:#72aee0;letter-spacing:0.25px">D: 486, F: 9508, 1 GB</div><div class="t" style="right:27px;top:152px;color:#72aee0;letter-spacing:0.25px">D: 7627, F: 53422, 14 GB</div><div class="t" style="right:27px;top:182px;color:#72aee0;letter-spacing:0.25px">D: 2, F: 2, 87 bytes</div><div class="t" style="right:27px;top:212px;color:#72aee0;letter-spacing:0.25px">D: 1, F: 3, 690 bytes</div><div class="t" style="right:27px;top:242px;color:#72aee0;letter-spacing:0.25px">D: 0, F: 7, 157 KB</div><div class="t" style="right:27px;top:272px;color:#ffffff;letter-spacing:0.25px">3 KB</div><div class="t" style="right:27px;top:302px;color:#ffffff;letter-spacing:0.25px">7 KB</div><div class="t" style="right:27px;top:332px;color:#ffffff;letter-spacing:0.25px">20 bytes</div><div class="t" style="right:27px;top:362px;color:#ffffff;letter-spacing:0.25px">20 bytes</div><div class="t" style="right:27px;top:392px;color:#72aee0;letter-spacing:0.25px">D: 0, F: 1, 1 KB</div><div class="t" style="right:27px;top:422px;color:#72aee0;letter-spacing:0.25px">D: 2, F: 48, 3 MB</div><div class="t" style="right:27px;top:452px;color:#72aee0;letter-spacing:0.25px">D: 14, F: 84, 104 MB</div><div class="t" style="right:27px;top:482px;color:#72aee0;letter-spacing:0.25px">D: 0, F: 9, 11 KB</div><div class="t" style="right:27px;top:512px;color:#f26a6a;letter-spacing:0.25px">D: 0, F: 0, 0 bytes</div><div class="t" style="right:27px;top:542px;color:#f26a6a;letter-spacing:0.25px">D: 0, F: 0, 0 bytes</div><div class="t" style="right:27px;top:572px;color:#72aee0;letter-spacing:0.25px">D: 356, F: 581, 20 MB</div><div class="t" style="right:27px;top:602px;color:#72aee0;letter-spacing:0.25px">D: 230, F: 1043, 46 GB</div><div class="t" style="right:27px;top:632px;color:#72aee0;letter-spacing:0.25px">D: 12, F: 127, 12 GB</div><div class="t" style="right:27px;top:662px;color:#72aee0;letter-spacing:0.25px">D: 0, F: 3, 1 KB</div><div class="t" style="right:27px;top:692px;color:#f26a6a;letter-spacing:0.25px">D: 0, F: 0, 0 bytes</div><div class="t" style="right:27px;top:722px;color:#72aee0;letter-spacing:0.25px">D: 0, F: 1, 504 bytes</div><div class="t" style="right:27px;top:752px;color:#f26a6a;letter-spacing:0.25px">D: 0, F: 0, 0 bytes</div><div class="t" style="right:27px;top:782px;color:#f26a6a;letter-spacing:0.25px">64 KB</div><div class="t" style="right:27px;top:812px;color:#f26a6a;letter-spacing:0.25px">512 KB</div><div class="t" style="right:27px;top:842px;color:#f26a6a;letter-spacing:0.25px">512 KB</div><div class="t" style="right:27px;top:872px;color:#ffffff;letter-spacing:0.25px">2 MB</div><div class="t" style="right:27px;top:902px;color:#f26a6a;letter-spacing:0.25px">D: 0, F: 0, 0 bytes</div><div class="t" style="right:27px;top:932px;color:#72aee0;letter-spacing:0.25px">D: 17, F: 149, 38 MB</div><div class="a" style="left:919px;top:60px;width:22px;height:908px;background:#2f2e2b;"></div><div class="a" style="left:920px;top:62px;width:20px;height:24px;border:1px solid #6d7c80;border-radius:8px;background:#2c3e47"></div><svg class="a" style="left:925px;top:71px" width="10" height="6"><path d="M0,5.5 H10 L5,0.5 Z" fill="#ffffff"/></svg><div class="a" style="left:920px;top:87px;width:20px;height:548px;border:1px solid #6d7c80;border-radius:8px;background:#2c3e47"></div><div class="a" style="left:920px;top:942px;width:20px;height:24px;border:1px solid #6d7c80;border-radius:8px;background:#2c3e47"></div><svg class="a" style="left:925px;top:951px" width="10" height="6"><path d="M0,0.5 H10 L5,5.5 Z" fill="#ffffff"/></svg><div class="a" style="left:0px;top:968px;width:942px;height:1px;background:#6d6c66;"></div><div class="a" style="left:0px;top:969px;width:942px;height:29px;background:#2c3e47;"></div><svg style="position:absolute;left:12px;top:976px;" width="23" height="18" viewBox="0 0 23 18"><path d="M1,2 C1,1.3 1.3,1 2,1 H8 L10,3.5 H21 C21.7,3.5 22,3.8 22,4.5 V16 C22,16.7 21.7,17 21,17 H2 C1.3,17 1,16.7 1,16 Z" fill="none" stroke="#72aee0" stroke-width="1.5"/></svg><div class="t" style="left:40px;top:969px;height:28px;line-height:28px;color:#72aee0;letter-spacing:0.3px"><span style="letter-spacing:0">35</span>/<span style="letter-spacing:0">35</span></div><svg style="position:absolute;left:87px;top:974px;" width="15" height="20" viewBox="0 0 15 20"><path d="M1,1 H10 L14,5 V19 H1 Z M10,1 V5 H14" fill="none" stroke="#ffffff" stroke-width="1.5"/></svg><div class="t" style="left:109px;top:969px;height:28px;line-height:28px;color:#ffffff;letter-spacing:0.3px"><span style="letter-spacing:0">12</span>/<span style="letter-spacing:0">12</span></div><svg style="position:absolute;left:158px;top:975px;" width="17" height="17" viewBox="0 0 17 17"><circle cx="8.5" cy="8.5" r="7.5" fill="none" stroke="#ffffff" stroke-width="1.5"/><path d="M8.5,3.5 V8.5 L11.5,12" fill="none" stroke="#ffffff" stroke-width="1.5"/></svg><div class="t" style="left:180px;top:969px;height:28px;line-height:28px;color:#ffffff;letter-spacing:0.3px"><span style="letter-spacing:0">0</span>.<span style="letter-spacing:0">02</span> sec</div><div class="a" style="left:371px;top:971px;width:199px;height:25px;border:1px solid #6d6c66;border-radius:7px;background:#2d2d2b"></div><div class="t" style="left:371px;width:199px;text-align:center;top:969px;height:28px;line-height:28px;color:#8a9090">&gt;&gt; Type to filter &lt;&lt;</div><div class="a" style="left:736px;top:973px;width:195px;height:21px;border:1px solid #6d7c80;border-radius:10px;background:#2d2d2b"></div><div class="a" style="left:736px;top:973px;width:10px;height:21px;border:1px solid #6d7c80;border-radius:6px;background:#2c3e47"></div></div><div class="a" style="left:1364px;top:381px;width:942px;height:998px;border-radius:7px;border:1px solid #6d6c66"></div><div class="a" style="left:1541px;top:441px;width:588px;height:541px;border-radius:8px;box-shadow:0 8px 16px rgba(0,0,0,0.45)"></div><div class="a dk" style="left:1535px;top:431px;width:600px;height:551px;background:#35342f;border:1px solid #6d6c66;border-radius:7px;overflow:hidden"><div class="a" style="left:0px;top:0px;width:600px;height:29px;background:#2c3e47;"></div><div class="t" style="left:0;width:598px;text-align:center;top:0;height:29px;line-height:29px;color:#ffffff">Command</div><div class="a" style="left:0px;top:28px;width:600px;height:1px;background:#6d6c66;"></div><div class="a" style="left:0px;top:29px;width:600px;height:36px;background:#2d2d2b;"></div><div class="t" style="left:5px;top:32px;height:30px;line-height:30px;color:#ffffff;">ope</div><div class="a" style="left:31px;top:35px;width:1px;height:24px;background:#ffffff;"></div><div class="a" style="left:0px;top:65px;width:600px;height:1px;background:#6d6c66;"></div><div class="a" style="left:2px;top:96px;width:594px;height:1px;background:#3f3e39;"></div><div class="a" style="left:2px;top:67px;width:595px;height:29px;background:#f5957a;"></div><div class="t" style="left:8px;top:66px;height:30px;line-height:30px;color:#fff0ea;">Open Console</div><div class="a" style="left:2px;top:126px;width:594px;height:1px;background:#3f3e39;"></div><div class="t" style="left:8px;top:96px;height:30px;line-height:30px;color:#ffffff;">Open new tab</div><div class="t" style="right:7px;top:96px;color:#7a959e;letter-spacing:0.5px">[Ctrl+T]</div><div class="a" style="left:2px;top:156px;width:594px;height:1px;background:#3f3e39;"></div><div class="t" style="left:8px;top:126px;height:30px;line-height:30px;color:#7d8a8e;">Open in new tab</div><div class="t" style="right:7px;top:126px;color:#7a959e;letter-spacing:0.5px">[Ctrl+Enter]</div><div class="a" style="left:2px;top:186px;width:594px;height:1px;background:#3f3e39;"></div><div class="t" style="left:8px;top:156px;height:30px;line-height:30px;color:#ffffff;">Open files popup</div><div class="t" style="right:7px;top:156px;color:#7a959e;letter-spacing:0.5px">[Alt+Down]</div><div class="a" style="left:2px;top:216px;width:594px;height:1px;background:#3f3e39;"></div><div class="t" style="left:8px;top:186px;height:30px;line-height:30px;color:#ffffff;">Open config file</div><div class="a" style="left:2px;top:246px;width:594px;height:1px;background:#3f3e39;"></div><div class="t" style="left:8px;top:216px;height:30px;line-height:30px;color:#ffffff;">Open context menu</div><div class="t" style="right:7px;top:216px;color:#7a959e;letter-spacing:0.5px">[Ctrl+M] [Menu]</div><div class="a" style="left:2px;top:276px;width:594px;height:1px;background:#3f3e39;"></div><div class="t" style="left:8px;top:246px;height:30px;line-height:30px;color:#ffffff;">Open File Explorer</div><div class="a" style="left:2px;top:306px;width:594px;height:1px;background:#3f3e39;"></div><div class="t" style="left:8px;top:276px;height:30px;line-height:30px;color:#7d8a8e;">Toggle preview</div><div class="t" style="right:7px;top:276px;color:#7a959e;letter-spacing:0.5px">[Ctrl+Q]</div><div class="a" style="left:2px;top:336px;width:594px;height:1px;background:#3f3e39;"></div><div class="t" style="left:8px;top:306px;height:30px;line-height:30px;color:#ffffff;">Close panel</div><div class="t" style="right:7px;top:306px;color:#7a959e;letter-spacing:0.5px">[Ctrl+W]</div><div class="a" style="left:2px;top:366px;width:594px;height:1px;background:#3f3e39;"></div><div class="t" style="left:8px;top:336px;height:30px;line-height:30px;color:#7d8a8e;">Move to previous directory</div><div class="t" style="right:7px;top:336px;color:#7a959e;letter-spacing:0.5px">[Backspace] [Ctrl+O]</div><div class="a" style="left:2px;top:396px;width:594px;height:1px;background:#3f3e39;"></div><div class="t" style="left:8px;top:366px;height:30px;line-height:30px;color:#7d8a8e;">Move cursor to previous item</div><div class="t" style="right:7px;top:366px;color:#7a959e;letter-spacing:0.5px">[Ctrl+K] [Ctrl+Up]</div><div class="a" style="left:2px;top:426px;width:594px;height:1px;background:#3f3e39;"></div><div class="t" style="left:8px;top:396px;height:30px;line-height:30px;color:#7d8a8e;">Copy selection</div><div class="t" style="right:7px;top:396px;color:#7a959e;letter-spacing:0.5px">[Ctrl+C]</div><div class="a" style="left:2px;top:456px;width:594px;height:1px;background:#3f3e39;"></div><div class="t" style="left:8px;top:426px;height:30px;line-height:30px;color:#7d8a8e;">Select previous panel</div><div class="t" style="right:7px;top:426px;color:#7a959e;letter-spacing:0.5px">[Shift+Tab]</div><div class="a" style="left:2px;top:486px;width:594px;height:1px;background:#3f3e39;"></div><div class="t" style="left:8px;top:456px;height:30px;line-height:30px;color:#ffffff;">Move to previous directory in hierarchy</div><div class="t" style="right:7px;top:456px;color:#7a959e;letter-spacing:0.5px">[Ctrl+Backspace]</div><div class="a" style="left:2px;top:516px;width:594px;height:1px;background:#3f3e39;"></div><div class="t" style="left:8px;top:486px;height:30px;line-height:30px;color:#7d8a8e;">Extend selection to previous item</div><div class="t" style="right:7px;top:486px;color:#7a959e;letter-spacing:0.5px">[Shift+K] [Shift+Up]</div><div class="t" style="left:8px;top:516px;height:30px;line-height:30px;color:#ffffff;">Toggle expand directory</div><div class="t" style="right:7px;top:516px;color:#7a959e;letter-spacing:0.5px">[Ctrl+B]</div></div></body></html>
